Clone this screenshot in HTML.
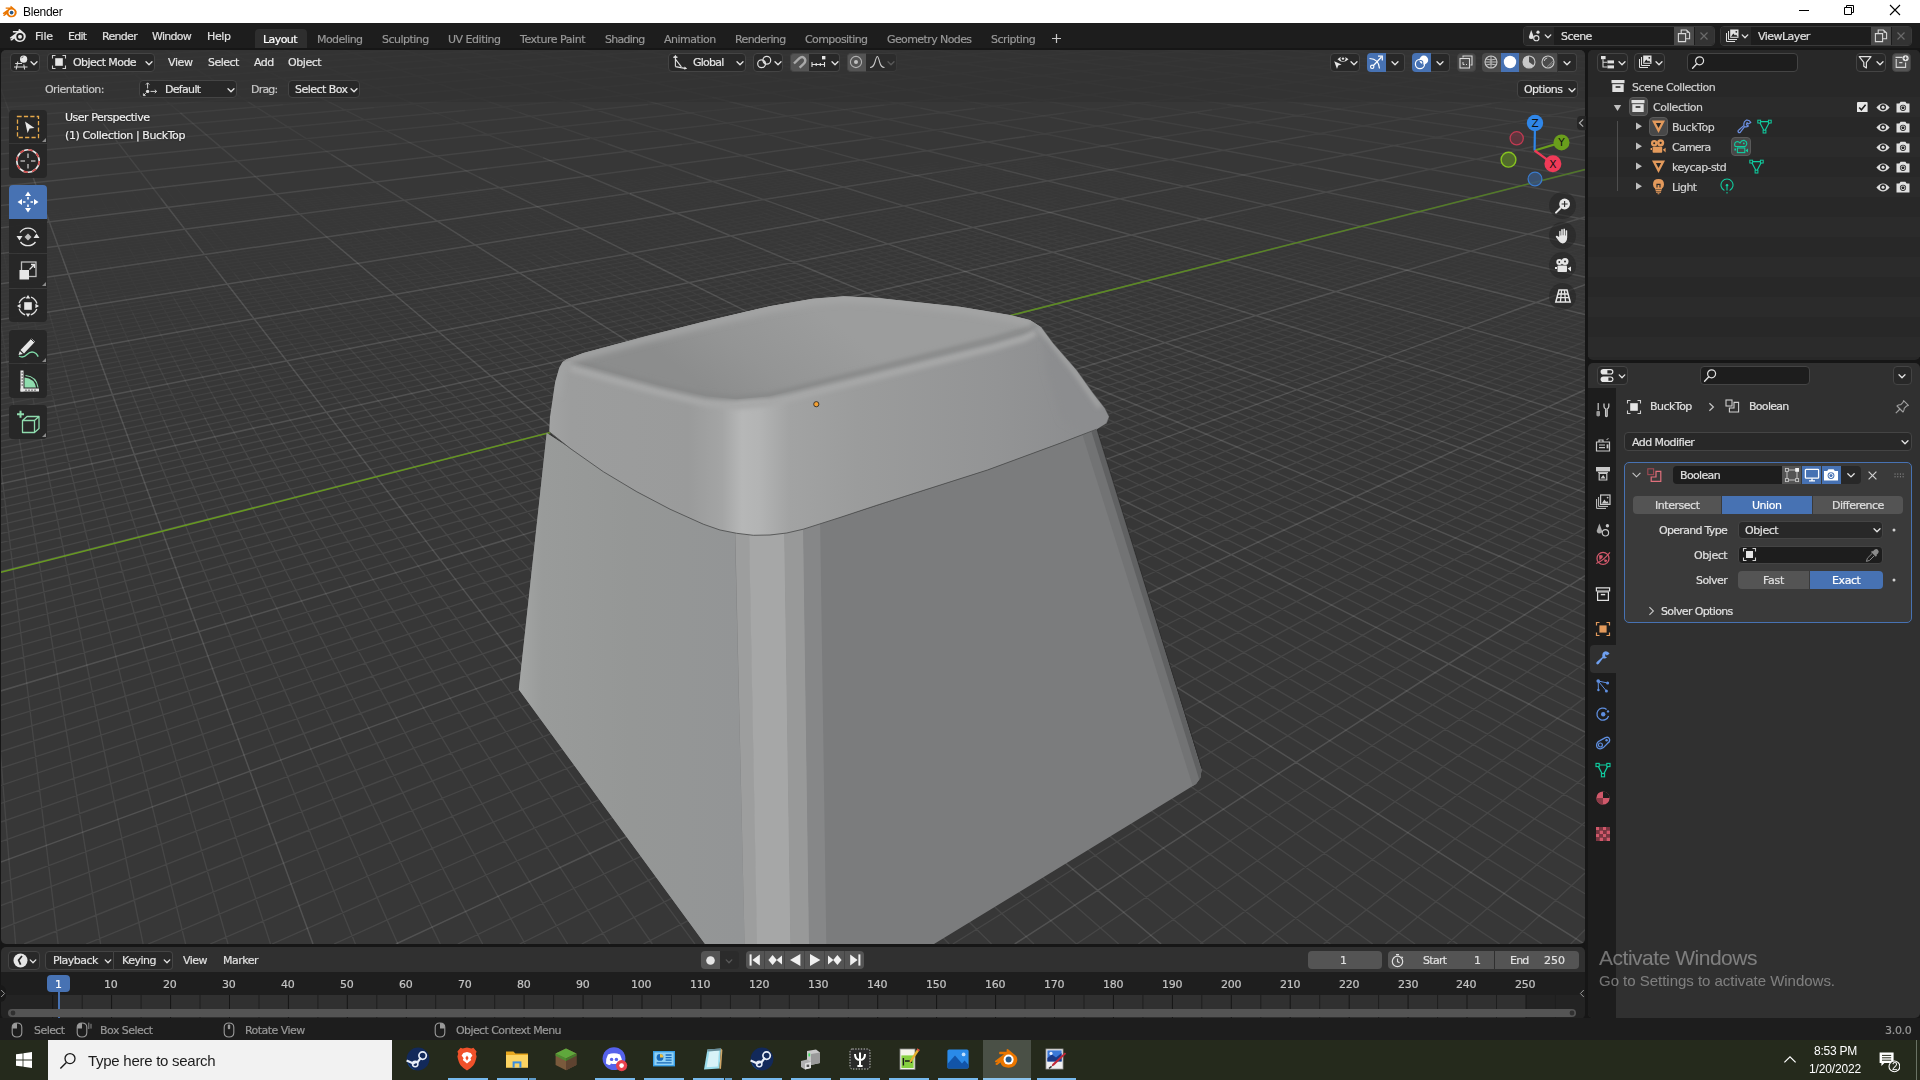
<!DOCTYPE html><html><head><meta charset="utf-8"><title>Blender</title><style>*{box-sizing:border-box;margin:0;padding:0}
html,body{width:1920px;height:1080px;overflow:hidden;background:#161616;font-family:"DejaVu Sans","Liberation Sans",sans-serif;font-size:11px;color:#e6e6e6}
.t{position:absolute;white-space:pre;-webkit-text-stroke:0.2px;will-change:transform}
.b{position:absolute;display:block}
#title{position:absolute;left:0;top:0;width:1920px;height:23px;background:#fff}
#topbar{position:absolute;left:0;top:23px;width:1920px;height:25px;background:#1d1d1d}
#vp{position:absolute;left:1px;top:50px;width:1584px;height:894px;background:#373737;border-radius:5px;overflow:hidden}
#vpsvg{position:absolute;left:0;top:0}
#outl{position:absolute;left:1588px;top:50px;width:332px;height:310px;background:#282828;border-radius:5px;overflow:hidden}
#props{position:absolute;left:1588px;top:363px;width:332px;height:655px;background:#303030;border-radius:5px;overflow:hidden}
#tl{position:absolute;left:1px;top:947px;width:1584px;height:71px;background:#1d1d1d;border-radius:5px;overflow:hidden}
#status{position:absolute;left:0;top:1018px;width:1920px;height:22px;background:#1d1d1d}
#taskbar{position:absolute;left:0;top:1040px;width:1920px;height:40px;background:#252a1c}
</style></head><body>
<div id="title">
<svg class="b" style="left:2.4px;top:4.6px;" width="16" height="15" viewBox="0 0 16 15"><g transform="scale(0.88)"><path d="M1 9.2 L7.6 4.2 L4.2 4.2 L4.2 2.9 L9.6 2.9 L9.6 1.4 Q9.9 0.6 10.8 1.3 L15.6 5.3 Q17.2 7 16.6 9.6 Q15.6 13.6 11 13.9 Q6.6 13.9 5.4 10.4 L3 12.2 Q1.6 12.8 1.3 11.6 L3.6 9.8 L1.6 10.4 Q0.6 10 1 9.2Z" fill="#ea7600"/><circle cx="10.9" cy="8.6" r="3.5" fill="#fff"/><circle cx="10.9" cy="8.6" r="2.1" fill="#265787"/></g></svg>
<span class="t" style="left:23.00px;top:4.74px;font-size:12px;line-height:14px;letter-spacing:-0.266px;color:#000;font-family:'Liberation Sans',sans-serif;-webkit-text-stroke:0;">Blender</span>
<svg class="b" style="left:1797px;top:4px;" width="14" height="14" viewBox="0 0 14 14"><path d="M2 6.5H12" stroke="#000" stroke-width="1"/></svg>
<svg class="b" style="left:1842px;top:3px;" width="14" height="14" viewBox="0 0 14 14"><path d="M2.5 4.5H9.5V11.5H2.5Z M4.5 4.5V2.5H11.5V9.5H9.5" fill="none" stroke="#000" stroke-width="1"/></svg>
<svg class="b" style="left:1888px;top:3px;" width="14" height="14" viewBox="0 0 14 14"><path d="M2 2L12 12M12 2L2 12" stroke="#000" stroke-width="1.1"/></svg>
</div>
<div id="topbar"></div>
<svg class="b" style="left:9px;top:28px;" width="17" height="16" viewBox="0 0 17 16"><g transform="scale(1.0)"><path d="M1 9.6 L7.8 4.4 L4.2 4.4 Q3.4 3.6 4.2 2.9 L9.4 2.9 L9.6 1.4 Q10 0.6 10.9 1.3 L15.6 5.3 Q17.2 7 16.6 9.6 Q15.6 13.8 11 14 Q6.6 14 5.4 10.6 L3 12.4 Q1.6 13 1.3 11.8 L3.6 10 L1.8 10.6 Q0.6 10.4 1 9.6Z" fill="#e6e6e6"/><circle cx="11" cy="8.8" r="3.7" fill="#1d1d1d"/><circle cx="11" cy="8.8" r="2.0" fill="#e6e6e6"/></g></svg>
<span class="t" style="left:35.00px;top:30.00px;font-size:11px;line-height:13px;letter-spacing:-0.102px;color:#e0e0e0;font-family:'DejaVu Sans','Liberation Sans',sans-serif;">File</span>
<span class="t" style="left:68.30px;top:30.00px;font-size:11px;line-height:13px;letter-spacing:-0.726px;color:#e0e0e0;font-family:'DejaVu Sans','Liberation Sans',sans-serif;">Edit</span>
<span class="t" style="left:102.00px;top:30.00px;font-size:11px;line-height:13px;letter-spacing:-0.694px;color:#e0e0e0;font-family:'DejaVu Sans','Liberation Sans',sans-serif;">Render</span>
<span class="t" style="left:152.00px;top:30.00px;font-size:11px;line-height:13px;letter-spacing:-0.729px;color:#e0e0e0;font-family:'DejaVu Sans','Liberation Sans',sans-serif;">Window</span>
<span class="t" style="left:207.00px;top:30.00px;font-size:11px;line-height:13px;letter-spacing:-0.370px;color:#e0e0e0;font-family:'DejaVu Sans','Liberation Sans',sans-serif;">Help</span>
<div class="b" style="left:255px;top:29px;width:52px;height:19px;background:#2e2e2e;border-radius:4px 4px 0 0;"></div>
<span class="t" style="left:263.00px;top:33.00px;font-size:11px;line-height:13px;letter-spacing:-0.566px;color:#ffffff;font-family:'DejaVu Sans','Liberation Sans',sans-serif;">Layout</span>
<span class="t" style="left:317.00px;top:33.00px;font-size:11px;line-height:13px;letter-spacing:-0.567px;color:#989898;font-family:'DejaVu Sans','Liberation Sans',sans-serif;">Modeling</span>
<span class="t" style="left:382.00px;top:33.00px;font-size:11px;line-height:13px;letter-spacing:-0.513px;color:#989898;font-family:'DejaVu Sans','Liberation Sans',sans-serif;">Sculpting</span>
<span class="t" style="left:448.00px;top:33.00px;font-size:11px;line-height:13px;letter-spacing:-0.489px;color:#989898;font-family:'DejaVu Sans','Liberation Sans',sans-serif;">UV Editing</span>
<span class="t" style="left:520.00px;top:33.00px;font-size:11px;line-height:13px;letter-spacing:-0.460px;color:#989898;font-family:'DejaVu Sans','Liberation Sans',sans-serif;">Texture Paint</span>
<span class="t" style="left:605.00px;top:33.00px;font-size:11px;line-height:13px;letter-spacing:-0.741px;color:#989898;font-family:'DejaVu Sans','Liberation Sans',sans-serif;">Shading</span>
<span class="t" style="left:663.75px;top:33.00px;font-size:11px;line-height:13px;letter-spacing:-0.481px;color:#989898;font-family:'DejaVu Sans','Liberation Sans',sans-serif;">Animation</span>
<span class="t" style="left:735.00px;top:33.00px;font-size:11px;line-height:13px;letter-spacing:-0.630px;color:#989898;font-family:'DejaVu Sans','Liberation Sans',sans-serif;">Rendering</span>
<span class="t" style="left:805.00px;top:33.00px;font-size:11px;line-height:13px;letter-spacing:-0.586px;color:#989898;font-family:'DejaVu Sans','Liberation Sans',sans-serif;">Compositing</span>
<span class="t" style="left:887.00px;top:33.00px;font-size:11px;line-height:13px;letter-spacing:-0.592px;color:#989898;font-family:'DejaVu Sans','Liberation Sans',sans-serif;">Geometry Nodes</span>
<span class="t" style="left:991.25px;top:33.00px;font-size:11px;line-height:13px;letter-spacing:-0.519px;color:#989898;font-family:'DejaVu Sans','Liberation Sans',sans-serif;">Scripting</span>
<svg class="b" style="left:1051px;top:33px;" width="11" height="11" viewBox="0 0 11 11"><path d="M5.5 1V10M1 5.5H10" stroke="#c8c8c8" stroke-width="1.2"/></svg>
<div class="b" style="left:1523px;top:26px;width:192px;height:19.5px;background:#1d1d1d;border-radius:4px;border:1px solid #3a3a3a;"></div>
<div class="b" style="left:1524px;top:27px;width:30px;height:17.5px;background:#282828;border-radius:3px 0 0 3px;"></div>
<div class="b" style="left:1674px;top:27px;width:20px;height:17.5px;background:#4a4a4a;"></div>
<div class="b" style="left:1694.5px;top:27px;width:19.5px;height:17.5px;background:#333;border-radius:0 3px 3px 0;"></div>
<span class="t" style="left:1561.00px;top:29.70px;font-size:11px;line-height:13px;letter-spacing:-0.550px;color:#e0e0e0;font-family:'DejaVu Sans','Liberation Sans',sans-serif;">Scene</span>
<svg class="b" style="left:1542.5px;top:31px;" width="10" height="10" viewBox="0 0 10 10"><path d="M2.2 3.9 L5 6.7 L7.8 3.9" fill="none" stroke="#e6e6e6" stroke-width="1.3" stroke-linecap="round" stroke-linejoin="round"/></svg>
<svg class="b" style="left:1676px;top:28px;" width="16" height="16" viewBox="0 0 16 16"><path d="M2.4 5.6H9.6V13.6H2.4Z" fill="none" stroke="#d8d8d8" stroke-width="1.1"/><path d="M5.2 5.4V2H10.4L13.6 5V10.8H9.8" fill="none" stroke="#d8d8d8" stroke-width="1.1"/><path d="M10.6 2.2V4.8H13.2Z" fill="#d8d8d8"/></svg>
<svg class="b" style="left:1697px;top:29px;" width="14" height="14" viewBox="0 0 14 14"><path d="M3.5 3.5L10.5 10.5M10.5 3.5L3.5 10.5" stroke="#6a6a6a" stroke-width="1.2"/></svg>
<svg class="b" style="left:1527px;top:28px;" width="16" height="16" viewBox="0 0 16 16"><path d="M4.2 2 L6.6 8.5 Q7 11 4.2 11 Q1.6 11 2 8.5Z" fill="#e0e0e0"/><circle cx="9.3" cy="10.2" r="2.6" fill="none" stroke="#e0e0e0" stroke-width="1.1"/><circle cx="11" cy="4.2" r="1.6" fill="#e0e0e0"/></svg>
<div class="b" style="left:1720px;top:26px;width:192px;height:19.5px;background:#1d1d1d;border-radius:4px;border:1px solid #3a3a3a;"></div>
<div class="b" style="left:1721px;top:27px;width:30px;height:17.5px;background:#282828;border-radius:3px 0 0 3px;"></div>
<div class="b" style="left:1871px;top:27px;width:20px;height:17.5px;background:#4a4a4a;"></div>
<div class="b" style="left:1891.5px;top:27px;width:19.5px;height:17.5px;background:#333;border-radius:0 3px 3px 0;"></div>
<span class="t" style="left:1758.00px;top:29.70px;font-size:11px;line-height:13px;letter-spacing:-0.550px;color:#e0e0e0;font-family:'DejaVu Sans','Liberation Sans',sans-serif;">ViewLayer</span>
<svg class="b" style="left:1739.5px;top:31px;" width="10" height="10" viewBox="0 0 10 10"><path d="M2.2 3.9 L5 6.7 L7.8 3.9" fill="none" stroke="#e6e6e6" stroke-width="1.3" stroke-linecap="round" stroke-linejoin="round"/></svg>
<svg class="b" style="left:1873px;top:28px;" width="16" height="16" viewBox="0 0 16 16"><path d="M2.4 5.6H9.6V13.6H2.4Z" fill="none" stroke="#d8d8d8" stroke-width="1.1"/><path d="M5.2 5.4V2H10.4L13.6 5V10.8H9.8" fill="none" stroke="#d8d8d8" stroke-width="1.1"/><path d="M10.6 2.2V4.8H13.2Z" fill="#d8d8d8"/></svg>
<svg class="b" style="left:1894px;top:29px;" width="14" height="14" viewBox="0 0 14 14"><path d="M3.5 3.5L10.5 10.5M10.5 3.5L3.5 10.5" stroke="#6a6a6a" stroke-width="1.2"/></svg>
<svg class="b" style="left:1724px;top:28px;" width="16" height="16" viewBox="0 0 16 16"><path d="M2.5 5V13.5H11" fill="none" stroke="#e0e0e0" stroke-width="1"/><path d="M4.5 3V11.5H13" fill="none" stroke="#e0e0e0" stroke-width="1"/><rect x="6.2" y="1.5" width="8.3" height="8.3" fill="#e0e0e0"/><path d="M7 8.8L9.3 5.6L11 7.6L12 6.6L13.7 8.8Z" fill="#222"/><circle cx="12.3" cy="3.8" r="0.9" fill="#222"/></svg>
<div id="vp"><svg id="vpsvg" width="1584" height="894" viewBox="1 50 1584 894">
<path d="M1528.4 252.5 L1585.0 234.6M1528.4 246.1 L1585.0 228.5M1528.4 239.9 L1585.0 222.7M1471.8 244.8 L1528.4 228.2L1585.0 211.6M1471.8 239.0 L1528.4 222.7L1585.0 206.3M1471.8 233.4 L1528.4 217.3L1585.0 201.2M1415.2 243.7 L1471.8 227.9L1528.4 212.1L1585.0 196.3M1415.2 238.2 L1471.8 222.6L1528.4 207.1M1415.2 232.8 L1471.8 217.5L1528.4 202.2M1415.2 227.6 L1471.8 212.6L1528.4 197.5M1358.6 237.4 L1415.2 222.6L1471.8 207.8L1528.4 193.0M1358.6 232.3 L1415.2 217.7L1471.8 203.1M1358.6 222.5 L1415.2 208.4L1471.8 194.2M1302.0 231.8 L1358.6 217.9L1415.2 203.9L1471.8 190.0M1302.0 227.1 L1358.6 213.3L1415.2 199.6M1302.0 222.5 L1358.6 208.9L1415.2 195.4M1302.0 218.0 L1358.6 204.7L1415.2 191.3M1245.4 226.8 L1302.0 213.7L1358.6 200.5L1415.2 187.4M1245.4 222.4 L1302.0 209.4L1358.6 196.5L1415.2 183.5M1245.4 218.1 L1302.0 205.3L1358.6 192.5M1245.4 214.0 L1302.0 201.3L1358.6 188.7M1188.8 218.3 L1245.4 206.0L1302.0 193.7L1358.6 181.4M1188.8 214.2 L1245.4 202.1L1302.0 190.0M1188.8 210.3 L1245.4 198.3L1302.0 186.4M1174.1 209.6 L1232.8 197.3L1291.5 185.0M1115.4 217.9 L1174.1 205.8L1232.8 193.7L1291.5 181.6M1115.4 214.1 L1174.1 202.2L1232.8 190.2L1291.5 178.2M1115.4 210.4 L1174.1 198.6L1232.8 186.8L1291.5 174.9M1115.4 206.8 L1174.1 195.1L1232.8 183.4M1115.4 203.2 L1174.1 191.7L1232.8 180.1M1056.7 207.7 L1115.4 196.4L1174.1 185.1L1232.8 173.8M1056.7 204.2 L1115.4 193.1L1174.1 181.9L1232.8 170.8M1056.7 200.9 L1115.4 189.8L1174.1 178.8M1056.7 197.6 L1115.4 186.7L1174.1 175.8M998.0 205.1 L1056.7 194.4L1115.4 183.6L1174.1 172.8M998.0 201.9 L1056.7 191.2L1115.4 180.6L1174.1 169.9M998.0 198.7 L1056.7 188.1L1115.4 177.6L1174.1 167.1M939.3 206.0 L998.0 195.6L1056.7 185.1L1115.4 174.7M939.3 202.8 L998.0 192.5L1056.7 182.2L1115.4 171.9M880.6 206.8 L939.3 196.7L998.0 186.6L1056.7 176.5L1115.4 166.4M821.9 213.7 L880.6 203.7L939.3 193.7L998.0 183.7L1056.7 173.7L1115.4 163.7M821.9 210.6 L880.6 200.7L939.3 190.8L998.0 180.9L1056.7 171.0L1115.4 161.1M763.1 217.3 L821.9 207.5L880.6 197.7L939.3 187.9L998.0 178.1L1056.7 168.3M763.1 214.2 L821.9 204.5L880.6 194.8L939.3 185.1L998.0 175.4L1056.7 165.7M704.4 220.8 L763.1 211.2L821.9 201.6L880.6 192.0L939.3 182.4L998.0 172.8L1056.7 163.2M704.4 217.7 L763.1 208.2L821.9 198.7L880.6 189.2L939.3 179.7L998.0 170.2L1056.7 160.7M645.7 224.1 L704.4 214.7L763.1 205.3L821.9 195.9L880.6 186.5L939.3 177.0L998.0 167.6L1056.7 158.2M645.7 221.1 L704.4 211.8L763.1 202.4L821.9 193.1L880.6 183.8L939.3 174.4L998.0 165.1L1056.7 155.8M587.0 224.3 L645.7 215.2L704.4 206.0L763.1 196.9L821.9 187.7L880.6 178.6L939.3 169.4L998.0 160.3M528.3 230.4 L587.0 221.4L645.7 212.3L704.4 203.2L763.1 194.2L821.9 185.1L880.6 176.0L939.3 167.0M469.6 236.4 L528.3 227.4L587.0 218.5L645.7 209.5L704.4 200.5L763.1 191.5L821.9 182.5L880.6 173.5L939.3 164.6M469.6 233.4 L528.3 224.5L587.0 215.6L645.7 206.7L704.4 197.8L763.1 188.9L821.9 180.0L880.6 171.1L939.3 162.2M410.9 239.3 L469.6 230.4L528.3 221.6L587.0 212.8L645.7 204.0L704.4 195.2L763.1 186.3L821.9 177.5L880.6 168.7M410.9 236.3 L469.6 227.5L528.3 218.8L587.0 210.0L645.7 201.3L704.4 192.6L763.1 183.8L821.9 175.1L880.6 166.3M352.2 242.0 L410.9 233.3L469.6 224.7L528.3 216.0L587.0 207.3L645.7 198.7L704.4 190.0L763.1 181.4L821.9 172.7M352.2 239.0 L410.9 230.4L469.6 221.8L528.3 213.3L587.0 204.7L645.7 196.1L704.4 187.5L763.1 178.9L821.9 170.3M293.5 244.6 L352.2 236.1L410.9 227.6L469.6 219.1L528.3 210.6L587.0 202.1L645.7 193.6L704.4 185.0L763.1 176.5L821.9 168.0M234.8 247.2 L293.5 238.8L352.2 230.4L410.9 222.1L469.6 213.7L528.3 205.3L587.0 197.0L645.7 188.6L704.4 180.3L763.1 171.9M176.1 252.5 L234.8 244.2L293.5 236.0L352.2 227.7L410.9 219.4L469.6 211.1L528.3 202.8L587.0 194.5L645.7 186.2L704.4 177.9M176.1 249.6 L234.8 241.4L293.5 233.2L352.2 224.9L410.9 216.7L469.6 208.5L528.3 200.3L587.0 192.1L645.7 183.8L704.4 175.6M117.4 254.9 L176.1 246.7L234.8 238.6L293.5 230.4L352.2 222.3L410.9 214.1L469.6 206.0L528.3 197.8L587.0 189.7L645.7 181.5M58.7 260.1 L117.4 252.0L176.1 243.9L234.8 235.8L293.5 227.7L352.2 219.6L410.9 211.6L469.6 203.5L528.3 195.4L587.0 187.3L645.7 179.2M58.6 257.1 L117.3 249.1L175.9 241.1L234.5 233.1L293.1 225.1L351.8 217.1L410.4 209.1L469.0 201.1L527.6 193.1L586.3 185.1M0.0 262.2 L58.3 254.3L116.6 246.4L174.9 238.5L233.2 230.6L291.5 222.7L349.8 214.8L408.2 206.9L466.5 199.0L524.8 191.1L583.1 183.2M0.0 259.3 L58.0 251.5L116.0 243.7L174.0 236.0L232.0 228.2L289.9 220.4L347.9 212.6L405.9 204.8L463.9 197.0L521.9 189.2L579.9 181.4M0.0 256.5 L57.7 248.8L115.3 241.1L173.0 233.4L230.7 225.7L288.4 218.1L346.0 210.4L403.7 202.7L461.4 195.0L519.0 187.3M0.0 250.9 L59.2 243.1L118.5 235.4L177.7 227.6L236.9 219.9L296.1 212.1L355.4 204.3L414.6 196.6L473.8 188.8M0.0 248.2 L58.9 240.5L117.8 232.9L176.7 225.2L235.6 217.6L294.5 209.9L353.4 202.2L412.3 194.6M0.0 245.5 L58.6 238.0L117.1 230.4L175.7 222.9L234.3 215.3L292.8 207.7L351.4 200.2L410.0 192.6M0.0 242.9 L58.2 235.4L116.5 228.0L174.7 220.5L232.9 213.1L291.2 205.6L349.4 198.2L407.6 190.7M0.0 240.3 L57.9 233.0L115.8 225.6L173.7 218.2L231.6 210.9L289.5 203.5L347.4 196.2M0.0 237.8 L57.6 230.5L115.1 223.2L172.7 216.0L230.3 208.7L287.9 201.5L345.4 194.2M0.0 235.2 L59.5 227.8L119.1 220.3L178.6 212.9L238.1 205.4L297.7 198.0M0.0 232.8 L59.2 225.4L118.4 218.1L177.6 210.7L236.7 203.4M0.0 230.3 L58.8 223.1L117.7 215.8L176.5 208.6L235.4 201.3M0.0 225.6 L58.2 218.5L116.3 211.4L174.5 204.4M0.0 223.2 L57.8 216.3L115.6 209.3M0.0 220.9 L57.5 214.0L114.9 207.2M0.0 218.7 L59.5 211.6M0.0 216.4 L59.1 209.4M32.6 254.4 L16.3 196.9M54.1 276.6 L36.1 221.0M93.6 262.8 L70.2 210.4M106.7 259.6 L81.0 206.9M121.2 259.6 L93.4 206.9M129.1 247.9 L100.8 198.2M143.1 247.9 L112.8 198.2M157.2 247.9 L124.8 198.2M164.0 237.4 L131.4 190.3M177.6 237.4 L143.1 190.3M197.2 228.0 L160.8 183.2M210.4 228.0 L172.2 183.2M254.1 262.1 L216.0 219.5M268.8 262.1 L228.9 219.5M283.4 262.1 L241.7 219.5M288.1 252.4 L246.7 211.7M302.3 252.4 L259.3 211.7M306.8 243.6 L264.1 204.7M320.7 243.6 L276.3 204.7M338.5 235.5 L292.9 198.2M342.6 228.0 L297.4 192.2M355.8 228.0 L309.2 192.2M369.0 228.0 L320.9 192.2M372.7 221.1 L325.0 186.7M385.6 221.1 L336.6 186.7M437.7 247.9 L389.2 214.7L340.6 181.6M451.7 247.9 L401.8 214.7L351.9 181.6M454.8 240.8 L405.3 208.8M473.3 235.3 L422.7 204.3M477.9 230.0 L427.6 199.8M482.6 225.0 L432.5 195.6M498.3 226.5 L446.6 196.9M502.9 221.7 L451.4 192.9M507.5 217.2 L456.2 189.1M563.2 240.1 L512.1 212.8L461.0 185.5M528.5 214.8 L475.6 187.2M585.6 237.6 L533.0 210.6L480.4 183.7M594.2 228.5 L542.1 202.8L490.0 177.2M613.1 231.2 L559.1 205.2L505.1 179.2M617.4 226.9 L563.6 201.5L509.8 176.1M621.6 222.8 L568.1 198.0M625.9 218.9 L572.6 194.6M630.1 215.0 L577.1 191.3M634.4 211.3 L581.6 188.2M654.0 214.4 L599.2 190.8M658.2 210.8 L603.6 187.7M720.5 226.2 L666.5 204.0L612.5 181.9M724.5 222.5 L670.7 200.8L616.9 179.1M728.4 218.9 L674.9 197.7L621.3 176.4M750.9 222.7 L695.3 201.0L639.7 179.3M754.7 219.2 L699.4 197.9L644.0 176.7M758.6 215.8 L703.5 195.0L648.4 174.1M762.4 212.5 L707.6 192.1L652.8 171.7M766.3 209.4 L711.7 189.3L657.1 169.3M770.1 206.3 L715.8 186.6M797.4 207.2 L741.1 187.4L684.9 167.7M801.1 204.3 L745.2 184.8M860.6 220.4 L804.9 201.4L749.2 182.3M864.1 217.3 L808.7 198.6L753.2 179.9M867.6 214.2 L812.4 195.8L757.2 177.5M871.1 211.2 L816.2 193.2L761.2 175.2M874.6 208.3 L819.9 190.6L765.3 172.9M901.3 212.9 L844.4 194.7L787.4 176.5M904.7 210.0 L848.0 192.1L791.3 174.2M911.4 204.5 L855.3 187.2L799.2 169.9M914.8 201.8 L859.0 184.8L803.1 167.8M918.2 199.2 L862.6 182.5L807.0 165.8M921.5 196.6 L866.2 180.2L811.0 163.8M979.9 210.3 L924.9 194.1L869.9 178.0L814.9 161.9M952.9 198.8 L895.4 182.2L838.0 165.5M956.1 196.3 L899.0 180.0L841.8 163.6M959.4 193.9 L902.5 177.8L845.6 161.7M1019.2 207.4 L962.6 191.5L906.0 175.7L849.4 159.9M1025.1 202.3 L969.1 186.9L913.1 171.6M1028.0 199.8 L972.3 184.7L916.6 169.6M1031.0 197.4 L975.5 182.5L920.1 167.7M1089.0 209.6 L1033.9 195.0L978.8 180.4L923.7 165.8M1065.7 200.2 L1008.0 185.1L950.3 170.0M1125.9 212.7 L1068.5 197.9L1011.1 183.0L953.7 168.1M1128.3 210.2 L1071.3 195.5L1014.2 180.9L957.1 166.2M1130.8 207.7 L1074.0 193.2L1017.3 178.8L960.5 164.4M1189.8 219.4 L1133.3 205.2L1076.8 191.0L1020.4 176.8L963.9 162.6M1194.1 214.2 L1138.2 200.4L1082.4 186.6L1026.5 172.9L970.7 159.1M1251.8 225.2 L1196.2 211.6L1140.7 198.1L1085.2 184.5L1029.6 171.0L974.1 157.4M1235.2 218.1 L1176.9 204.0L1118.6 189.9L1060.3 175.8L1002.1 161.7M1295.2 229.4 L1237.2 215.5L1179.2 201.6L1121.3 187.7L1063.3 173.9L1005.3 160.0M1296.8 226.6 L1239.1 213.0L1181.5 199.3L1123.9 185.6L1066.2 172.0L1008.6 158.3M1298.4 223.9 L1241.1 210.5L1183.8 197.0L1126.5 183.6L1069.2 170.1L1011.8 156.7M1357.0 234.6 L1300.1 221.3L1243.1 208.1L1186.1 194.8L1129.1 181.6L1072.1 168.3M1358.3 231.8 L1301.7 218.7L1245.0 205.7L1188.4 192.6L1131.7 179.6L1075.0 166.5M1359.7 229.1 L1303.3 216.2L1247.0 203.3L1190.6 190.5L1134.3 177.6L1078.0 164.8M1417.9 236.3 L1362.3 223.8L1306.6 211.3L1250.9 198.8L1195.2 186.3L1139.5 173.8L1083.8 161.4M1418.9 233.5 L1363.6 221.2L1308.2 208.9L1252.8 196.6L1197.5 184.3L1142.1 172.0M1468.5 241.5 L1410.2 228.6L1351.9 215.8L1293.6 203.0L1235.4 190.1L1177.1 177.3L1118.8 164.5M1469.2 238.6 L1411.2 226.0L1353.3 213.4L1295.4 200.7L1237.5 188.1L1179.5 175.4M1527.4 248.3 L1469.8 235.9L1412.3 223.4L1354.7 211.0L1297.1 198.5L1239.5 186.0L1181.9 173.6M1527.8 245.4 L1470.5 233.2L1413.3 220.9L1356.1 208.6L1298.8 196.3L1241.6 184.0L1184.4 171.8M1585.0 254.7 L1528.1 242.6L1471.2 230.5L1414.3 218.4L1357.4 206.3L1300.6 194.2L1243.7 182.1L1186.8 170.0M1585.0 251.7 L1528.5 239.8L1471.9 227.8L1415.4 215.9L1358.8 204.0L1302.3 192.1L1245.7 180.1M1585.0 248.8 L1528.8 237.0L1472.6 225.3L1416.4 213.5L1360.2 201.8L1304.0 190.0L1247.8 178.3M1585.0 243.0 L1529.5 231.6L1474.0 220.2L1418.5 208.8L1363.0 197.4L1307.4 186.0M1585.0 240.2 L1526.4 228.3L1467.8 216.3L1409.2 204.4L1350.5 192.4L1291.9 180.5M1585.0 237.5 L1526.8 225.7L1468.5 213.9L1410.3 202.2L1352.0 190.4M1585.0 234.8 L1527.1 223.2L1469.2 211.6L1411.4 200.0L1353.5 188.4M1585.0 232.2 L1527.5 220.7L1470.0 209.3L1412.5 197.8L1354.9 186.4M1585.0 229.5 L1527.9 218.3L1470.7 207.0L1413.6 195.7L1356.4 184.4M1585.0 227.0 L1528.2 215.8L1471.4 204.7L1414.7 193.6M1585.0 224.4 L1528.6 213.5L1472.2 202.5L1415.8 191.5M1585.0 222.0 L1529.0 211.1L1472.9 200.3L1416.9 189.5M1585.0 217.1 L1529.7 206.6L1474.4 196.1M1585.0 214.7 L1526.4 203.7M1585.0 212.4 L1526.8 201.5M1585.0 210.1 L1527.2 199.3" stroke="#fff" stroke-opacity="0.010" fill="none" stroke-width="1.35"/>
<path d="M1530.3 296.1 L1585.0 276.6M1528.4 288.6 L1585.0 268.9M1528.4 280.8 L1585.0 261.5M1528.4 273.3 L1585.0 254.4M1471.8 284.7 L1528.4 266.1L1585.0 247.5M1471.8 277.4 L1528.4 259.2L1585.0 241.0M1471.8 270.4 L1528.4 252.5M1415.2 281.2 L1471.8 263.7L1528.4 246.1M1415.2 274.4 L1471.8 257.2L1528.4 239.9M1415.2 261.5 L1471.8 244.8M1358.6 271.7 L1415.2 255.3L1471.8 239.0M1358.6 265.5 L1415.2 249.4L1471.8 233.4M1358.6 259.5 L1415.2 243.7M1302.0 269.2 L1358.6 253.7L1415.2 238.2M1302.0 263.4 L1358.6 248.1L1415.2 232.8M1302.0 257.7 L1358.6 242.6L1415.2 227.6M1302.0 252.2 L1358.6 237.4M1245.4 261.4 L1302.0 246.9L1358.6 232.3M1245.4 250.8 L1302.0 236.7L1358.6 222.5M1245.4 245.7 L1302.0 231.8M1188.8 254.5 L1245.4 240.8L1302.0 227.1M1188.8 249.5 L1245.4 236.0L1302.0 222.5M1188.8 244.7 L1245.4 231.4L1302.0 218.0M1188.8 240.0 L1245.4 226.8M1132.1 248.4 L1188.8 235.4L1245.4 222.4M1132.1 243.7 L1188.8 230.9L1245.4 218.1M1132.1 239.2 L1188.8 226.6L1245.4 214.0M1075.5 242.8 L1132.1 230.5L1188.8 218.3M1075.5 238.5 L1132.1 226.4L1188.8 214.2M1075.5 234.3 L1132.1 222.3L1188.8 210.3M1056.7 234.1 L1115.4 221.9L1174.1 209.6M1056.7 230.1 L1115.4 217.9M1056.7 226.1 L1115.4 214.1M998.0 234.1 L1056.7 222.2L1115.4 210.4M998.0 230.1 L1056.7 218.5L1115.4 206.8M939.3 237.9 L998.0 226.3L1056.7 214.8L1115.4 203.2M880.6 241.5 L939.3 230.2L998.0 218.9L1056.7 207.7M880.6 237.7 L939.3 226.5L998.0 215.4L1056.7 204.2M821.9 244.9 L880.6 233.9L939.3 222.9L998.0 211.9L1056.7 200.9M821.9 241.2 L880.6 230.3L939.3 219.4L998.0 208.5L1056.7 197.6M763.1 248.2 L821.9 237.5L880.6 226.7L939.3 215.9L998.0 205.1M704.4 255.2 L763.1 244.5L821.9 233.8L880.6 223.2L939.3 212.5L998.0 201.9M704.4 251.4 L763.1 240.8L821.9 230.3L880.6 219.8L939.3 209.2L998.0 198.7M645.7 258.1 L704.4 247.7L763.1 237.3L821.9 226.8L880.6 216.4L939.3 206.0M645.7 254.4 L704.4 244.1L763.1 233.8L821.9 223.5L880.6 213.1L939.3 202.8M528.3 267.4 L587.0 257.3L645.7 247.2L704.4 237.1L763.1 227.0L821.9 216.9L880.6 206.8M528.3 263.7 L587.0 253.7L645.7 243.7L704.4 233.7L763.1 223.7L821.9 213.7M469.6 270.0 L528.3 260.1L587.0 250.2L645.7 240.3L704.4 230.4L763.1 220.5L821.9 210.6M469.6 266.3 L528.3 256.5L587.0 246.7L645.7 236.9L704.4 227.1L763.1 217.3M410.9 272.4 L469.6 262.7L528.3 253.0L587.0 243.3L645.7 233.6L704.4 223.9L763.1 214.2M352.2 278.4 L410.9 268.8L469.6 259.2L528.3 249.6L587.0 240.0L645.7 230.4L704.4 220.8M352.2 274.8 L410.9 265.3L469.6 255.8L528.3 246.3L587.0 236.7L645.7 227.2L704.4 217.7M293.5 280.6 L352.2 271.2L410.9 261.8L469.6 252.4L528.3 243.0L587.0 233.5L645.7 224.1M234.8 286.4 L293.5 277.1L352.2 267.7L410.9 258.4L469.6 249.1L528.3 239.7L587.0 230.4L645.7 221.1M176.1 288.4 L234.8 279.2L293.5 270.1L352.2 260.9L410.9 251.8L469.6 242.6L528.3 233.5L587.0 224.3M117.4 293.9 L176.1 284.8L234.8 275.8L293.5 266.7L352.2 257.6L410.9 248.6L469.6 239.5L528.3 230.4M117.4 290.3 L176.1 281.3L234.8 272.3L293.5 263.4L352.2 254.4L410.9 245.4L469.6 236.4M58.7 295.7 L117.4 286.8L176.1 277.9L234.8 269.0L293.5 260.1L352.2 251.2L410.9 242.3L469.6 233.4M0.0 301.0 L58.7 292.2L117.4 283.3L176.1 274.5L234.8 265.7L293.5 256.9L352.2 248.1L410.9 239.3M0.0 297.4 L58.7 288.7L117.4 280.0L176.1 271.2L234.8 262.5L293.5 253.7L352.2 245.0L410.9 236.3M0.0 294.0 L58.7 285.3L117.4 276.6L176.1 268.0L234.8 259.3L293.5 250.6L352.2 242.0M0.0 290.5 L58.7 281.9L117.4 273.4L176.1 264.8L234.8 256.2L293.5 247.6L352.2 239.0M0.0 287.2 L58.7 278.7L117.4 270.1L176.1 261.6L234.8 253.1L293.5 244.6M0.0 280.6 L58.7 272.2L117.4 263.9L176.1 255.5L234.8 247.2M0.0 277.4 L58.7 269.1L117.4 260.8L176.1 252.5M0.0 274.3 L58.7 266.0L117.4 257.8L176.1 249.6M0.0 271.2 L58.7 263.0L117.4 254.9M0.0 268.1 L58.7 260.1M0.0 265.2 L58.6 257.1M11.0 289.5 L0.0 235.0M26.5 288.5 L13.3 233.8M48.9 311.9 L32.6 254.4M88.9 287.2 L66.6 232.5M117.0 315.2 L93.6 262.8M132.4 312.2 L106.7 259.6M149.0 312.2 L121.2 259.6M157.4 297.6 L129.1 247.9M173.5 297.6 L143.1 247.9M189.5 297.6 L157.2 247.9M196.6 284.5 L164.0 237.4M212.1 284.5 L177.6 237.4M233.6 272.8 L197.2 228.0M248.6 272.8 L210.4 228.0M329.5 293.1 L288.1 252.4M345.4 293.1 L302.3 252.4M349.6 282.5 L306.8 243.6M365.0 282.5 L320.7 243.6M384.0 272.8 L338.5 235.5M387.7 263.8 L342.6 228.0M402.4 263.8 L355.8 228.0M417.1 263.8 L369.0 228.0M420.3 255.5 L372.7 221.1M434.6 255.5 L385.6 221.1M486.3 281.0 L437.7 247.9M501.6 281.0 L451.7 247.9M504.2 272.8 L454.8 240.8M523.8 266.4 L473.3 235.3M528.2 260.2 L477.9 230.0M532.7 254.3 L482.6 225.0M550.1 256.1 L498.3 226.5M554.4 250.5 L502.9 221.7M610.1 273.2 L558.8 245.2L507.5 217.2M614.3 267.4 L563.2 240.1M634.1 270.1 L581.3 242.4L528.5 214.8M638.2 264.5 L585.6 237.6M646.4 254.1 L594.2 228.5M667.1 257.2 L613.1 231.2M671.1 252.4 L617.4 226.9M675.1 247.6 L621.6 222.8M679.2 243.1 L625.9 218.9M736.2 262.5 L683.2 238.7L630.1 215.0M740.0 257.7 L687.2 234.5L634.4 211.3M763.5 261.7 L708.7 238.0L654.0 214.4M767.2 257.1 L712.7 234.0L658.2 210.8M774.6 248.3 L720.5 226.2M778.3 244.2 L724.5 222.5M782.0 240.2 L728.4 218.9M806.5 244.4 L750.9 222.7M810.1 240.5 L754.7 219.2M813.7 236.7 L758.6 215.8M817.3 233.0 L762.4 212.5M875.4 249.4 L820.9 229.4L766.3 209.4M878.8 245.6 L824.5 225.9L770.1 206.3M909.9 246.8 L853.7 227.0L797.4 207.2M913.1 243.1 L857.1 223.7L801.1 204.3M916.3 239.5 L860.6 220.4M919.6 236.0 L864.1 217.3M922.8 232.6 L867.6 214.2M926.0 229.2 L871.1 211.2M929.2 226.0 L874.6 208.3M958.3 231.1 L901.3 212.9M961.4 227.9 L904.7 210.0M1023.7 239.0 L967.6 221.7L911.4 204.5M1026.5 235.7 L970.7 218.8L914.8 201.8M1029.3 232.5 L973.7 215.9L918.2 199.2M1032.1 229.4 L976.8 213.0L921.5 196.6M1089.9 242.5 L1034.9 226.4L979.9 210.3M1067.8 232.1 L1010.4 215.5L952.9 198.8M1127.6 245.5 L1070.5 229.1L1013.3 212.7L956.1 196.3M1130.0 242.2 L1073.1 226.1L1016.2 210.0L959.4 193.9M1132.4 239.0 L1075.8 223.2L1019.2 207.4M1193.1 248.2 L1137.1 232.9L1081.1 217.6L1025.1 202.3M1195.1 245.0 L1139.4 229.9L1083.7 214.9L1028.0 199.8M1252.6 256.7 L1197.2 241.9L1141.8 227.0L1086.4 212.2L1031.0 197.4M1254.3 253.4 L1199.2 238.8L1144.1 224.2L1089.0 209.6M1296.5 260.7 L1238.8 245.6L1181.1 230.5L1123.4 215.4L1065.7 200.2M1298.0 257.4 L1240.6 242.5L1183.3 227.6L1125.9 212.7M1356.7 268.8 L1299.6 254.1L1242.5 239.5L1185.4 224.8L1128.3 210.2M1357.9 265.3 L1301.1 250.9L1244.4 236.5L1187.6 222.1L1130.8 207.7M1415.6 276.2 L1359.1 262.0L1302.7 247.8L1246.2 233.6L1189.8 219.4M1417.5 269.2 L1361.6 255.5L1305.8 241.7L1249.9 227.9L1194.1 214.2M1473.9 279.4 L1418.4 265.8L1362.9 252.3L1307.3 238.7L1251.8 225.2M1468.4 274.4 L1410.1 260.3L1351.8 246.2L1293.5 232.1L1235.2 218.1M1527.0 284.8 L1469.1 271.0L1411.1 257.1L1353.1 243.2L1295.2 229.4M1527.4 281.3 L1469.7 267.6L1412.1 254.0L1354.4 240.3L1296.8 226.6M1585.0 291.2 L1527.7 277.8L1470.4 264.3L1413.1 250.9L1355.7 237.4L1298.4 223.9M1585.0 287.6 L1528.0 274.3L1471.0 261.1L1414.0 247.8L1357.0 234.6M1585.0 284.0 L1528.3 271.0L1471.7 257.9L1415.0 244.9L1358.3 231.8M1585.0 280.5 L1528.7 267.7L1472.3 254.8L1416.0 241.9L1359.7 229.1M1585.0 273.7 L1529.3 261.2L1473.6 248.7L1417.9 236.3M1585.0 270.4 L1529.6 258.1L1474.3 245.8L1418.9 233.5M1585.0 267.1 L1526.7 254.3L1468.5 241.5M1585.0 263.9 L1527.1 251.3L1469.2 238.6M1585.0 260.8 L1527.4 248.3M1585.0 257.7 L1527.8 245.4" stroke="#fff" stroke-opacity="0.020" fill="none" stroke-width="1.35"/>
<path d="M1530.3 322.7 L1585.0 301.8M1530.3 313.4 L1585.0 293.1M1475.7 315.6 L1530.3 296.1M1471.8 308.4 L1528.4 288.6M1471.8 300.2 L1528.4 280.8M1415.2 311.3 L1471.8 292.3L1528.4 273.3M1415.2 303.3 L1471.8 284.7M1415.2 295.7 L1471.8 277.4M1358.6 306.2 L1415.2 288.3L1471.8 270.4M1358.6 298.8 L1415.2 281.2M1358.6 291.7 L1415.2 274.4M1302.0 294.8 L1358.6 278.1L1415.2 261.5M1302.0 288.0 L1358.6 271.7M1302.0 281.6 L1358.6 265.5M1245.4 291.1 L1302.0 275.3L1358.6 259.5M1245.4 284.8 L1302.0 269.2M1245.4 278.7 L1302.0 263.4M1188.8 287.8 L1245.4 272.7L1302.0 257.7M1188.8 281.8 L1245.4 267.0L1302.0 252.2M1188.8 276.0 L1245.4 261.4M1132.1 279.1 L1188.8 265.0L1245.4 250.8M1132.1 273.6 L1188.8 259.7L1245.4 245.7M1132.1 268.3 L1188.8 254.5M1132.1 263.1 L1188.8 249.5M1075.5 271.4 L1132.1 258.0L1188.8 244.7M1075.5 266.3 L1132.1 253.1L1188.8 240.0M1075.5 261.3 L1132.1 248.4M1075.5 256.5 L1132.1 243.7M1018.9 264.5 L1075.5 251.8L1132.1 239.2M1018.9 255.1 L1075.5 242.8M962.3 262.8 L1018.9 250.6L1075.5 238.5M962.3 258.3 L1018.9 246.3L1075.5 234.3M939.3 258.7 L998.0 246.4L1056.7 234.1M880.6 266.4 L939.3 254.3L998.0 242.2L1056.7 230.1M821.9 274.0 L880.6 262.0L939.3 250.0L998.0 238.1L1056.7 226.1M821.9 269.5 L880.6 257.7L939.3 245.9L998.0 234.1M763.1 276.9 L821.9 265.2L880.6 253.5L939.3 241.8L998.0 230.1M704.4 284.0 L763.1 272.5L821.9 260.9L880.6 249.4L939.3 237.9M645.7 286.6 L704.4 275.3L763.1 264.0L821.9 252.8L880.6 241.5M587.0 293.4 L645.7 282.2L704.4 271.1L763.1 259.9L821.9 248.8L880.6 237.7M587.0 289.0 L645.7 278.0L704.4 267.0L763.1 256.0L821.9 244.9M528.3 295.6 L587.0 284.7L645.7 273.8L704.4 263.0L763.1 252.1L821.9 241.2M469.6 302.1 L528.3 291.3L587.0 280.6L645.7 269.8L704.4 259.0L763.1 248.2M469.6 297.8 L528.3 287.1L587.0 276.5L645.7 265.8L704.4 255.2M410.9 304.1 L469.6 293.6L528.3 283.0L587.0 272.5L645.7 261.9L704.4 251.4M352.2 310.3 L410.9 299.8L469.6 289.4L528.3 279.0L587.0 268.6L645.7 258.1M293.5 316.3 L352.2 306.0L410.9 295.7L469.6 285.4L528.3 275.0L587.0 264.7L645.7 254.4M234.8 317.9 L293.5 307.8L352.2 297.7L410.9 287.6L469.6 277.5L528.3 267.4M176.1 323.7 L234.8 313.7L293.5 303.7L352.2 293.7L410.9 283.7L469.6 273.7L528.3 263.7M117.4 329.4 L176.1 319.5L234.8 309.6L293.5 299.7L352.2 289.8L410.9 279.9L469.6 270.0M117.4 325.1 L176.1 315.3L234.8 305.5L293.5 295.7L352.2 285.9L410.9 276.1L469.6 266.3M58.7 330.6 L117.4 320.9L176.1 311.2L234.8 301.5L293.5 291.8L352.2 282.1L410.9 272.4M0.0 336.1 L58.7 326.4L117.4 316.8L176.1 307.2L234.8 297.6L293.5 288.0L352.2 278.4M0.0 331.9 L58.7 322.3L117.4 312.8L176.1 303.3L234.8 293.8L293.5 284.3L352.2 274.8M0.0 327.7 L58.7 318.3L117.4 308.9L176.1 299.5L234.8 290.1L293.5 280.6M0.0 323.7 L58.7 314.4L117.4 305.0L176.1 295.7L234.8 286.4M0.0 315.8 L58.7 306.7L117.4 297.5L176.1 288.4M0.0 312.0 L58.7 303.0L117.4 293.9M0.0 308.3 L58.7 299.3L117.4 290.3M0.0 304.6 L58.7 295.7M22.0 344.1 L11.0 289.5M39.8 343.1 L26.5 288.5M72.1 332.2 L54.1 276.6M111.1 341.9 L88.9 287.2M185.7 347.3 L157.4 297.6M229.1 331.6 L196.6 284.5M246.6 331.6 L212.1 284.5M270.0 317.5 L233.6 272.8M286.9 317.5 L248.6 272.8M292.3 304.7 L254.1 262.1M308.6 304.7 L268.8 262.1M325.0 304.7 L283.4 262.1M392.3 321.4 L349.6 282.5M409.3 321.4 L365.0 282.5M429.5 310.0 L384.0 272.8M432.9 299.6 L387.7 263.8M449.0 299.6 L402.4 263.8M465.1 299.6 L417.1 263.8M467.9 290.0 L420.3 255.5M483.6 290.0 L434.6 255.5M553.6 304.7 L504.2 272.8M574.3 297.4 L523.8 266.4M578.6 290.3 L528.2 260.2M582.8 283.6 L532.7 254.3M601.8 285.6 L550.1 256.1M606.0 279.3 L554.4 250.5M665.4 294.7 L614.3 267.4M686.9 297.7 L634.1 270.1M690.8 291.5 L638.2 264.5M698.5 279.8 L646.4 254.1M721.1 283.3 L667.1 257.2M724.9 277.8 L671.1 252.4M728.7 272.5 L675.1 247.6M732.4 267.4 L679.2 243.1M789.3 286.2 L736.2 262.5M792.8 280.9 L740.0 257.7M818.3 285.3 L763.5 261.7M821.7 280.2 L767.2 257.1M828.6 270.5 L774.6 248.3M832.0 265.9 L778.3 244.2M835.5 261.4 L782.0 240.2M862.1 266.1 L806.5 244.4M865.4 261.8 L810.1 240.5M868.8 257.5 L813.7 236.7M926.9 273.9 L872.1 253.4L817.3 233.0M930.0 269.5 L875.4 249.4M933.1 265.2 L878.8 245.6M966.2 266.5 L909.9 246.8M969.1 262.5 L913.1 243.1M972.1 258.5 L916.3 239.5M975.0 254.7 L919.6 236.0M978.0 250.9 L922.8 232.6M1035.8 265.3 L980.9 247.3L926.0 229.2M1038.5 261.4 L983.9 243.7L929.2 226.0M1072.3 267.6 L1015.3 249.3L958.3 231.1M1074.8 263.7 L1018.1 245.8L961.4 227.9M1136.0 273.6 L1079.8 256.3L1023.7 239.0M1138.2 269.7 L1082.4 252.7L1026.5 235.7M1196.0 282.6 L1140.4 265.9L1084.9 249.2L1029.3 232.5M1198.0 278.6 L1142.7 262.2L1087.4 245.8L1032.1 229.4M1199.9 274.8 L1144.9 258.6L1089.9 242.5M1240.2 282.1 L1182.8 265.4L1125.3 248.8L1067.8 232.1M1299.2 294.6 L1242.0 278.2L1184.8 261.8L1127.6 245.5M1300.6 290.5 L1243.7 274.4L1186.9 258.3L1130.0 242.2M1358.7 302.4 L1302.1 286.6L1245.5 270.7L1188.9 254.9L1132.4 239.0M1361.0 294.2 L1305.0 278.9L1249.0 263.6L1193.1 248.2M1417.9 305.3 L1362.2 290.3L1306.5 275.2L1250.8 260.1L1195.1 245.0M1418.8 301.2 L1363.4 286.4L1308.0 271.5L1252.6 256.7M1474.8 311.8 L1419.7 297.2L1364.6 282.6L1309.4 268.0L1254.3 253.4M1527.3 321.2 L1469.6 306.1L1411.9 291.0L1354.2 275.9L1296.5 260.7M1527.6 316.9 L1470.2 302.1L1412.8 287.2L1355.4 272.3L1298.0 257.4M1585.0 327.4 L1527.9 312.7L1470.8 298.1L1413.8 283.4L1356.7 268.8M1585.0 323.0 L1528.2 308.6L1471.5 294.2L1414.7 279.8L1357.9 265.3M1585.0 318.8 L1528.5 304.6L1472.1 290.4L1415.6 276.2M1585.0 310.5 L1529.2 296.8L1473.3 283.0L1417.5 269.2M1585.0 306.5 L1529.5 293.0L1473.9 279.4M1585.0 302.6 L1526.7 288.5L1468.4 274.4M1585.0 298.7 L1527.0 284.8M1585.0 294.9 L1527.4 281.3" stroke="#fff" stroke-opacity="0.030" fill="none" stroke-width="1.35"/>
<path d="M1529.5 353.5 L1585.0 330.8M1531.2 342.2 L1585.0 320.7M1475.7 353.7 L1530.3 332.4L1585.0 311.1M1475.7 343.5 L1530.3 322.7M1475.7 333.8 L1530.3 313.4M1421.0 335.1 L1475.7 315.6M1415.2 328.2 L1471.8 308.4M1358.6 338.9 L1415.2 319.6L1471.8 300.2M1358.6 330.3 L1415.2 311.3M1358.6 321.9 L1415.2 303.3M1302.0 332.2 L1358.6 313.9L1415.2 295.7M1302.0 324.1 L1358.6 306.2M1302.0 316.4 L1358.6 298.8M1302.0 308.9 L1358.6 291.7M1245.4 311.4 L1302.0 294.8M1245.4 304.4 L1302.0 288.0M1188.8 313.7 L1245.4 297.6L1302.0 281.6M1188.8 306.9 L1245.4 291.1M1188.8 300.3 L1245.4 284.8M1188.8 293.9 L1245.4 278.7M1132.1 302.8 L1188.8 287.8M1132.1 296.6 L1188.8 281.8M1132.1 290.6 L1188.8 276.0M1075.5 293.2 L1132.1 279.1M1075.5 287.5 L1132.1 273.6M1075.5 282.0 L1132.1 268.3M1018.9 290.1 L1075.5 276.6L1132.1 263.1M1018.9 284.7 L1075.5 271.4M1018.9 279.4 L1075.5 266.3M962.3 287.3 L1018.9 274.3L1075.5 261.3M962.3 282.1 L1018.9 269.3L1075.5 256.5M905.7 289.7 L962.3 277.1L1018.9 264.5M849.1 292.0 L905.7 279.7L962.3 267.4L1018.9 255.1M792.5 299.2 L849.1 287.1L905.7 274.9L962.3 262.8M735.9 306.2 L792.5 294.2L849.1 282.2L905.7 270.2L962.3 258.3M704.4 307.7 L763.1 295.5L821.9 283.2L880.6 270.9L939.3 258.7M645.7 314.9 L704.4 302.8L763.1 290.6L821.9 278.5L880.6 266.4M587.0 321.8 L645.7 309.9L704.4 297.9L763.1 285.9L821.9 274.0M587.0 316.8 L645.7 305.0L704.4 293.2L763.1 281.3L821.9 269.5M528.3 323.6 L587.0 311.9L645.7 300.2L704.4 288.5L763.1 276.9M469.6 330.2 L528.3 318.7L587.0 307.1L645.7 295.6L704.4 284.0M410.9 331.7 L469.6 320.4L528.3 309.1L587.0 297.9L645.7 286.6M352.2 338.0 L410.9 326.8L469.6 315.7L528.3 304.5L587.0 293.4M293.5 344.1 L352.2 333.1L410.9 322.1L469.6 311.1L528.3 300.0L587.0 289.0M234.8 350.1 L293.5 339.2L352.2 328.3L410.9 317.4L469.6 306.5L528.3 295.6M176.1 356.0 L234.8 345.2L293.5 334.4L352.2 323.7L410.9 312.9L469.6 302.1M117.4 361.7 L176.1 351.1L234.8 340.4L293.5 329.8L352.2 319.1L410.9 308.5L469.6 297.8M117.4 356.8 L176.1 346.3L234.8 335.7L293.5 325.2L352.2 314.6L410.9 304.1M58.7 362.4 L117.4 352.0L176.1 341.6L234.8 331.1L293.5 320.7L352.2 310.3M0.0 367.9 L58.7 357.6L117.4 347.3L176.1 337.0L234.8 326.6L293.5 316.3M0.0 358.3 L58.7 348.2L117.4 338.1L176.1 328.0L234.8 317.9M0.0 353.7 L58.7 343.7L117.4 333.7L176.1 323.7M0.0 349.2 L58.7 339.3L117.4 329.4M0.0 344.7 L58.7 334.9L117.4 325.1M0.0 340.3 L58.7 330.6M9.1 375.9 L-0.0 319.1M65.2 369.3 L48.9 311.9M90.2 387.8 L72.1 332.2M140.4 367.6 L117.0 315.2M158.0 364.9 L132.4 312.2M176.9 364.9 L149.0 312.2M203.8 347.3 L173.5 297.6M221.9 347.3 L189.5 297.6M306.4 362.2 L270.0 317.5M325.1 362.2 L286.9 317.5M330.4 347.3 L292.3 304.7M348.5 347.3 L308.6 304.7M366.6 347.3 L325.0 304.7M370.9 333.8 L329.5 293.1M388.4 333.8 L345.4 293.1M475.0 347.3 L429.5 310.0M478.1 335.4 L432.9 299.6M495.6 335.4 L449.0 299.6M513.2 335.4 L465.1 299.6M515.5 324.4 L467.9 290.0M532.7 324.4 L483.6 290.0M534.8 314.2 L486.3 281.0M551.5 314.2 L501.6 281.0M624.9 328.5 L574.3 297.4M628.9 320.5 L578.6 290.3M632.9 312.9 L582.8 283.6M653.6 315.2 L601.8 285.6M657.5 308.1 L606.0 279.3M661.4 301.3 L610.1 273.2M716.5 322.0 L665.4 294.7M743.4 318.4 L690.8 291.5M750.7 305.4 L698.5 279.8M775.1 309.3 L721.1 283.3M778.6 303.2 L724.9 277.8M782.2 297.3 L728.7 272.5M785.7 291.6 L732.4 267.4M842.3 309.9 L789.3 286.2M845.6 304.1 L792.8 280.9M876.2 303.3 L821.7 280.2M882.6 292.6 L828.6 270.5M885.8 287.6 L832.0 265.9M889.0 282.6 L835.5 261.4M917.7 287.8 L862.1 266.1M920.8 283.0 L865.4 261.8M923.9 278.4 L868.8 257.5M981.8 294.3 L926.9 273.9M984.6 289.5 L930.0 269.5M987.4 284.9 L933.1 265.2M1022.4 286.3 L966.2 266.5M1025.1 281.9 L969.1 262.5M1027.8 277.6 L972.1 258.5M1085.9 292.0 L1030.5 273.4L975.0 254.7M1088.3 287.6 L1033.1 269.3L978.0 250.9M1145.7 301.3 L1090.7 283.3L1035.8 265.3M1147.8 296.8 L1093.2 279.1L1038.5 261.4M1186.2 304.0 L1129.2 285.8L1072.3 267.6M1244.9 317.4 L1188.2 299.5L1131.5 281.6L1074.8 263.7M1248.2 308.1 L1192.1 290.8L1136.0 273.6M1305.8 320.6 L1249.9 303.6L1194.1 286.7L1138.2 269.7M1307.2 316.0 L1251.6 299.3L1196.0 282.6M1363.8 327.8 L1308.6 311.4L1253.3 295.0L1198.0 278.6M1420.0 339.3 L1365.0 323.1L1310.0 307.0L1255.0 290.9L1199.9 274.8M1412.6 332.0 L1355.1 315.4L1297.7 298.7L1240.2 282.1M1470.7 343.7 L1413.5 327.3L1356.3 311.0L1299.2 294.6M1471.2 338.8 L1414.4 322.7L1357.5 306.6L1300.6 290.5M1528.4 349.9 L1471.8 334.1L1415.3 318.2L1358.7 302.4M1585.0 355.5 L1529.0 340.2L1473.0 324.9L1417.0 309.5L1361.0 294.2M1585.0 350.6 L1529.3 335.5L1473.6 320.4L1417.9 305.3M1585.0 345.7 L1529.6 330.9L1474.2 316.1L1418.8 301.2M1585.0 341.0 L1529.9 326.4L1474.8 311.8M1585.0 336.4 L1527.3 321.2M1585.0 331.8 L1527.6 316.9" stroke="#fff" stroke-opacity="0.040" fill="none" stroke-width="1.35"/>
<path d="M1530.3 388.5 L1585.0 364.3M1530.0 376.2 L1585.0 352.6M1474.5 387.8 L1529.7 364.6L1585.0 341.4M1474.0 376.2 L1529.5 353.5M1477.4 363.7 L1531.2 342.2M1421.0 375.0 L1475.7 353.7M1421.0 364.3 L1475.7 343.5M1421.0 354.2 L1475.7 333.8M1366.4 354.6 L1421.0 335.1M1358.6 347.9 L1415.2 328.2M1302.0 358.3 L1358.6 338.9M1302.0 349.2 L1358.6 330.3M1302.0 340.5 L1358.6 321.9M1245.4 350.4 L1302.0 332.2M1245.4 342.0 L1302.0 324.1M1245.4 333.9 L1302.0 316.4M1188.8 343.4 L1245.4 326.2L1302.0 308.9M1188.8 328.0 L1245.4 311.4M1188.8 320.7 L1245.4 304.4M1132.1 329.8 L1188.8 313.7M1132.1 322.7 L1188.8 306.9M1132.1 315.9 L1188.8 300.3M1075.5 324.5 L1132.1 309.2L1188.8 293.9M1075.5 317.9 L1132.1 302.8M1075.5 311.4 L1132.1 296.6M1075.5 305.2 L1132.1 290.6M1018.9 307.4 L1075.5 293.2M1018.9 301.5 L1075.5 287.5M962.3 309.4 L1018.9 295.7L1075.5 282.0M905.7 317.2 L962.3 303.7L1018.9 290.1M905.7 311.4 L962.3 298.1L1018.9 284.7M849.1 318.9 L905.7 305.8L962.3 292.6L1018.9 279.4M792.5 326.2 L849.1 313.2L905.7 300.3L962.3 287.3M735.9 333.3 L792.5 320.5L849.1 307.7L905.7 294.9L962.3 282.1M679.3 340.2 L735.9 327.6L792.5 315.0L849.1 302.3L905.7 289.7M622.7 341.2 L679.3 328.9L735.9 316.6L792.5 304.3L849.1 292.0M566.1 347.7 L622.7 335.6L679.3 323.5L735.9 311.3L792.5 299.2M509.5 354.1 L566.1 342.1L622.7 330.1L679.3 318.2L735.9 306.2M469.6 356.8 L528.3 344.5L587.0 332.3L645.7 320.0L704.4 307.7M410.9 363.3 L469.6 351.2L528.3 339.1L587.0 327.0L645.7 314.9M352.2 369.7 L410.9 357.7L469.6 345.8L528.3 333.8L587.0 321.8M293.5 375.9 L352.2 364.1L410.9 352.3L469.6 340.5L528.3 328.6L587.0 316.8M234.8 382.0 L293.5 370.3L352.2 358.6L410.9 346.9L469.6 335.3L528.3 323.6M176.1 387.9 L234.8 376.4L293.5 364.8L352.2 353.3L410.9 341.7L469.6 330.2M58.7 399.3 L117.4 388.1L176.1 376.8L234.8 365.5L293.5 354.2L352.2 343.0L410.9 331.7M0.0 404.8 L58.7 393.7L117.4 382.6L176.1 371.4L234.8 360.3L293.5 349.1L352.2 338.0M0.0 399.2 L58.7 388.2L117.4 377.2L176.1 366.2L234.8 355.1L293.5 344.1M0.0 393.7 L58.7 382.8L117.4 371.9L176.1 361.0L234.8 350.1M0.0 388.3 L58.7 377.5L117.4 366.8L176.1 356.0M0.0 383.1 L58.7 372.4L117.4 361.7M0.0 377.9 L58.7 367.4L117.4 356.8M0.0 372.9 L58.7 362.4M33.0 398.6 L22.0 344.1M53.0 397.7 L39.8 343.1M133.3 396.7 L111.1 341.9M214.0 397.1 L185.7 347.3M234.1 397.1 L203.8 347.3M254.2 397.1 L221.9 347.3M261.7 378.7 L229.1 331.6M281.1 378.7 L246.6 331.6M368.6 390.0 L330.4 347.3M412.3 374.5 L370.9 333.8M431.4 374.5 L388.4 333.8M435.1 360.3 L392.3 321.4M453.7 360.3 L409.3 321.4M523.2 371.2 L478.1 335.4M563.2 358.8 L515.5 324.4M581.7 358.8 L532.7 324.4M583.4 347.3 L534.8 314.2M601.5 347.3 L551.5 314.2M603.0 336.7 L553.6 304.7M679.2 350.7 L628.9 320.5M683.0 342.3 L632.9 312.9M705.3 344.8 L653.6 315.2M709.0 336.9 L657.5 308.1M712.8 329.3 L661.4 301.3M739.8 325.3 L686.9 297.7M802.8 331.1 L750.7 305.4M829.1 335.3 L775.1 309.3M832.4 328.6 L778.6 303.2M835.7 322.1 L782.2 297.3M839.0 315.9 L785.7 291.6M898.4 327.3 L845.6 304.1M873.0 308.9 L818.3 285.3M936.7 314.8 L882.6 292.6M939.6 309.2 L885.8 287.6M942.6 303.9 L889.0 282.6M973.3 309.6 L917.7 287.8M976.1 304.3 L920.8 283.0M979.0 299.2 L923.9 278.4M1039.2 309.6 L984.6 289.5M1041.8 304.5 L987.4 284.9M1134.9 325.9 L1078.7 306.1L1022.4 286.3M1137.1 320.7 L1081.1 301.3L1025.1 281.9M1194.9 334.7 L1139.2 315.6L1083.5 296.6L1027.8 277.6M1196.8 329.4 L1141.4 310.7L1085.9 292.0M1253.9 342.7 L1198.7 324.3L1143.5 306.0L1088.3 287.6M1255.5 337.4 L1200.6 319.4L1145.7 301.3M1311.8 349.9 L1257.1 332.2L1202.5 314.5L1147.8 296.8M1357.1 358.6 L1300.1 340.4L1243.2 322.2L1186.2 304.0M1358.2 353.2 L1301.5 335.3L1244.9 317.4M1416.6 359.9 L1360.5 342.7L1304.4 325.4L1248.2 308.1M1473.3 371.6 L1417.5 354.6L1361.6 337.6L1305.8 320.6M1529.4 382.7 L1473.9 366.0L1418.3 349.4L1362.7 332.7L1307.2 316.0M1529.7 377.1 L1474.4 360.7L1419.1 344.3L1363.8 327.8M1585.0 387.7 L1530.0 371.5L1475.0 355.4L1420.0 339.3M1585.0 382.0 L1527.5 365.3L1470.1 348.7L1412.6 332.0M1585.0 376.4 L1527.8 360.1L1470.7 343.7M1585.0 371.0 L1528.1 354.9L1471.2 338.8M1585.0 365.7 L1528.4 349.9" stroke="#fff" stroke-opacity="0.050" fill="none" stroke-width="1.35"/>
<path d="M1530.6 401.4 L1585.0 376.7M1475.6 412.6 L1530.3 388.5M1475.0 399.9 L1530.0 376.2M1418.5 398.9 L1474.0 376.2M1423.5 385.2 L1477.4 363.7M1366.4 396.3 L1421.0 375.0M1366.4 385.2 L1421.0 364.3M1366.4 374.5 L1421.0 354.2M1311.7 374.1 L1366.4 354.6M1302.0 367.7 L1358.6 347.9M1245.4 377.7 L1302.0 358.3M1245.4 368.2 L1302.0 349.2M1245.4 359.1 L1302.0 340.5M1188.8 368.7 L1245.4 350.4M1188.7 359.9 L1245.4 342.0M1188.8 351.5 L1245.4 333.9M1132.1 344.7 L1188.8 328.0M1132.1 337.1 L1188.8 320.7M1075.5 345.8 L1132.1 329.8M1075.5 338.5 L1132.1 322.7M1075.5 331.4 L1132.1 315.9M1018.9 339.8 L1075.5 324.5M1018.9 332.9 L1075.5 317.9M1018.9 326.2 L1075.5 311.4M962.3 334.3 L1018.9 319.8L1075.5 305.2M905.7 335.7 L962.3 321.5L1018.9 307.4M849.1 343.3 L905.7 329.3L962.3 315.4L1018.9 301.5M792.5 350.6 L849.1 336.9L905.7 323.2L962.3 309.4M735.9 357.8 L792.5 344.3L849.1 330.7L905.7 317.2M679.3 364.8 L735.9 351.4L792.5 338.1L849.1 324.7L905.7 311.4M622.7 371.5 L679.3 358.4L735.9 345.2L792.5 332.1L849.1 318.9M566.1 378.1 L622.7 365.1L679.3 352.2L735.9 339.2L792.5 326.2M566.1 371.7 L622.7 358.9L679.3 346.1L735.9 333.3M509.5 378.1 L566.1 365.5L622.7 352.8L679.3 340.2M396.2 390.4 L452.9 378.1L509.5 365.8L566.1 353.5L622.7 341.2M339.6 396.3 L396.2 384.2L452.9 372.0L509.5 359.9L566.1 347.7M283.0 402.0 L339.6 390.1L396.2 378.1L452.9 366.1L509.5 354.1M176.1 418.2 L234.8 405.9L293.5 393.6L352.2 381.4L410.9 369.1L469.6 356.8M117.4 423.9 L176.1 411.8L234.8 399.7L293.5 387.6L352.2 375.5L410.9 363.3M58.7 429.6 L117.4 417.6L176.1 405.6L234.8 393.7L293.5 381.7L352.2 369.7M0.0 435.0 L58.7 423.2L117.4 411.4L176.1 399.6L234.8 387.8L293.5 375.9M0.0 428.7 L58.7 417.0L117.4 405.4L176.1 393.7L234.8 382.0M0.0 422.5 L58.7 411.0L117.4 399.5L176.1 387.9M0.0 410.6 L58.7 399.3M18.3 432.7 L9.1 375.9M44.0 453.1 L33.0 398.6M66.3 452.3 L53.0 397.7M81.4 426.8 L65.2 369.3M108.2 443.5 L90.2 387.8M163.8 420.0 L140.4 367.6M183.7 417.5 L158.0 364.9M204.7 417.5 L176.9 364.9M294.3 425.8 L261.7 378.7M315.5 425.8 L281.1 378.7M342.8 407.0 L306.4 362.2M363.3 407.0 L325.1 362.2M388.4 390.0 L348.5 347.3M408.2 390.0 L366.6 347.3M477.8 399.2 L435.1 360.3M498.0 399.2 L453.7 360.3M520.6 384.6 L475.0 347.3M542.2 371.2 L495.6 335.4M561.3 371.2 L513.2 335.4M632.0 380.5 L583.4 347.3M651.4 380.5 L601.5 347.3M652.5 368.6 L603.0 336.7M675.4 359.5 L624.9 328.5M733.1 371.6 L683.0 342.3M760.6 365.7 L709.0 336.9M764.1 357.3 L712.8 329.3M767.6 349.3 L716.5 322.0M792.6 352.9 L739.8 325.3M796.0 345.3 L743.4 318.4M855.0 356.7 L802.8 331.1M886.1 354.0 L832.4 328.6M889.2 347.0 L835.7 322.1M892.3 340.2 L839.0 315.9M895.4 333.6 L842.3 309.9M927.8 332.6 L873.0 308.9M930.8 326.4 L876.2 303.3M990.7 336.9 L936.7 314.8M993.4 330.9 L939.6 309.2M996.1 325.1 L942.6 303.9M1028.9 331.3 L973.3 309.6M1031.5 325.6 L976.1 304.3M1089.2 340.9 L1034.1 320.1L979.0 299.2M1091.5 335.2 L1036.6 314.7L981.8 294.3M1148.4 349.7 L1093.8 329.6L1039.2 309.6M1204.7 363.5 L1150.4 343.9L1096.1 324.2L1041.8 304.5M1247.5 365.4 L1191.2 345.7L1134.9 325.9M1305.1 378.9 L1249.1 359.5L1193.1 340.1L1137.1 320.7M1306.4 372.8 L1250.7 353.7L1194.9 334.7M1363.2 385.5 L1307.7 366.8L1252.3 348.1L1196.8 329.4M1419.4 397.7 L1364.3 379.4L1309.1 361.0L1253.9 342.7M1420.2 391.4 L1365.3 373.4L1310.4 355.4L1255.5 337.4M1475.7 403.0 L1421.1 385.3L1366.4 367.6L1311.8 349.9M1528.0 413.3 L1471.1 395.1L1414.1 376.8L1357.1 358.6M1528.3 406.8 L1471.6 389.0L1414.9 371.1L1358.2 353.2M1585.0 411.8 L1528.9 394.5L1472.7 377.2L1416.6 359.9M1585.0 405.5 L1529.2 388.5L1473.3 371.6M1585.0 399.4 L1529.4 382.7M1585.0 393.5 L1529.7 377.1" stroke="#fff" stroke-opacity="0.060" fill="none" stroke-width="1.35"/>
<path d="M1531.7 444.5 L1585.0 418.2M1531.3 429.3 L1585.0 403.6M1476.2 426.0 L1530.6 401.4M1420.9 436.8 L1475.6 412.6M1420.0 423.6 L1475.0 399.9M1419.2 411.0 L1474.5 387.8M1362.9 421.6 L1418.5 398.9M1369.7 406.7 L1423.5 385.2M1311.7 417.6 L1366.4 396.3M1311.7 406.0 L1366.4 385.2M1311.7 394.9 L1366.4 374.5M1257.1 393.6 L1311.7 374.1M1245.4 387.5 L1302.0 367.7M1188.8 387.2 L1245.4 368.2M1188.8 377.7 L1245.4 359.1M1132.1 377.8 L1188.7 359.9M1132.1 369.1 L1188.8 351.5M1132.1 360.6 L1188.8 343.4M1075.5 361.3 L1132.1 344.7M1075.5 353.4 L1132.1 337.1M1018.9 361.9 L1075.5 345.8M1018.9 354.3 L1075.5 338.5M1018.9 346.9 L1075.5 331.4M962.3 355.1 L1018.9 339.8M905.7 363.0 L962.3 348.0L1018.9 332.9M849.1 370.7 L905.7 355.8L962.3 341.0L1018.9 326.2M849.1 363.5 L905.7 348.9L962.3 334.3M735.9 378.1 L792.5 363.9L849.1 349.8L905.7 335.7M679.3 385.1 L735.9 371.1L792.5 357.2L849.1 343.3M622.7 391.8 L679.3 378.1L735.9 364.4L792.5 350.6M566.1 398.4 L622.7 384.9L679.3 371.3L735.9 357.8M509.5 404.8 L566.1 391.4L622.7 378.1L679.3 364.8M452.9 411.0 L509.5 397.8L566.1 384.7L622.7 371.5M339.6 430.0 L396.2 417.0L452.9 404.0L509.5 391.1L566.1 378.1M283.0 435.7 L339.6 422.9L396.2 410.1L452.9 397.3L509.5 384.5L566.1 371.7M226.4 441.2 L283.0 428.6L339.6 416.0L396.2 403.3L452.9 390.7L509.5 378.1M113.2 451.9 L169.8 439.6L226.4 427.3L283.0 415.0L339.6 402.7L396.2 390.4M56.6 457.0 L113.2 444.8L169.8 432.7L226.4 420.6L283.0 408.4L339.6 396.3M0.0 461.9 L56.6 450.0L113.2 438.0L169.8 426.0L226.4 414.0L283.0 402.0M0.0 455.0 L58.7 442.7L117.4 430.4L176.1 418.2M0.0 448.2 L58.7 436.0L117.4 423.9M0.0 441.5 L58.7 429.6M155.5 451.4 L133.3 396.7M242.3 446.8 L214.0 397.1M264.4 446.8 L234.1 397.1M286.6 446.8 L254.2 397.1M406.7 432.6 L368.6 390.0M428.3 432.6 L388.4 390.0M449.8 432.6 L408.2 390.0M453.6 415.1 L412.3 374.5M474.5 415.1 L431.4 374.5M566.1 421.9 L520.6 384.6M568.4 407.0 L523.2 371.2M588.9 407.0 L542.2 371.2M609.3 407.0 L561.3 371.2M610.8 393.2 L563.2 358.8M630.7 393.2 L581.7 358.8M701.9 400.6 L652.5 368.6M725.9 390.6 L675.4 359.5M729.5 380.8 L679.2 350.7M757.0 374.4 L705.3 344.8M815.4 385.3 L764.1 357.3M818.7 376.6 L767.6 349.3M845.4 380.6 L792.6 352.9M848.6 372.3 L796.0 345.3M883.1 361.4 L829.1 335.3M945.6 364.4 L892.3 340.2M948.4 357.3 L895.4 333.6M951.3 350.5 L898.4 327.3M982.6 356.2 L927.8 332.6M985.3 349.5 L930.8 326.4M1044.7 359.1 L990.7 336.9M1047.2 352.6 L993.4 330.9M1103.2 367.6 L1049.6 346.4L996.1 325.1M1140.1 374.7 L1084.5 353.0L1028.9 331.3M1142.2 368.1 L1086.8 346.9L1031.5 325.6M1199.3 382.6 L1144.2 361.8L1089.2 340.9M1256.0 396.5 L1201.1 376.1L1146.3 355.6L1091.5 335.2M1257.5 389.7 L1202.9 369.7L1148.4 349.7M1313.4 402.8 L1259.1 383.2L1204.7 363.5M1416.2 424.8 L1360.0 405.0L1303.7 385.2L1247.5 365.4M1417.0 417.7 L1361.0 398.3L1305.1 378.9M1473.6 429.9 L1417.8 410.9L1362.1 391.8L1306.4 372.8M1529.5 441.6 L1474.1 422.9L1418.6 404.2L1363.2 385.5M1585.0 452.8 L1529.8 434.5L1474.6 416.1L1419.4 397.7M1585.0 445.5 L1530.1 427.5L1475.2 409.5L1420.2 391.4M1585.0 438.4 L1530.4 420.7L1475.7 403.0M1585.0 431.5 L1528.0 413.3M1585.0 424.7 L1528.3 406.8" stroke="#fff" stroke-opacity="0.070" fill="none" stroke-width="1.35"/>
<path d="M1570.6 944.0 L1585.0 929.8M1508.9 944.0 L1547.0 908.5L1585.0 873.0M1447.2 944.0 L1481.6 913.5L1516.1 883.1L1550.5 852.6L1585.0 822.2M1385.4 944.0 L1425.3 910.5L1465.3 877.0L1505.2 843.5L1545.1 809.9L1585.0 776.4M1323.7 944.0 L1367.2 909.2L1410.8 874.3L1454.3 839.5L1497.9 804.7L1541.4 769.9L1585.0 735.0M1261.9 944.0 L1308.0 908.8L1354.2 873.5L1400.4 838.3L1446.5 803.1L1492.7 767.8L1538.8 732.6L1585.0 697.4M1200.1 944.0 L1248.2 908.9L1296.3 873.8L1344.4 838.6L1392.6 803.5L1440.7 768.4L1488.8 733.3L1536.9 698.1L1585.0 663.0M1138.3 944.0 L1183.0 912.7L1227.6 881.5L1272.3 850.2L1317.0 819.0L1361.7 787.7L1406.3 756.5L1451.0 725.2L1495.7 694.0L1540.3 662.7L1585.0 631.5M1076.5 944.0 L1122.7 913.0L1169.0 881.9L1215.2 850.9L1261.4 819.8L1307.6 788.8L1353.9 757.7L1400.1 726.7L1446.3 695.6L1492.5 664.6L1538.8 633.5L1585.0 602.5M952.9 944.0 L1001.5 913.8L1050.1 883.5L1098.7 853.3L1147.4 823.1L1196.0 792.8L1244.6 762.6L1293.2 732.4L1341.9 702.1L1390.5 671.9L1439.1 641.6L1487.7 611.4L1536.4 581.2L1585.0 550.9M891.0 944.0 L940.6 914.3L990.2 884.6L1039.7 854.8L1089.3 825.1L1138.9 795.4L1188.4 765.7L1238.0 736.0L1287.6 706.2L1337.1 676.5L1386.7 646.8L1436.3 617.1L1485.9 587.4L1535.4 557.6L1585.0 527.9M829.2 944.0 L879.6 914.8L929.9 885.7L980.3 856.5L1030.7 827.3L1081.1 798.2L1131.5 769.0L1181.9 739.8L1232.3 710.7L1282.7 681.5L1333.1 652.3L1383.4 623.2L1433.8 594.0L1484.2 564.8L1534.6 535.7L1585.0 506.5M767.3 944.0 L818.4 915.4L869.5 886.8L920.6 858.2L971.7 829.6L1022.8 801.0L1073.9 772.4L1125.0 743.8L1176.2 715.2L1227.3 686.7L1278.4 658.1L1329.5 629.5L1380.6 600.9L1431.7 572.3L1482.8 543.7L1533.9 515.1L1585.0 486.5M705.4 944.0 L757.2 916.0L808.9 888.0L860.6 860.0L912.4 831.9L964.1 803.9L1015.9 775.9L1067.6 747.9L1119.3 719.9L1171.1 691.9L1222.8 663.9L1274.6 635.9L1326.3 607.8L1378.0 579.8L1429.8 551.8L1481.5 523.8L1533.3 495.8L1585.0 467.8M643.5 944.0 L695.8 916.6L748.2 889.1L800.5 861.7L852.8 834.3L905.1 806.8L957.4 779.4L1009.7 752.0L1062.0 724.5L1114.3 697.1L1166.6 669.7L1218.9 642.3L1271.2 614.8L1323.5 587.4L1375.8 560.0L1428.1 532.5L1480.4 505.1L1532.7 477.7L1585.0 450.2M581.7 944.0 L634.5 917.1L687.3 890.3L740.1 863.4L792.9 836.6L845.7 809.7L898.5 782.9L951.3 756.0L1004.1 729.2L1056.9 702.3L1109.7 675.4L1162.5 648.6L1215.3 621.7L1268.2 594.9L1321.0 568.0L1373.8 541.2L1426.6 514.3L1479.4 487.5L1532.2 460.6L1585.0 433.7M519.7 944.0 L573.0 917.7L626.3 891.4L679.5 865.1L732.8 838.8L786.1 812.6L839.3 786.3L892.6 760.0L945.8 733.7L999.1 707.4L1052.4 681.1L1105.6 654.8L1158.9 628.5L1212.2 602.3L1265.4 576.0L1318.7 549.7L1371.9 523.4L1425.2 497.1L1478.5 470.8L1531.7 444.5M457.8 944.0 L511.5 918.3L565.2 892.5L618.9 866.8L672.5 841.1L726.2 815.3L779.9 789.6L833.6 763.9L887.2 738.1L940.9 712.4L994.6 686.7L1048.3 660.9L1101.9 635.2L1155.6 609.5L1209.3 583.7L1263.0 558.0L1316.6 532.3L1370.3 506.5L1424.0 480.8L1477.7 455.1L1531.3 429.3M334.0 944.0 L388.4 919.3L442.8 894.7L497.1 870.0L551.5 845.3L605.9 820.7L660.3 796.0L714.7 771.3L769.1 746.7L823.5 722.0L877.9 697.4L932.3 672.7L986.7 648.0L1041.1 623.4L1095.5 598.7L1149.9 574.0L1204.3 549.4L1258.6 524.7L1313.0 500.0L1367.4 475.4L1421.8 450.7L1476.2 426.0M272.0 944.0 L326.7 919.8L381.4 895.7L436.1 871.5L490.8 847.4L545.6 823.2L600.3 799.1L655.0 774.9L709.7 750.8L764.4 726.6L819.1 702.5L873.8 678.3L928.5 654.2L983.2 630.0L1037.9 605.9L1092.6 581.7L1147.3 557.6L1202.0 533.4L1256.8 509.2L1311.5 485.1L1366.2 460.9L1420.9 436.8M210.1 944.0 L265.1 920.3L320.1 896.7L375.0 873.0L430.0 849.4L485.0 825.7L540.0 802.1L595.0 778.4L650.0 754.7L705.0 731.1L760.0 707.4L815.0 683.8L870.0 660.1L925.0 636.5L980.0 612.8L1035.0 589.2L1090.0 565.5L1145.0 541.8L1200.0 518.2L1255.0 494.5L1310.0 470.9L1365.0 447.2L1420.0 423.6M148.1 944.0 L203.3 920.8L258.6 897.6L313.9 874.5L369.1 851.3L424.4 828.1L479.7 804.9L534.9 781.8L590.2 758.6L645.5 735.4L700.7 712.2L756.0 689.1L811.3 665.9L866.5 642.7L921.8 619.5L977.1 596.4L1032.3 573.2L1087.6 550.0L1142.9 526.8L1198.1 503.7L1253.4 480.5L1308.7 457.3L1363.9 434.1L1419.2 411.0M86.1 944.0 L141.6 921.3L197.1 898.6L252.6 875.9L308.2 853.2L363.7 830.4L419.2 807.7L474.7 785.0L530.2 762.3L585.7 739.6L641.2 716.9L696.8 694.2L752.3 671.5L807.8 648.8L863.3 626.0L918.8 603.3L974.3 580.6L1029.9 557.9L1085.4 535.2L1140.9 512.5L1196.4 489.8L1251.9 467.1L1307.4 444.4L1362.9 421.6M24.1 944.0 L77.9 922.5L131.8 901.0L185.6 879.5L239.4 858.0L293.2 836.5L347.1 815.0L400.9 793.5L454.7 772.1L508.5 750.6L562.3 729.1L616.2 707.6L670.0 686.1L723.8 664.6L777.6 643.1L831.5 621.6L885.3 600.1L939.1 578.6L992.9 557.1L1046.8 535.6L1100.6 514.1L1154.4 492.6L1208.2 471.1L1262.1 449.7L1315.9 428.2L1369.7 406.7M0.0 929.2 L54.7 907.9L109.3 886.6L164.0 865.3L218.6 844.0L273.3 822.6L327.9 801.3L382.6 780.0L437.2 758.7L491.9 737.4L546.6 716.1L601.2 694.7L655.9 673.4L710.5 652.1L765.2 630.8L819.8 609.5L874.5 588.2L929.1 566.8L983.8 545.5L1038.4 524.2L1093.1 502.9L1147.8 481.6L1202.4 460.3L1257.1 438.9L1311.7 417.6M-0.0 905.9 L54.7 885.1L109.3 864.3L164.0 843.4L218.6 822.6L273.3 801.8L327.9 780.9L382.6 760.1L437.2 739.3L491.9 718.5L546.6 697.6L601.2 676.8L655.9 656.0L710.5 635.1L765.2 614.3L819.8 593.5L874.5 572.6L929.1 551.8L983.8 531.0L1038.4 510.1L1093.1 489.3L1147.8 468.5L1202.4 447.7L1257.1 426.8L1311.7 406.0M0.0 883.7 L54.7 863.3L109.3 842.9L164.0 822.6L218.6 802.2L273.3 781.8L327.9 761.5L382.6 741.1L437.2 720.7L491.9 700.4L546.6 680.0L601.2 659.6L655.9 639.3L710.5 618.9L765.2 598.5L819.8 578.2L874.5 557.8L929.1 537.4L983.8 517.1L1038.4 496.7L1093.1 476.3L1147.8 456.0L1202.4 435.6L1257.1 415.2L1311.7 394.9M0.0 842.0 L54.7 822.5L109.3 803.0L164.0 783.5L218.6 764.0L273.3 744.5L327.9 725.0L382.6 705.5L437.2 686.0L491.9 666.5L546.6 647.0L601.2 627.5L655.9 608.0L710.5 588.5L765.2 569.0L819.8 549.5L874.5 530.0L929.1 510.5L983.8 491.0L1038.4 471.5L1093.1 452.0L1147.8 432.6L1202.4 413.1L1257.1 393.6M0.0 822.4 L56.6 802.7L113.2 782.9L169.8 763.1L226.4 743.4L283.0 723.6L339.6 703.8L396.2 684.0L452.9 664.3L509.5 644.5L566.1 624.7L622.7 605.0L679.3 585.2L735.9 565.4L792.5 545.6L849.1 525.9L905.7 506.1L962.3 486.3L1018.9 466.6L1075.5 446.8L1132.1 427.0L1188.8 407.3L1245.4 387.5M0.0 803.7 L56.6 784.3L113.2 765.0L169.8 745.6L226.4 726.2L283.0 706.9L339.6 687.5L396.2 668.1L452.9 648.8L509.5 629.4L566.1 610.0L622.7 590.7L679.3 571.3L735.9 551.9L792.5 532.6L849.1 513.2L905.7 493.8L962.3 474.5L1018.9 455.1L1075.5 435.7L1132.1 416.4L1188.8 397.0L1245.4 377.7M0.0 785.7 L56.6 766.7L113.2 747.7L169.8 728.8L226.4 709.8L283.0 690.8L339.6 671.8L396.3 652.9L452.9 633.9L509.5 614.9L566.1 595.9L622.7 577.0L679.3 558.0L735.9 539.0L792.5 520.0L849.1 501.0L905.7 482.1L962.3 463.1L1018.9 444.1L1075.5 425.1L1132.1 406.2L1188.8 387.2M0.0 768.4 L56.6 749.8L113.2 731.2L169.8 712.6L226.4 694.0L283.0 675.4L339.6 656.8L396.2 638.2L452.9 619.6L509.5 601.0L566.1 582.4L622.7 563.8L679.3 545.2L735.9 526.6L792.5 508.0L849.1 489.4L905.7 470.8L962.3 452.2L1018.9 433.6L1075.5 414.9L1132.1 396.3L1188.8 377.7M0.0 751.8 L56.6 733.5L113.2 715.3L169.8 697.0L226.4 678.8L283.0 660.6L339.6 642.3L396.3 624.1L452.9 605.8L509.5 587.6L566.1 569.3L622.7 551.1L679.3 532.9L735.9 514.6L792.5 496.4L849.1 478.1L905.7 459.9L962.3 441.6L1018.9 423.4L1075.5 405.1L1132.1 386.9L1188.8 368.7M0.0 735.8 L56.6 717.9L113.2 700.0L169.8 682.1L226.4 664.2L283.0 646.3L339.6 628.4L396.2 610.5L452.9 592.6L509.5 574.7L566.1 556.8L622.7 538.9L679.3 521.0L735.9 503.1L792.5 485.2L849.1 467.3L905.7 449.4L962.3 431.5L1018.9 413.6L1075.5 395.7L1132.1 377.8M0.0 720.4 L56.6 702.8L113.2 685.2L169.8 667.7L226.4 650.1L283.0 632.5L339.6 615.0L396.3 597.4L452.9 579.9L509.5 562.3L566.1 544.7L622.7 527.2L679.3 509.6L735.9 492.0L792.5 474.5L849.1 456.9L905.7 439.3L962.3 421.8L1018.9 404.2L1075.5 386.6L1132.1 369.1M0.0 705.5 L56.6 688.3L113.2 671.0L169.8 653.8L226.4 636.6L283.0 619.3L339.6 602.1L396.2 584.8L452.9 567.6L509.5 550.3L566.1 533.1L622.7 515.8L679.3 498.6L735.9 481.4L792.5 464.1L849.1 446.9L905.7 429.6L962.3 412.4L1018.9 395.1L1075.5 377.9L1132.1 360.6M0.0 677.4 L56.6 660.8L113.2 644.1L169.8 627.5L226.4 610.9L283.0 594.2L339.6 577.6L396.2 560.9L452.9 544.3L509.5 527.7L566.1 511.0L622.7 494.4L679.3 477.8L735.9 461.1L792.5 444.5L849.1 427.8L905.7 411.2L962.3 394.6L1018.9 377.9L1075.5 361.3M0.0 664.1 L56.6 647.7L113.2 631.4L169.8 615.0L226.4 598.7L283.0 582.3L339.6 566.0L396.2 549.6L452.9 533.3L509.5 516.9L566.1 500.6L622.7 484.2L679.3 467.9L735.9 451.5L792.5 435.2L849.1 418.8L905.7 402.5L962.3 386.1L1018.9 369.8L1075.5 353.4M0.0 651.2 L56.6 635.1L113.2 619.0L169.8 603.0L226.4 586.9L283.0 570.8L339.6 554.8L396.2 538.7L452.9 522.6L509.5 506.5L566.1 490.5L622.7 474.4L679.3 458.3L735.9 442.3L792.5 426.2L849.1 410.1L905.7 394.1L962.3 378.0L1018.9 361.9M0.0 638.7 L56.6 622.9L113.2 607.1L169.8 591.3L226.4 575.5L283.0 559.7L339.6 543.9L396.2 528.1L452.9 512.3L509.5 496.5L566.1 480.7L622.7 464.9L679.3 449.1L735.9 433.3L792.5 417.5L849.1 401.7L905.7 385.9L962.3 370.1L1018.9 354.3M0.0 626.7 L56.6 611.1L113.2 595.6L169.8 580.1L226.4 564.5L283.0 549.0L339.6 533.4L396.2 517.9L452.9 502.3L509.5 486.8L566.1 471.3L622.7 455.7L679.3 440.2L735.9 424.6L792.5 409.1L849.1 393.6L905.7 378.0L962.3 362.5L1018.9 346.9M0.0 615.0 L56.6 599.7L113.2 584.4L169.8 569.1L226.4 553.9L283.0 538.6L339.6 523.3L396.2 508.0L452.9 492.7L509.5 477.4L566.1 462.1L622.7 446.8L679.3 431.5L735.9 416.3L792.5 401.0L849.1 385.7L905.7 370.4L962.3 355.1M0.0 603.7 L56.6 588.7L113.2 573.6L169.8 558.6L226.4 543.5L283.0 528.5L339.6 513.5L396.2 498.4L452.9 483.4L509.5 468.3L566.1 453.3L622.7 438.2L679.3 423.2L735.9 408.1L792.5 393.1L849.1 378.0L905.7 363.0M0.0 592.8 L56.6 578.0L113.2 563.2L169.8 548.4L226.4 533.6L283.0 518.7L339.6 503.9L396.2 489.1L452.9 474.3L509.5 459.5L566.1 444.7L622.7 429.9L679.3 415.1L735.9 400.3L792.5 385.5L849.1 370.7M0.0 582.2 L56.6 567.6L113.2 553.0L169.8 538.4L226.4 523.9L283.0 509.3L339.6 494.7L396.2 480.1L452.9 465.5L509.5 451.0L566.1 436.4L622.7 421.8L679.3 407.2L735.9 392.7L792.5 378.1L849.1 363.5M0.0 561.9 L56.6 547.8L113.2 533.7L169.8 519.5L226.4 505.4L283.0 491.2L339.6 477.1L396.2 462.9L452.9 448.8L509.5 434.7L566.1 420.5L622.7 406.4L679.3 392.2L735.9 378.1M0.0 552.3 L56.6 538.3L113.2 524.4L169.8 510.5L226.4 496.5L283.0 482.6L339.6 468.7L396.2 454.7L452.9 440.8L509.5 426.9L566.1 412.9L622.7 399.0L679.3 385.1M0.0 542.9 L56.6 529.1L113.2 515.4L169.8 501.7L226.4 487.9L283.0 474.2L339.6 460.5L396.2 446.7L452.9 433.0L509.5 419.3L566.1 405.6L622.7 391.8M0.0 533.7 L56.6 520.2L113.2 506.7L169.8 493.1L226.4 479.6L283.0 466.1L339.6 452.5L396.2 439.0L452.9 425.5L509.5 411.9L566.1 398.4M-0.0 524.9 L56.6 511.5L113.2 498.2L169.8 484.8L226.4 471.5L283.0 458.1L339.6 444.8L396.2 431.5L452.9 418.1L509.5 404.8M0.0 516.2 L56.6 503.1L113.2 489.9L169.8 476.8L226.4 463.6L283.0 450.5L339.6 437.3L396.2 424.1L452.9 411.0M0.0 507.8 L56.6 494.9L113.2 481.9L169.8 468.9L226.4 455.9L283.0 443.0L339.6 430.0M0.0 499.7 L56.6 486.9L113.2 474.1L169.8 461.3L226.4 448.5L283.0 435.7M0.0 491.7 L56.6 479.1L113.2 466.5L169.8 453.8L226.4 441.2M0.0 476.5 L56.6 464.2L113.2 451.9M0.0 469.1 L56.6 457.0M15.6 944.0 L11.7 894.7L7.8 845.4L3.9 796.2L0.0 746.9M58.1 944.0 L51.7 890.3L45.2 836.5L38.8 782.8L32.3 729.0L25.8 675.3L19.4 621.5L12.9 567.8L6.5 514.0L0.0 460.3M100.6 944.0 L91.5 887.2L82.3 830.4L73.2 773.6L64.0 716.7L54.9 659.9L45.7 603.1L36.6 546.3L27.4 489.5L18.3 432.7M143.1 944.0 L132.1 889.5L121.1 834.9L110.1 780.4L99.1 725.8L88.1 671.3L77.1 616.8L66.0 562.2L55.0 507.7L44.0 453.1M185.6 944.0 L172.3 889.4L159.1 834.7L145.8 780.1L132.5 725.5L119.3 670.9L106.0 616.2L92.8 561.6L79.5 507.0L66.3 452.3M228.0 944.0 L211.8 886.5L195.5 829.1L179.2 771.6L162.9 714.1L146.6 656.7L130.3 599.2L114.0 541.7L97.7 484.3L81.4 426.8M270.5 944.0 L252.5 888.4L234.4 832.8L216.4 777.2L198.4 721.5L180.3 665.9L162.3 610.3L144.3 554.7L126.2 499.1L108.2 443.5M355.4 944.0 L333.2 889.3L311.0 834.5L288.8 779.8L266.6 725.1L244.3 670.3L222.1 615.6L199.9 560.9L177.7 506.1L155.5 451.4M397.9 944.0 L374.5 891.6L351.1 839.2L327.7 786.8L304.2 734.4L280.8 682.0L257.4 629.6L234.0 577.2L210.6 524.8L187.2 472.4L163.8 420.0M440.3 944.0 L414.6 891.4L389.0 838.7L363.3 786.1L337.7 733.4L312.0 680.8L286.3 628.1L260.7 575.5L235.0 522.8L209.4 470.2L183.7 417.5M482.7 944.0 L454.9 891.4L427.1 838.7L399.3 786.1L371.5 733.4L343.7 680.8L315.9 628.1L288.1 575.5L260.3 522.8L232.5 470.2L204.7 417.5M525.2 944.0 L496.9 894.3L468.6 844.6L440.3 794.8L412.0 745.1L383.7 695.4L355.4 645.7L327.1 595.9L298.8 546.2L270.6 496.5L242.3 446.8M567.6 944.0 L537.3 894.3L507.0 844.6L476.7 794.8L446.3 745.1L416.0 695.4L385.7 645.7L355.4 595.9L325.1 546.2L294.7 496.5L264.4 446.8M610.0 944.0 L577.7 894.3L545.3 844.6L513.0 794.8L480.6 745.1L448.3 695.4L416.0 645.7L383.6 595.9L351.3 546.2L318.9 496.5L286.6 446.8M652.4 944.0 L619.9 896.9L587.3 849.8L554.8 802.7L522.2 755.6L489.6 708.5L457.1 661.4L424.5 614.3L391.9 567.2L359.4 520.1L326.8 472.9L294.3 425.8M694.9 944.0 L660.4 896.9L625.9 849.8L591.4 802.7L556.9 755.6L522.4 708.5L488.0 661.4L453.5 614.3L419.0 567.2L384.5 520.1L350.0 472.9L315.5 425.8M779.7 944.0 L743.3 899.2L706.9 854.5L670.5 809.8L634.0 765.0L597.6 720.2L561.2 675.5L524.8 630.8L488.4 586.0L452.0 541.2L415.6 496.5L379.2 451.8L342.8 407.0M822.1 944.0 L783.8 899.2L745.6 854.5L707.4 809.8L669.2 765.0L630.9 720.2L592.7 675.5L554.5 630.8L516.2 586.0L478.0 541.2L439.8 496.5L401.5 451.8L363.3 407.0M864.5 944.0 L826.3 901.4L788.2 858.8L750.0 816.1L711.9 773.5L673.7 730.9L635.6 688.3L597.4 645.7L559.3 603.0L521.2 560.4L483.0 517.8L444.9 475.2L406.7 432.6M906.8 944.0 L867.0 901.4L827.1 858.8L787.2 816.1L747.3 773.5L707.4 730.9L667.6 688.3L627.7 645.7L587.8 603.0L547.9 560.4L508.0 517.8L468.2 475.2L428.3 432.6M949.2 944.0 L907.6 901.4L866.0 858.8L824.4 816.1L782.8 773.5L741.1 730.9L699.5 688.3L657.9 645.7L616.3 603.0L574.7 560.4L533.1 517.8L491.4 475.2L449.8 432.6M991.6 944.0 L950.2 903.3L908.8 862.6L867.5 822.0L826.1 781.3L784.7 740.6L743.3 699.9L701.9 659.2L660.6 618.5L619.2 577.9L577.8 537.2L536.4 496.5L495.0 455.8L453.6 415.1M1034.0 944.0 L990.9 903.3L947.9 862.6L904.9 822.0L861.8 781.3L818.8 740.6L775.7 699.9L732.7 659.2L689.7 618.5L646.6 577.9L603.6 537.2L560.6 496.5L517.5 455.8L474.5 415.1M1076.3 944.0 L1033.6 905.1L990.8 866.2L948.1 827.3L905.3 788.3L862.6 749.4L819.8 710.5L777.1 671.6L734.3 632.7L691.6 593.8L648.8 554.9L606.1 516.0L563.3 477.0L520.6 438.1L477.8 399.2M1118.7 944.0 L1074.4 905.1L1030.0 866.2L985.7 827.3L941.4 788.3L897.0 749.4L852.7 710.5L808.4 671.6L764.0 632.7L719.7 593.8L675.4 554.9L631.0 516.0L586.7 477.0L542.3 438.1L498.0 399.2M1203.4 944.0 L1157.9 906.7L1112.4 869.4L1066.8 832.1L1021.3 794.8L975.8 757.5L930.3 720.2L884.7 683.0L839.2 645.7L793.7 608.4L748.2 571.1L702.7 533.8L657.1 496.5L611.6 459.2L566.1 421.9M1245.8 944.0 L1200.6 908.2L1155.4 872.4L1110.3 836.6L1065.1 800.8L1020.0 765.0L974.8 729.2L929.6 693.4L884.5 657.6L839.3 621.8L794.2 586.0L749.0 550.2L703.8 514.4L658.7 478.6L613.5 442.8L568.4 407.0M1288.1 944.0 L1241.5 908.2L1194.9 872.4L1148.3 836.6L1101.6 800.8L1055.0 765.0L1008.4 729.2L961.8 693.4L915.2 657.6L868.6 621.8L821.9 586.0L775.3 550.2L728.7 514.4L682.1 478.6L635.5 442.8L588.9 407.0M1330.4 944.0 L1282.4 908.2L1234.3 872.4L1186.2 836.6L1138.1 800.8L1090.1 765.0L1042.0 729.2L993.9 693.4L945.9 657.6L897.8 621.8L849.7 586.0L801.6 550.2L753.6 514.4L705.5 478.6L657.4 442.8L609.3 407.0M1372.8 944.0 L1325.1 909.6L1277.5 875.2L1229.9 840.7L1182.3 806.3L1134.6 771.9L1087.0 737.5L1039.4 703.0L991.8 668.6L944.2 634.2L896.5 599.8L848.9 565.3L801.3 530.9L753.7 496.5L706.0 462.1L658.4 427.7L610.8 393.2M1415.1 944.0 L1366.1 909.6L1317.0 875.2L1268.0 840.7L1219.0 806.3L1170.0 771.9L1120.9 737.5L1071.9 703.0L1022.9 668.6L973.9 634.2L924.9 599.8L875.8 565.3L826.8 530.9L777.8 496.5L728.8 462.1L679.7 427.7L630.7 393.2M1457.4 944.0 L1408.9 910.9L1360.3 877.7L1311.7 844.6L1263.2 811.4L1214.6 778.3L1166.1 745.1L1117.5 712.0L1069.0 678.8L1020.4 645.7L971.8 612.5L923.3 579.4L874.7 546.2L826.2 513.1L777.6 479.9L729.1 446.8L680.5 413.6L632.0 380.5M1499.7 944.0 L1449.8 910.9L1399.9 877.7L1350.0 844.6L1300.1 811.4L1250.2 778.3L1200.3 745.1L1150.4 712.0L1100.5 678.8L1050.6 645.7L1000.7 612.5L950.8 579.4L900.9 546.2L851.0 513.1L801.1 479.9L751.2 446.8L701.3 413.6L651.4 380.5M1542.0 944.0 L1492.6 912.0L1443.2 880.1L1393.8 848.1L1344.4 816.1L1294.9 784.2L1245.5 752.2L1196.1 720.2L1146.7 688.3L1097.2 656.3L1047.8 624.4L998.4 592.4L949.0 560.4L899.6 528.5L850.1 496.5L800.7 464.5L751.3 432.6L701.9 400.6M1585.0 918.4 L1534.5 887.4L1483.9 856.3L1433.4 825.3L1382.9 794.2L1332.3 763.2L1281.8 732.1L1231.3 701.1L1180.7 670.0L1130.2 639.0L1079.7 607.9L1029.1 576.9L978.6 545.8L928.1 514.8L877.5 483.7L827.0 452.7L776.5 421.6L725.9 390.6M1585.0 893.7 L1534.7 863.5L1484.4 833.3L1434.0 803.2L1383.7 773.0L1333.4 742.8L1283.1 712.7L1232.7 682.5L1182.4 652.3L1132.1 622.2L1081.8 592.0L1031.5 561.8L981.1 531.7L930.8 501.5L880.5 471.3L830.2 441.2L779.9 411.0L729.5 380.8M1585.0 870.1 L1534.9 840.8L1484.8 811.5L1434.7 782.2L1384.6 752.8L1334.4 723.5L1284.3 694.2L1234.2 664.8L1184.1 635.5L1134.0 606.2L1083.9 576.9L1033.8 547.5L983.7 518.2L933.6 488.9L883.5 459.6L833.3 430.2L783.2 400.9L733.1 371.6M1585.0 847.7 L1533.3 818.1L1481.5 788.5L1429.8 758.9L1378.0 729.4L1326.3 699.8L1274.5 670.2L1222.8 640.6L1171.0 611.0L1119.3 581.4L1067.5 551.9L1015.8 522.3L964.0 492.7L912.3 463.1L860.5 433.5L808.8 404.0L757.0 374.4M1585.0 826.2 L1533.5 797.5L1481.9 768.7L1430.4 739.9L1378.9 711.1L1327.4 682.3L1275.8 653.5L1224.3 624.7L1172.8 595.9L1121.2 567.2L1069.7 538.4L1018.2 509.6L966.7 480.8L915.1 452.0L863.6 423.2L812.1 394.4L760.6 365.7M1585.0 805.8 L1533.7 777.7L1482.4 749.7L1431.1 721.7L1379.8 693.6L1328.5 665.6L1277.1 637.6L1225.8 609.6L1174.5 581.5L1123.2 553.5L1071.9 525.5L1020.6 497.5L969.3 469.4L918.0 441.4L866.7 413.4L815.4 385.3M1585.0 786.2 L1533.9 758.9L1482.8 731.6L1431.7 704.3L1380.6 677.0L1329.6 649.7L1278.5 622.4L1227.4 595.1L1176.3 567.8L1125.2 540.4L1074.1 513.1L1023.0 485.8L971.9 458.5L920.8 431.2L869.7 403.9L818.7 376.6M1585.0 767.4 L1532.2 739.8L1479.3 712.2L1426.5 684.5L1373.7 656.9L1320.9 629.3L1268.0 601.6L1215.2 574.0L1162.4 546.4L1109.6 518.7L1056.7 491.1L1003.9 463.5L951.1 435.8L898.2 408.2L845.4 380.6M1585.0 749.4 L1532.4 722.5L1479.8 695.6L1427.2 668.6L1374.6 641.7L1322.0 614.7L1269.4 587.8L1216.8 560.9L1164.2 533.9L1111.6 507.0L1059.0 480.0L1006.4 453.1L953.8 426.2L901.2 399.2L848.6 372.3M1585.0 715.7 L1532.9 690.0L1480.7 664.4L1428.6 638.7L1376.4 613.1L1324.3 587.5L1272.1 561.8L1220.0 536.2L1167.8 510.5L1115.7 484.9L1063.6 459.3L1011.4 433.6L959.3 408.0L907.1 382.3L855.0 356.7M1585.0 699.8 L1531.0 673.7L1477.0 647.7L1423.0 621.7L1369.0 595.6L1315.0 569.6L1261.0 543.6L1207.0 517.6L1153.0 491.5L1099.1 465.5L1045.1 439.5L991.1 413.4L937.1 387.4L883.1 361.4M1585.0 684.5 L1531.2 659.1L1477.5 633.6L1423.7 608.2L1370.0 582.8L1316.2 557.4L1262.5 532.0L1208.7 506.5L1154.9 481.1L1101.2 455.7L1047.4 430.3L993.7 404.9L939.9 379.5L886.1 354.0M1585.0 669.8 L1531.5 644.9L1478.0 620.1L1424.4 595.3L1370.9 570.5L1317.4 545.6L1263.9 520.8L1210.4 496.0L1156.8 471.1L1103.3 446.3L1049.8 421.5L996.3 396.6L942.7 371.8L889.2 347.0M1585.0 655.6 L1531.7 631.3L1478.4 607.1L1425.1 582.8L1371.9 558.6L1318.6 534.3L1265.3 510.0L1212.0 485.8L1158.7 461.5L1105.4 437.2L1052.2 413.0L998.9 388.7L945.6 364.4M1585.0 642.0 L1532.0 618.2L1478.9 594.5L1425.9 570.8L1372.8 547.1L1319.8 523.4L1266.7 499.7L1213.7 475.9L1160.6 452.2L1107.6 428.5L1054.5 404.8L1001.5 381.1L948.4 357.3M1585.0 628.8 L1532.2 605.6L1479.4 582.4L1426.6 559.2L1373.8 536.0L1320.9 512.8L1268.1 489.7L1215.3 466.5L1162.5 443.3L1109.7 420.1L1056.9 396.9L1004.1 373.7L951.3 350.5M1585.0 616.1 L1530.2 592.5L1475.5 568.9L1420.7 545.2L1365.9 521.6L1311.2 498.0L1256.4 474.3L1201.6 450.7L1146.9 427.1L1092.1 403.4L1037.3 379.8L982.6 356.2M1585.0 603.9 L1530.5 580.7L1476.0 557.6L1421.4 534.5L1366.9 511.4L1312.4 488.3L1257.9 465.1L1203.4 442.0L1148.8 418.9L1094.3 395.8L1039.8 372.7L985.3 349.5M1585.0 580.6 L1531.0 558.4L1476.9 536.3L1422.9 514.1L1368.9 492.0L1314.9 469.8L1260.8 447.7L1206.8 425.5L1152.8 403.4L1098.7 381.2L1044.7 359.1M1585.0 569.5 L1531.2 547.8L1477.4 526.1L1423.7 504.4L1369.9 482.7L1316.1 461.1L1262.3 439.4L1208.5 417.7L1154.7 396.0L1101.0 374.3L1047.2 352.6M1585.0 558.8 L1531.5 537.5L1477.9 516.3L1424.4 495.1L1370.9 473.8L1317.3 452.6L1263.8 431.3L1210.2 410.1L1156.7 388.9L1103.2 367.6M1585.0 548.4 L1529.4 526.7L1473.8 505.0L1418.2 483.3L1362.6 461.6L1307.0 439.8L1251.4 418.1L1195.7 396.4L1140.1 374.7M1585.0 538.4 L1529.6 517.1L1474.3 495.8L1418.9 474.5L1363.6 453.2L1308.2 432.0L1252.9 410.7L1197.5 389.4L1142.2 368.1M1585.0 528.6 L1529.9 507.8L1474.8 486.9L1419.7 466.1L1364.6 445.2L1309.5 424.4L1254.4 403.5L1199.3 382.6M1585.0 519.2 L1530.2 498.7L1475.3 478.3L1420.5 457.8L1365.6 437.4L1310.8 417.0L1256.0 396.5M1585.0 510.0 L1530.4 490.0L1475.8 469.9L1421.3 449.9L1366.7 429.8L1312.1 409.8L1257.5 389.7M1585.0 501.1 L1530.7 481.5L1476.4 461.8L1422.0 442.1L1367.7 422.5L1313.4 402.8M1585.0 484.1 L1528.7 464.3L1472.5 444.5L1416.2 424.8M1585.0 475.9 L1529.0 456.5L1473.0 437.1L1417.0 417.7M1585.0 468.0 L1529.3 449.0L1473.6 429.9M1585.0 460.3 L1529.5 441.6" stroke="#fff" stroke-opacity="0.080" fill="none" stroke-width="1.35"/>
<path d="M1491.8 103.6 L1585.0 87.4M1305.3 114.3 L1398.5 99.6L1491.8 84.9L1585.0 70.3M1212.1 109.7 L1305.3 96.3L1398.5 82.9L1491.8 69.5L1585.0 56.1M1064.6 113.0 L1161.4 100.2L1258.2 87.4L1354.9 74.6L1451.7 61.8L1548.5 49.0M975.0 108.6 L1072.5 96.7L1170.0 84.8L1267.5 72.9L1365.0 60.9L1462.4 49.0M884.7 105.0 L983.0 93.8L1081.3 82.6L1179.6 71.4L1277.9 60.2L1376.2 49.0M694.5 112.4 L793.8 101.8L893.0 91.3L992.2 80.7L1091.4 70.1L1190.6 59.6L1289.9 49.0M648.0 104.5 L740.5 95.3L833.1 86.0L925.6 76.8L1018.2 67.5L1110.8 58.3L1203.3 49.0M465.3 110.4 L558.3 101.6L651.4 92.8L744.4 84.1L837.5 75.3L930.6 66.5L1023.6 57.8L1116.7 49.0M374.5 107.4 L468.1 99.0L561.7 90.7L655.3 82.4L749.0 74.0L842.6 65.7L936.2 57.3L1029.8 49.0M282.9 104.7 L377.1 96.8L471.4 88.8L565.7 80.8L660.0 72.9L754.3 64.9L848.6 57.0L942.8 49.0M95.1 110.1 L190.2 102.4L285.2 94.8L380.3 87.2L475.4 79.5L570.5 71.9L665.5 64.3L760.6 56.6L855.7 49.0M0.0 107.8 L96.0 100.4L192.1 93.1L288.1 85.7L384.2 78.4L480.2 71.0L576.3 63.7L672.3 56.3L768.4 49.0M0.0 98.7 L97.3 91.6L194.6 84.5L291.8 77.4L389.1 70.3L486.4 63.2L583.7 56.1L680.9 49.0M0.0 90.5 L98.9 83.6L197.8 76.6L296.7 69.7L395.5 62.8L494.4 55.9L593.3 49.0M0.0 82.9 L84.3 77.2L168.5 71.6L252.8 65.9L337.0 60.3L421.3 54.6L505.5 49.0M0.0 75.9 L83.5 70.5L167.0 65.1L250.6 59.7L334.1 54.4L417.6 49.0M0.0 69.4 L82.4 64.3L164.8 59.2L247.1 54.1L329.5 49.0M0.0 63.4 L80.4 58.6L160.8 53.8L241.3 49.0M0.0 57.8 L76.4 53.4L152.8 49.0M0.0 52.6 L64.3 49.0M103.3 123.6 L45.6 49.0M180.4 112.9 L104.9 49.0M247.7 101.6 L164.2 49.0M308.4 91.7 L223.3 49.0M456.1 121.4 L369.3 85.2L282.4 49.0M519.1 112.4 L430.3 80.7L341.4 49.0M582.6 105.8 L491.5 77.4L400.4 49.0M646.9 100.9 L553.1 75.0L459.3 49.0M712.1 97.3 L615.1 73.1L518.1 49.0M851.8 111.2 L760.1 90.5L668.5 69.7L576.8 49.0M920.3 108.1 L825.4 88.4L730.4 68.7L635.5 49.0M1050.4 117.2 L961.3 100.1L872.2 83.1L783.2 66.0L694.1 49.0M1122.5 114.7 L1030.1 98.3L937.6 81.9L845.1 65.4L752.6 49.0M1198.0 113.2 L1101.3 97.1L1004.5 81.1L907.8 65.0L811.0 49.0M1227.2 104.6 L1137.8 90.7L1048.3 76.8L958.9 62.9L869.4 49.0M1303.3 104.0 L1209.4 90.2L1115.5 76.5L1021.6 62.7L927.7 49.0M1413.8 108.2 L1328.3 96.3L1242.7 84.5L1157.1 72.7L1071.5 60.8L986.0 49.0M1494.9 108.1 L1404.7 96.3L1314.6 84.4L1224.4 72.6L1134.3 60.8L1044.1 49.0M1585.0 109.1 L1488.4 97.1L1391.9 85.1L1295.3 73.1L1198.8 61.0L1102.2 49.0M1585.0 99.4 L1500.1 89.3L1415.1 79.2L1330.2 69.2L1245.2 59.1L1160.3 49.0M1585.0 90.6 L1493.3 80.2L1401.6 69.8L1309.9 59.4L1218.2 49.0M1585.0 82.5 L1507.8 74.1L1430.6 65.7L1353.3 57.4L1276.1 49.0M1585.0 75.1 L1501.3 66.4L1417.6 57.7L1334.0 49.0M1585.0 68.3 L1488.4 58.6L1391.7 49.0M1585.0 62.0 L1517.2 55.5L1449.4 49.0M1585.0 56.2 L1507.0 49.0M1585.0 50.8 L1564.6 49.0" stroke="#fff" stroke-opacity="0.023" fill="none" stroke-width="1.5"/>
<path d="M1398.5 144.7 L1491.8 126.6L1585.0 108.5M1305.3 136.0 L1398.5 119.8L1491.8 103.6M1118.8 143.6 L1212.1 129.0L1305.3 114.3M1025.6 136.5 L1118.8 123.1L1212.1 109.7M871.0 138.5 L967.8 125.8L1064.6 113.0M682.5 144.4 L780.0 132.5L877.5 120.6L975.0 108.6M589.8 138.5 L688.1 127.4L786.4 116.2L884.7 105.0M396.9 144.1 L496.1 133.5L595.3 123.0L694.5 112.4M277.7 141.5 L370.3 132.3L462.8 123.0L555.4 113.8L648.0 104.5M186.1 136.7 L279.2 127.9L372.2 119.1L465.3 110.4M0.0 140.7 L93.6 132.4L187.2 124.0L280.9 115.7L374.5 107.4M0.0 128.6 L94.3 120.7L188.6 112.7L282.9 104.7M0.0 117.7 L95.1 110.1M31.3 172.4 L0.0 86.7M331.2 154.3 L247.7 101.6M393.5 134.4 L308.4 91.7M542.9 157.6 L456.1 121.4M607.9 144.0 L519.1 112.4M673.8 134.2 L582.6 105.8M834.5 152.9 L740.7 126.9L646.9 100.9M906.0 145.6 L809.0 121.4L712.1 97.3M943.4 131.9 L851.8 111.2M1110.2 147.4 L1015.3 127.7L920.3 108.1M1139.5 134.2 L1050.4 117.2M1307.5 147.6 L1215.0 131.2L1122.5 114.7M1391.5 145.3 L1294.8 129.2L1198.0 113.2M1495.6 146.4 L1406.1 132.5L1316.7 118.6L1227.2 104.6M1585.0 145.2 L1491.1 131.5L1397.2 117.7L1303.3 104.0M1585.0 131.9 L1499.4 120.0L1413.8 108.2M1585.0 119.9 L1494.9 108.1" stroke="#fff" stroke-opacity="0.045" fill="none" stroke-width="1.5"/>
<path d="M1398.5 176.2 L1491.8 155.7L1585.0 135.2M1212.1 181.0 L1305.3 162.9L1398.5 144.7M1118.8 168.5 L1212.1 152.3L1305.3 136.0M932.4 173.0 L1025.6 158.3L1118.8 143.6M745.9 176.7 L839.1 163.3L932.4 149.9L1025.6 136.5M580.7 176.9 L677.5 164.1L774.3 151.3L871.0 138.5M487.5 168.3 L585.0 156.4L682.5 144.4M294.9 172.1 L393.2 160.9L491.5 149.7L589.8 138.5M99.2 175.8 L198.4 165.2L297.7 154.6L396.9 144.1M0.0 169.3 L92.6 160.0L185.1 150.8L277.7 141.5M0.0 154.2 L93.1 145.4L186.1 136.7M160.9 198.2 L103.3 123.6M255.8 176.9 L180.4 112.9M478.6 177.1 L393.5 134.4M696.7 175.7 L607.9 144.0M764.9 162.6 L673.8 134.2M928.3 178.8 L834.5 152.9M1003.0 169.7 L906.0 145.6M1126.7 173.4 L1035.1 152.7L943.4 131.9M1205.2 167.1 L1110.2 147.4M1317.7 168.3 L1228.6 151.3L1139.5 134.2M1492.5 180.5 L1400.0 164.1L1307.5 147.6M1585.0 177.4 L1488.3 161.3L1391.5 145.3M1585.0 160.3 L1495.6 146.4" stroke="#fff" stroke-opacity="0.068" fill="none" stroke-width="1.5"/>
<path d="M1398.5 217.2 L1491.8 193.5L1585.0 169.9M1212.1 217.2 L1305.3 196.7L1398.5 176.2M1025.6 217.2 L1118.8 199.1L1212.1 181.0M839.1 217.1 L932.4 200.9L1025.6 184.7L1118.8 168.5M745.9 202.3 L839.1 187.7L932.4 173.0M559.4 203.5 L652.6 190.1L745.9 176.7M290.3 215.3 L387.1 202.5L483.9 189.7L580.7 176.9M195.0 204.1 L292.5 192.1L390.0 180.2L487.5 168.3M0.0 205.7 L98.3 194.5L196.6 183.3L294.9 172.1M0.0 186.3 L99.2 175.8M331.2 240.8 L255.8 176.9M414.8 206.9 L331.2 154.3M563.7 219.8 L478.6 177.1M629.8 193.8 L542.9 157.6M785.6 207.4 L696.7 175.7M947.1 219.4 L856.0 191.0L764.9 162.6M1022.1 204.8 L928.3 178.8M1197.0 218.0 L1100.0 193.9L1003.0 169.7M1310.0 214.9 L1218.4 194.1L1126.7 173.4M1395.1 206.5 L1300.1 186.8L1205.2 167.1M1495.9 202.4 L1406.8 185.4L1317.7 168.3M1585.0 196.9 L1492.5 180.5" stroke="#fff" stroke-opacity="0.090" fill="none" stroke-width="1.5"/>
<path d="M1398.5 272.8 L1491.8 244.9L1585.0 217.0M1212.1 264.5 L1305.3 240.8L1398.5 217.2M932.4 278.8 L1025.6 258.3L1118.8 237.8L1212.1 217.2M745.9 271.6 L839.1 253.4L932.4 235.3L1025.6 217.2M559.4 265.8 L652.6 249.6L745.9 233.3L839.1 217.1M279.7 275.7 L372.9 261.0L466.2 246.4L559.4 231.7L652.6 217.0L745.9 202.3M93.2 270.5 L186.5 257.1L279.7 243.7L372.9 230.3L466.2 216.9L559.4 203.5M0.0 253.7 L96.8 240.9L193.6 228.1L290.3 215.3M0.0 227.9 L97.5 216.0L195.0 204.1M62.6 258.2 L31.3 172.4M218.5 272.8 L160.9 198.2M498.3 259.6 L414.8 206.9M648.8 262.5 L563.7 219.8M803.4 266.2 L716.6 230.0L629.8 193.8M963.2 270.7 L874.4 239.1L785.6 207.4M1129.4 276.2 L1038.3 247.8L947.1 219.4M1303.6 282.7 L1209.8 256.7L1115.9 230.7L1022.1 204.8M1391.0 266.3 L1294.0 242.2L1197.0 218.0M1585.0 277.1 L1493.3 256.3L1401.7 235.6L1310.0 214.9M1585.0 245.9 L1490.0 226.2L1395.1 206.5M1585.0 219.5 L1495.9 202.4" stroke="#fff" stroke-opacity="0.113" fill="none" stroke-width="1.5"/>
<path d="M1014.7 944.0 L1096.2 891.4L1177.6 838.8L1259.1 786.2L1340.6 733.6L1422.1 681.0L1503.5 628.3L1585.0 575.7M395.9 944.0 L480.8 904.4L565.8 864.8L650.7 825.2L735.6 785.7L820.6 746.1L905.5 706.5L990.5 666.9L1075.4 627.3L1160.3 587.7L1245.3 548.1L1330.2 508.5L1415.1 469.0L1500.1 429.4L1585.0 389.8M0.0 862.4 L93.2 828.4L186.5 794.4L279.7 760.4L372.9 726.4L466.2 692.4L559.4 658.5L652.6 624.5L745.9 590.5L839.1 556.5L932.4 522.5L1025.6 488.5L1118.8 454.6L1212.1 420.6L1305.3 386.6L1398.5 352.6L1491.8 318.6L1585.0 284.6M0.0 691.2 L93.2 663.3L186.5 635.4L279.7 607.5L372.9 579.6L466.2 551.7L559.4 523.9L652.6 496.0L745.9 468.1L839.1 440.2L932.4 412.3L1025.6 384.4L1118.8 356.5L1212.1 328.6L1305.3 300.7L1398.5 272.8M0.0 571.9 L93.2 548.3L186.5 524.6L279.7 501.0L372.9 477.3L466.2 453.7L559.4 430.0L652.6 406.4L745.9 382.7L839.1 359.1L932.4 335.4L1025.6 311.8L1118.8 288.1L1212.1 264.5M0.0 484.0 L93.2 463.5L186.5 442.9L279.7 422.4L372.9 401.9L466.2 381.4L559.4 360.9L652.6 340.4L745.9 319.8L839.1 299.3L932.4 278.8M0.0 416.5 L93.2 398.4L186.5 380.3L279.7 362.2L372.9 344.0L466.2 325.9L559.4 307.8L652.6 289.7L745.9 271.6M0.0 363.1 L93.2 346.9L186.5 330.6L279.7 314.4L372.9 298.2L466.2 282.0L559.4 265.8M0.0 319.7 L93.2 305.1L186.5 290.4L279.7 275.7M0.0 283.9 L93.2 270.5M313.0 944.0 L281.7 858.3L250.4 772.5L219.1 686.8L187.8 601.1L156.5 515.4L125.2 429.6L93.9 343.9L62.6 258.2M737.3 944.0 L679.6 869.4L622.0 794.8L564.4 720.2L506.7 645.7L449.1 571.1L391.4 496.5L333.8 421.9L276.2 347.3L218.5 272.8M1161.1 944.0 L1085.6 880.1L1010.2 816.1L934.7 752.2L859.3 688.3L783.9 624.4L708.4 560.4L633.0 496.5L557.6 432.6L482.1 368.6L406.7 304.7L331.2 240.8M1584.3 944.0 L1500.8 891.4L1417.3 838.7L1333.7 786.1L1250.2 733.4L1166.6 680.8L1083.1 628.1L999.6 575.5L916.0 522.8L832.5 470.2L748.9 417.5L665.4 364.9L581.9 312.2L498.3 259.6M1585.0 732.2 L1499.9 689.5L1414.8 646.8L1329.7 604.1L1244.6 561.4L1159.5 518.7L1074.4 476.0L989.3 433.3L904.2 390.6L819.1 347.9L734.0 305.2L648.8 262.5M1585.0 592.0 L1498.2 555.8L1411.3 519.6L1324.5 483.4L1237.6 447.2L1150.8 411.0L1064.0 374.8L977.1 338.6L890.3 302.4L803.4 266.2M1585.0 492.5 L1496.2 460.8L1407.3 429.1L1318.5 397.4L1229.7 365.8L1140.9 334.1L1052.0 302.4L963.2 270.7M1585.0 418.2 L1493.9 389.8L1402.8 361.4L1311.6 333.0L1220.5 304.6L1129.4 276.2M1585.0 360.6 L1491.2 334.6L1397.4 308.6L1303.6 282.7M1585.0 314.6 L1488.0 290.5L1391.0 266.3" stroke="#fff" stroke-opacity="0.135" fill="none" stroke-width="1.5"/>
<defs>
<filter id="b2" x="-20%" y="-20%" width="140%" height="140%"><feGaussianBlur stdDeviation="2"/></filter>
<filter id="b3" x="-20%" y="-20%" width="140%" height="140%"><feGaussianBlur stdDeviation="3"/></filter>
<filter id="b6" x="-20%" y="-20%" width="140%" height="140%"><feGaussianBlur stdDeviation="6"/></filter>
<clipPath id="capclip"><path d="M549.2 431.7 L550.0 416.7 L552.5 400.0 L555.2 382.0 L559.4 367.5 L562.5 362.0 L566.7 359.2 L583.3 353.0 L645.8 336.2 L708.3 320.6 L770.8 306.0 L812.5 298.8 L843.8 296.2 L878.0 297.9 L960.0 306.7 L1010.0 315.0 L1030.0 320.0 L1041.7 327.5 L1053.3 343.3 L1076.7 370.0 L1093.3 393.3 L1105.0 408.3 L1109.2 416.7 L1106.7 423.3 L1096.7 429.2 L1060.0 443.3 L987.5 470.0 L878.0 504.9 L840.0 517.5 L803.3 529.2 L786.7 533.0 L770.0 535.0 L753.3 535.3 L736.7 533.3 L720.0 530.0 L703.3 524.2 L670.0 509.2 L636.7 491.7 L603.3 471.7 L570.0 448.3 L549.2 431.7Z"/></clipPath>
<clipPath id="bodyclip"><path d="M546.7 433.0 L518.8 689.6 L705.0 944.0 L934.0 944.0 L1196.0 784.0 L1200.3 778.0 L1201.5 770.0 L1118.5 500.0 L1096.7 429.2 L1060.0 443.3 L987.5 470.0 L840.0 517.5 L770.0 535.0 L703.3 524.2 L636.7 491.7 L570.0 448.3Z"/></clipPath>
<linearGradient id="gLeft" gradientUnits="userSpaceOnUse" x1="520" y1="0" x2="740" y2="0"><stop offset="0" stop-color="#a3a5a4"/><stop offset="0.1" stop-color="#999b9a"/><stop offset="0.5" stop-color="#959796"/><stop offset="1" stop-color="#939596"/></linearGradient>
<linearGradient id="gDish" gradientUnits="userSpaceOnUse" x1="720" y1="400" x2="800" y2="296"><stop offset="0" stop-color="#8c8d8d"/><stop offset="0.4" stop-color="#949595"/><stop offset="1" stop-color="#9c9d9d"/></linearGradient>
<linearGradient id="gFront" gradientUnits="userSpaceOnUse" x1="548" y1="0" x2="1110" y2="0"><stop offset="0" stop-color="#a2a3a3"/><stop offset="0.04" stop-color="#9c9d9d"/><stop offset="0.25" stop-color="#9a9b9b"/><stop offset="0.31" stop-color="#a4a5a5"/><stop offset="0.345" stop-color="#b6b7b7"/><stop offset="0.375" stop-color="#b3b4b4"/><stop offset="0.43" stop-color="#a2a3a3"/><stop offset="0.55" stop-color="#9b9c9c"/><stop offset="0.8" stop-color="#939495"/><stop offset="1" stop-color="#8a8b8d"/></linearGradient>
<linearGradient id="gAxis" gradientUnits="userSpaceOnUse" x1="0" y1="0" x2="1585" y2="0"><stop offset="0" stop-color="#679a20"/><stop offset="0.35" stop-color="#64951f"/><stop offset="0.75" stop-color="#5b8824"/><stop offset="1" stop-color="#507628"/></linearGradient>
</defs>
<line x1="0" y1="572.5" x2="1585" y2="169.4" stroke="url(#gAxis)" stroke-width="1.5"/>
<g clip-path="url(#bodyclip)">
<rect x="500" y="420" width="720" height="530" fill="#7b7c7d"/>
<path d="M500.0 420.0 L735.0 420.0 L735.0 537.5 L744.6 944.0 L500.0 944.0Z" fill="url(#gLeft)"/>
<path d="M735.0 520.0 L749.2 520.0 L757.5 944.0 L744.6 944.0Z" fill="#9d9e9e"/>
<path d="M748.8 520.0 L784.5 520.0 L790.9 944.0 L757.0 944.0Z" fill="#a6a7a7"/>
<path d="M784.0 520.0 L803.5 520.0 L809.5 944.0 L790.4 944.0Z" fill="#989999"/>
<path d="M803.0 520.0 L820.1 520.0 L826.3 944.0 L809.0 944.0Z" fill="#868788"/>
<path d="M1079.4 425.0 L1097.4 425.0 L1210.0 790.0 L1194.0 790.0Z" fill="#727374"/>
<path d="M1089.4 425.0 L1097.4 425.0 L1210.0 790.0 L1202.5 790.0Z" fill="#606162"/>
</g>
<path d="M1097.2 430.0 L1149.7 600.0 L1201.8 768.0" fill="none" stroke="#2c2c2c" stroke-width="1" opacity="0.75"/>
<g clip-path="url(#capclip)">
<rect x="540" y="290" width="580" height="250" fill="url(#gFront)"/>
<path d="M562.5 362.0 L566.7 359.2 L583.3 353.0 L645.8 336.2 L708.3 320.6 L770.8 306.0 L812.5 298.8 L843.8 296.2 L878.0 297.9 L960.0 306.7 L1010.0 315.0 L1030.0 320.0 L1041.7 327.5 L1035.5 325.3 L1023.4 331.4 L993.2 340.4 L932.7 355.5 L872.3 370.6 L811.9 385.7 L769.6 396.3 L736.4 399.3 L706.2 396.3 L660.8 385.7 L615.5 373.6 L570.2 361.0Z" fill="url(#gDish)"/>
<path d="M570.2 368.0 L615.5 380.6 L660.8 392.7 L706.2 403.3 L736.4 406.3 L769.6 403.3 L811.9 392.7 L872.3 377.6 L932.7 362.5 L993.2 347.4 L1023.4 338.4 L1035.5 332.3" fill="none" stroke="#a7a8a8" stroke-width="7" filter="url(#b2)"/>
<path d="M570.2 360.0 L615.5 372.6 L660.8 384.7 L706.2 395.3 L736.4 398.3 L769.6 395.3 L811.9 384.7 L872.3 369.6 L932.7 354.5 L993.2 339.4 L1023.4 330.4 L1035.5 324.3" fill="none" stroke="#878888" stroke-width="5" filter="url(#b2)"/>
<path d="M566.7 361.0 L583.3 355.0 L645.8 338.5 L708.3 323.0 L770.8 308.5 L812.5 301.0 L843.8 298.6 L878.0 300.0 L960.0 309.0 L1010.0 317.5 L1032.0 323.0" fill="none" stroke="#a5a6a6" stroke-width="7" filter="url(#b3)"/>
<path d="M556.0 395.0 L560.0 372.0 L568.0 362.0" fill="none" stroke="#a3a4a4" stroke-width="6" filter="url(#b3)"/>
<path d="M1043.0 333.0 L1116.0 420.0 L1098.0 440.0 L1062.0 420.0 L1046.0 370.0Z" fill="#8c8d8f" filter="url(#b3)"/>
<path d="M1037.0 327.0 L1048.0 338.0 L1075.0 372.0 L1100.0 407.0" fill="none" stroke="#a2a3a3" stroke-width="5" filter="url(#b2)"/>
</g>
<path d="M549.2 431.7 L570.0 448.3 L603.3 471.7 L636.7 491.7 L670.0 509.2 L703.3 524.2 L720.0 530.0 L736.7 533.3 L753.3 535.3 L770.0 535.0 L786.7 533.0 L803.3 529.2 L840.0 517.5 L878.0 504.9 L987.5 470.0 L1060.0 443.3 L1096.7 429.2" fill="none" stroke="#505151" stroke-width="0.9"/>
<path d="M1041.7 327.5 L1053.3 343.3 L1076.7 370.0 L1093.3 393.3 L1105.0 408.3 L1109.2 416.7 L1106.7 423.3 L1097.0 429.5" fill="none" stroke="#333" stroke-width="0.8" opacity="0.6"/>
<circle cx="816.3" cy="404.2" r="2.6" fill="#f5a030" stroke="#2a2a2a" stroke-width="0.9"/>
</svg></div>
<div class="b" style="left:1px;top:50px;width:1584px;height:52px;background:rgba(48,48,48,0.5);border-radius:5px 5px 0 0;"></div>
<div class="b" style="left:10px;top:52.5px;width:30.3px;height:19px;background:#282828;border-radius:4px;border:1px solid #444;"></div>
<svg class="b" style="left:13px;top:54px;" width="17" height="16" viewBox="0 0 17 16"><path d="M2.2 9.5H9M1 13H14.5M4.8 7.5L3.2 15.5M10.8 10.5L11.6 15.5" stroke="#d8d8d8" stroke-width="1.1" fill="none"/><circle cx="10.6" cy="5.2" r="3.6" fill="#e8e8e8"/><path d="M8.6 4.2Q9 2.9 10.4 2.8" stroke="#444" stroke-width="0.8" fill="none"/></svg>
<svg class="b" style="left:29.3px;top:57.5px;" width="10" height="10" viewBox="0 0 10 10"><path d="M2 3.8 L5 6.8 L8 3.8" fill="none" stroke="#e6e6e6" stroke-width="1.3" stroke-linecap="round" stroke-linejoin="round"/></svg>
<div class="b" style="left:46.8px;top:52.5px;width:108.2px;height:19px;background:#282828;border-radius:4px;border:1px solid #444;"></div>
<svg class="b" style="left:51px;top:54px;" width="16" height="16" viewBox="0 0 16 16"><rect x="4.2" y="4.2" width="7.6" height="7.6" fill="#e6e6e6"/><path d="M1.5 4.5V1.5H4.5M11.5 1.5H14.5V4.5M14.5 11.5V14.5H11.5M4.5 14.5H1.5V11.5" stroke="#d0d0d0" stroke-width="1.1" fill="none"/></svg>
<span class="t" style="left:72.50px;top:55.70px;font-size:11px;line-height:13px;letter-spacing:-0.572px;color:#e6e6e6;font-family:'DejaVu Sans','Liberation Sans',sans-serif;">Object Mode</span>
<svg class="b" style="left:144.3px;top:57.5px;" width="10" height="10" viewBox="0 0 10 10"><path d="M2 3.8 L5 6.8 L8 3.8" fill="none" stroke="#e6e6e6" stroke-width="1.3" stroke-linecap="round" stroke-linejoin="round"/></svg>
<span class="t" style="left:168.00px;top:55.70px;font-size:11px;line-height:13px;letter-spacing:-0.401px;color:#e6e6e6;font-family:'DejaVu Sans','Liberation Sans',sans-serif;">View</span>
<span class="t" style="left:208.20px;top:55.70px;font-size:11px;line-height:13px;letter-spacing:-0.523px;color:#e6e6e6;font-family:'DejaVu Sans','Liberation Sans',sans-serif;">Select</span>
<span class="t" style="left:253.75px;top:55.70px;font-size:11px;line-height:13px;letter-spacing:-0.582px;color:#e6e6e6;font-family:'DejaVu Sans','Liberation Sans',sans-serif;">Add</span>
<span class="t" style="left:288.00px;top:55.70px;font-size:11px;line-height:13px;letter-spacing:-0.429px;color:#e6e6e6;font-family:'DejaVu Sans','Liberation Sans',sans-serif;">Object</span>
<div class="b" style="left:667.5px;top:52.5px;width:78.8px;height:19px;background:#282828;border-radius:4px;border:1px solid #444;"></div>
<svg class="b" style="left:672px;top:54px;" width="16" height="16" viewBox="0 0 16 16"><path d="M3.4 3V12.6M3.4 12.6L13 14.4M3 4.6L9.4 12.8" stroke="#e0e0e0" stroke-width="1.1" fill="none"/><path d="M3.4 0.8L1.5 3.8H5.3Z M15.2 14.8L12 15.6L12.6 12.4Z" fill="#e0e0e0"/><path d="M1.2 3.2H5.6" stroke="#e0e0e0" stroke-width="1"/></svg>
<span class="t" style="left:693.00px;top:55.70px;font-size:11px;line-height:13px;letter-spacing:-0.732px;color:#e6e6e6;font-family:'DejaVu Sans','Liberation Sans',sans-serif;">Global</span>
<svg class="b" style="left:735px;top:57.5px;" width="10" height="10" viewBox="0 0 10 10"><path d="M2 3.8 L5 6.8 L8 3.8" fill="none" stroke="#e6e6e6" stroke-width="1.3" stroke-linecap="round" stroke-linejoin="round"/></svg>
<div class="b" style="left:752.5px;top:52.5px;width:30.8px;height:19px;background:#282828;border-radius:4px;border:1px solid #444;"></div>
<svg class="b" style="left:756px;top:54px;" width="17" height="16" viewBox="0 0 17 16"><circle cx="5.6" cy="9.8" r="3.9" fill="none" stroke="#e0e0e0" stroke-width="1.2"/><circle cx="10.8" cy="6.2" r="3.9" fill="none" stroke="#e0e0e0" stroke-width="1.2"/><circle cx="8.2" cy="8" r="1.1" fill="#e0e0e0"/></svg>
<svg class="b" style="left:772.5px;top:57.5px;" width="10" height="10" viewBox="0 0 10 10"><path d="M2 3.8 L5 6.8 L8 3.8" fill="none" stroke="#e6e6e6" stroke-width="1.3" stroke-linecap="round" stroke-linejoin="round"/></svg>
<div class="b" style="left:789.5px;top:52.5px;width:19px;height:19px;background:#545454;border-radius:4px 0 0 4px;border:1px solid #444;border-right:none;"></div>
<div class="b" style="left:808.5px;top:52.5px;width:31.5px;height:19px;background:#282828;border-radius:0 4px 4px 0;border:1px solid #444;border-left:none;"></div>
<svg class="b" style="left:791px;top:54px;opacity:0.85;" width="16" height="16" viewBox="0 0 16 16"><path d="M3 9.5L8.2 4.3Q11.4 1.6 13.6 4.4Q15.4 7.4 12.6 9.8L8.6 13.6" fill="none" stroke="#b8b8b8" stroke-width="2.4"/><path d="M5.2 11.2L9.4 7Q10.6 6.2 11.2 7" fill="none" stroke="#545454" stroke-width="1"/></svg>
<svg class="b" style="left:810px;top:54px;" width="17" height="16" viewBox="0 0 17 16"><path d="M2 10.5H14.5M2 8V13M6.2 9V12M10.3 9V12M14.5 8V13" stroke="#e0e0e0" stroke-width="1.1" fill="none"/><rect x="12" y="2" width="3.4" height="3.4" fill="#e6e6e6"/></svg>
<svg class="b" style="left:829.5px;top:57.5px;" width="10" height="10" viewBox="0 0 10 10"><path d="M2 3.8 L5 6.8 L8 3.8" fill="none" stroke="#e6e6e6" stroke-width="1.3" stroke-linecap="round" stroke-linejoin="round"/></svg>
<div class="b" style="left:847px;top:52.5px;width:18.5px;height:19px;background:#545454;border-radius:4px 0 0 4px;border:1px solid #444;border-right:none;"></div>
<div class="b" style="left:865.5px;top:52.5px;width:31.5px;height:19px;background:#2c2c2c;border-radius:0 4px 4px 0;border:1px solid #393939;border-left:none;"></div>
<svg class="b" style="left:848px;top:54px;" width="16" height="16" viewBox="0 0 16 16"><circle cx="8" cy="8" r="5.6" fill="none" stroke="#b0b0b0" stroke-width="1.1"/><circle cx="8" cy="8" r="2" fill="#c0c0c0"/></svg>
<svg class="b" style="left:869px;top:54px;" width="16" height="16" viewBox="0 0 16 16"><path d="M1 13.5Q4.5 13.5 6 8Q7.5 2.5 8.3 2.5Q9.2 2.5 10.6 8Q12 13.5 15.5 13.5" fill="none" stroke="#c8c8c8" stroke-width="1.1"/></svg>
<svg class="b" style="left:886px;top:57.5px;" width="10" height="10" viewBox="0 0 10 10"><path d="M2 3.8 L5 6.8 L8 3.8" fill="none" stroke="#5a5a5a" stroke-width="1.3" stroke-linecap="round" stroke-linejoin="round"/></svg>
<div class="b" style="left:1330px;top:52.5px;width:30px;height:19px;background:#282828;border-radius:4px;border:1px solid #444;"></div>
<svg class="b" style="left:1332px;top:53px;" width="20" height="18" viewBox="0 0 20 18"><path d="M5.5 6.2Q10.5 0.6 16.5 6.2Q10.8 11.4 5.5 6.2Z" fill="#e6e6e6"/><circle cx="11" cy="5.6" r="2.6" fill="#282828"/><circle cx="11" cy="5.6" r="1.2" fill="#e6e6e6"/><path d="M2.2 8.2L9.6 11.4L6.2 12.4L5 16Z" fill="#e6e6e6"/></svg>
<svg class="b" style="left:1349px;top:57.5px;" width="10" height="10" viewBox="0 0 10 10"><path d="M2 3.8 L5 6.8 L8 3.8" fill="none" stroke="#e6e6e6" stroke-width="1.3" stroke-linecap="round" stroke-linejoin="round"/></svg>
<div class="b" style="left:1367px;top:52.5px;width:18.5px;height:19px;background:#4772b3;border-radius:4px 0 0 4px;"></div>
<div class="b" style="left:1385.5px;top:52.5px;width:19.5px;height:19px;background:#282828;border-radius:0 4px 4px 0;border:1px solid #444;border-left:none;"></div>
<svg class="b" style="left:1368px;top:53.5px;" width="17" height="17" viewBox="0 0 17 17"><path d="M1.5 4.5Q11 5 11.5 14.5" fill="none" stroke="#fff" stroke-width="1.2"/><path d="M5 12L13.5 3" stroke="#fff" stroke-width="1.2"/><path d="M10 2.2H14.3V6.5" fill="none" stroke="#fff" stroke-width="1.2"/><circle cx="4.2" cy="12.8" r="1.7" fill="#4772b3" stroke="#fff" stroke-width="1.1"/></svg>
<svg class="b" style="left:1390px;top:57.5px;" width="10" height="10" viewBox="0 0 10 10"><path d="M2 3.8 L5 6.8 L8 3.8" fill="none" stroke="#e6e6e6" stroke-width="1.3" stroke-linecap="round" stroke-linejoin="round"/></svg>
<div class="b" style="left:1412px;top:52.5px;width:18.5px;height:19px;background:#4772b3;border-radius:4px 0 0 4px;"></div>
<div class="b" style="left:1430.5px;top:52.5px;width:19.5px;height:19px;background:#282828;border-radius:0 4px 4px 0;border:1px solid #444;border-left:none;"></div>
<svg class="b" style="left:1413px;top:53.5px;" width="17" height="17" viewBox="0 0 17 17"><circle cx="7" cy="10" r="4.6" fill="none" stroke="#fff" stroke-width="1.2"/><circle cx="10.8" cy="6" r="4.4" fill="#fff"/><path d="M6.6 6.6Q8.6 6 9.6 7.6Q10.4 9.4 9.2 10.4" fill="none" stroke="#4772b3" stroke-width="1.1"/></svg>
<svg class="b" style="left:1435px;top:57.5px;" width="10" height="10" viewBox="0 0 10 10"><path d="M2 3.8 L5 6.8 L8 3.8" fill="none" stroke="#e6e6e6" stroke-width="1.3" stroke-linecap="round" stroke-linejoin="round"/></svg>
<div class="b" style="left:1457px;top:52.5px;width:18.5px;height:19px;background:#4b4b4b;border-radius:4px;border:1px solid #424242;"></div>
<svg class="b" style="left:1458px;top:54px;" width="16" height="16" viewBox="0 0 16 16"><path d="M5 3.5V2H14V11H12.5" fill="none" stroke="#d8d8d8" stroke-width="1.1"/><rect x="2" y="4.5" width="9.5" height="9.5" fill="none" stroke="#d8d8d8" stroke-width="1.1"/><path d="M5 8V10.5H6.5M8 10.5H9" stroke="#d8d8d8" stroke-width="1" fill="none"/></svg>
<div class="b" style="left:1482px;top:52.5px;width:18.5px;height:19px;background:#4b4b4b;border-radius:4px 0 0 4px;"></div>
<div class="b" style="left:1500.5px;top:52.5px;width:18.5px;height:19px;background:#4772b3;"></div>
<div class="b" style="left:1519.3px;top:52.5px;width:18.8px;height:19px;background:#4b4b4b;"></div>
<div class="b" style="left:1538.4px;top:52.5px;width:18.8px;height:19px;background:#4b4b4b;"></div>
<div class="b" style="left:1557.5px;top:52.5px;width:19.5px;height:19px;background:#282828;border-radius:0 4px 4px 0;border:1px solid #444;border-left:none;"></div>
<svg class="b" style="left:1483px;top:54px;" width="16" height="16" viewBox="0 0 16 16"><circle cx="8" cy="8" r="6" fill="none" stroke="#c8c8c8" stroke-width="1.1"/><path d="M2 8H14M8 2V14M3 5Q8 7 13 5M3 11Q8 9 13 11" fill="none" stroke="#c8c8c8" stroke-width="0.9"/></svg>
<svg class="b" style="left:1502px;top:54px;" width="16" height="16" viewBox="0 0 16 16"><circle cx="8" cy="8" r="6.2" fill="#fff"/></svg>
<svg class="b" style="left:1520.5px;top:54px;" width="16" height="16" viewBox="0 0 16 16"><circle cx="8" cy="8" r="6" fill="none" stroke="#c8c8c8" stroke-width="1.1"/><path d="M8 2A6 6 0 0 0 8 14V8L12.8 11.6A6 6 0 0 1 8 14Z" fill="#c8c8c8"/><path d="M8 2A6 6 0 0 0 3.2 11.6L8 8Z" fill="#c8c8c8"/></svg>
<svg class="b" style="left:1539.5px;top:54px;" width="16" height="16" viewBox="0 0 16 16"><circle cx="8" cy="8" r="6" fill="none" stroke="#c8c8c8" stroke-width="1.1"/><path d="M4.2 7Q4.6 4.4 7.2 4" fill="none" stroke="#c8c8c8" stroke-width="1"/><path d="M9 12.6L12.6 9M7 12.8L12.9 7" stroke="#999" stroke-width="0.8"/></svg>
<svg class="b" style="left:1562px;top:57.5px;" width="10" height="10" viewBox="0 0 10 10"><path d="M2 3.8 L5 6.8 L8 3.8" fill="none" stroke="#e6e6e6" stroke-width="1.3" stroke-linecap="round" stroke-linejoin="round"/></svg>
<div class="b" style="left:1517px;top:80px;width:61px;height:18px;background:#282828;border-radius:4px;border:1px solid #444;"></div>
<span class="t" style="left:1524.30px;top:82.70px;font-size:11px;line-height:13px;letter-spacing:-0.578px;color:#e6e6e6;font-family:'DejaVu Sans','Liberation Sans',sans-serif;">Options</span>
<svg class="b" style="left:1567px;top:84.5px;" width="10" height="10" viewBox="0 0 10 10"><path d="M2 3.8 L5 6.8 L8 3.8" fill="none" stroke="#e6e6e6" stroke-width="1.3" stroke-linecap="round" stroke-linejoin="round"/></svg>
<span class="t" style="left:45.40px;top:82.70px;font-size:11px;line-height:13px;letter-spacing:-0.584px;color:#c8c8c8;font-family:'DejaVu Sans','Liberation Sans',sans-serif;">Orientation:</span>
<div class="b" style="left:139.2px;top:80px;width:97.8px;height:18px;background:#282828;border-radius:4px;border:1px solid #444;"></div>
<svg class="b" style="left:142px;top:81px;" width="17" height="16" viewBox="0 0 17 16"><circle cx="5.6" cy="10.4" r="1.7" fill="#e0e0e0"/><path d="M5.6 7.5V2M8.5 10.4H14.5M3.8 12.2L1.6 14.4" stroke="#d0d0d0" stroke-width="1" fill="none"/><path d="M3.9 3.6L5.6 1.8L7.3 3.6M12.8 8.7L14.6 10.4L12.8 12.1M1.4 12.4V14.6H3.6" stroke="#d0d0d0" stroke-width="1" fill="none"/></svg>
<span class="t" style="left:164.60px;top:82.70px;font-size:11px;line-height:13px;letter-spacing:-0.685px;color:#e6e6e6;font-family:'DejaVu Sans','Liberation Sans',sans-serif;">Default</span>
<svg class="b" style="left:225.8px;top:84.5px;" width="10" height="10" viewBox="0 0 10 10"><path d="M2 3.8 L5 6.8 L8 3.8" fill="none" stroke="#e6e6e6" stroke-width="1.3" stroke-linecap="round" stroke-linejoin="round"/></svg>
<span class="t" style="left:250.60px;top:82.70px;font-size:11px;line-height:13px;letter-spacing:-0.805px;color:#c8c8c8;font-family:'DejaVu Sans','Liberation Sans',sans-serif;">Drag:</span>
<div class="b" style="left:287.5px;top:80px;width:72.5px;height:18px;background:#282828;border-radius:4px;border:1px solid #444;"></div>
<span class="t" style="left:295.40px;top:82.70px;font-size:11px;line-height:13px;letter-spacing:-0.528px;color:#e6e6e6;font-family:'DejaVu Sans','Liberation Sans',sans-serif;">Select Box</span>
<svg class="b" style="left:349px;top:84.5px;" width="10" height="10" viewBox="0 0 10 10"><path d="M2 3.8 L5 6.8 L8 3.8" fill="none" stroke="#e6e6e6" stroke-width="1.3" stroke-linecap="round" stroke-linejoin="round"/></svg>
<span class="t" style="left:65.30px;top:111.20px;font-size:11px;line-height:13px;letter-spacing:-0.486px;color:#f0f0f0;font-family:'DejaVu Sans','Liberation Sans',sans-serif;text-shadow:0 0 2px rgba(0,0,0,0.8);">User Perspective</span>
<span class="t" style="left:65.30px;top:128.90px;font-size:11px;line-height:13px;letter-spacing:-0.404px;color:#f0f0f0;font-family:'DejaVu Sans','Liberation Sans',sans-serif;text-shadow:0 0 2px rgba(0,0,0,0.8);">(1) Collection | BuckTop</span>
<div class="b" style="left:8.8px;top:109.6px;width:38.4px;height:33.7px;background:rgba(38,38,38,0.95);border-radius:4px 4px 0 0;"></div>
<div class="b" style="left:8.8px;top:144.2px;width:38.4px;height:33.7px;background:rgba(38,38,38,0.95);border-radius:0 0 4px 4px;"></div>
<div class="b" style="left:8.8px;top:185px;width:38.4px;height:33.7px;background:#4772b3;border-radius:4px 4px 0 0;"></div>
<div class="b" style="left:8.8px;top:219.4px;width:38.4px;height:33.7px;background:rgba(38,38,38,0.95);border-radius:0;"></div>
<div class="b" style="left:8.8px;top:254px;width:38.4px;height:33.7px;background:rgba(38,38,38,0.95);border-radius:0;"></div>
<div class="b" style="left:8.8px;top:288.6px;width:38.4px;height:33.7px;background:rgba(38,38,38,0.95);border-radius:0 0 4px 4px;"></div>
<div class="b" style="left:8.8px;top:329.6px;width:38.4px;height:33.7px;background:rgba(38,38,38,0.95);border-radius:4px 4px 0 0;"></div>
<div class="b" style="left:8.8px;top:364.2px;width:38.4px;height:33.7px;background:rgba(38,38,38,0.95);border-radius:0 0 4px 4px;"></div>
<div class="b" style="left:8.8px;top:405px;width:38.4px;height:33.7px;background:rgba(38,38,38,0.95);border-radius:4px;"></div>
<svg class="b" style="left:41.7px;top:137.8px;" width="4" height="4" viewBox="0 0 4 4"><path d="M4 0V4H0Z" fill="#8a8a8a"/></svg>
<svg class="b" style="left:41.7px;top:282.2px;" width="4" height="4" viewBox="0 0 4 4"><path d="M4 0V4H0Z" fill="#8a8a8a"/></svg>
<svg class="b" style="left:41.7px;top:357.8px;" width="4" height="4" viewBox="0 0 4 4"><path d="M4 0V4H0Z" fill="#8a8a8a"/></svg>
<svg class="b" style="left:41.7px;top:433.2px;" width="4" height="4" viewBox="0 0 4 4"><path d="M4 0V4H0Z" fill="#8a8a8a"/></svg>
<svg class="b" style="left:14px;top:112.7px;" width="28" height="28" viewBox="0 0 28 28"><rect x="3.5" y="3.5" width="21" height="21" fill="none" stroke="#e5a84a" stroke-width="1.3" stroke-dasharray="4.2 2.2"/><path d="M11 8.5L20.5 15L15.6 15.6L13.6 20Z" fill="#e6e6e6"/></svg>
<svg class="b" style="left:14px;top:147.2px;" width="28" height="28" viewBox="0 0 28 28"><circle cx="14" cy="14" r="11.2" fill="none" stroke="#e6e6e6" stroke-width="1.6"/><circle cx="14" cy="14" r="11.2" fill="none" stroke="#d04a4a" stroke-width="1.6" stroke-dasharray="4.4 4.4"/><path d="M14 6.5V11M14 17V21.5M6.5 14H11M17 14H21.5" stroke="#b0b0b0" stroke-width="1.5"/></svg>
<svg class="b" style="left:14px;top:188px;" width="28" height="28" viewBox="0 0 28 28"><path d="M14 3.5L17 8H11Z M14 24.5L17 20H11Z M3.5 14L8 11V17Z M24.5 14L20 11V17Z" fill="#fff"/><path d="M14 9V11.5M14 16.5V19M9 14H11.5M16.5 14H19" stroke="#fff" stroke-width="1.6"/></svg>
<svg class="b" style="left:14px;top:222.5px;" width="28" height="28" viewBox="0 0 28 28"><path d="M6 9.5A9.5 9.5 0 0 1 22 9.5" fill="none" stroke="#e6e6e6" stroke-width="1.3"/><path d="M6.5 19A9.5 9.5 0 0 0 21.5 19" fill="none" stroke="#e6e6e6" stroke-width="1.3"/><path d="M2.5 13H8.5L5.5 17.5Z M19.5 15H25.5L22.5 10.5Z" fill="#e6e6e6"/><path d="M14 10.5L17.5 14L14 17.5L10.5 14Z" fill="#bdbdbd"/></svg>
<svg class="b" style="left:14px;top:257px;" width="28" height="28" viewBox="0 0 28 28"><rect x="7.5" y="5" width="14.5" height="14.5" fill="none" stroke="#bdbdbd" stroke-width="1.3"/><rect x="5.5" y="13" width="9.5" height="9.5" fill="#e6e6e6"/><path d="M15.5 12.5L20 8M17 7.5H20.5V11" stroke="#e6e6e6" stroke-width="1.3" fill="none"/></svg>
<svg class="b" style="left:14px;top:291.7px;" width="28" height="28" viewBox="0 0 28 28"><circle cx="14" cy="14" r="9.3" fill="none" stroke="#e0e0e0" stroke-width="1.3" stroke-dasharray="9 5.6" stroke-dashoffset="4.5" transform="rotate(45 14 14)"/><rect x="10.2" y="10.2" width="7.6" height="7.6" fill="#e6e6e6"/><path d="M14 3L16.3 6.6H11.7Z M14 25L16.3 21.4H11.7Z M3 14L6.6 11.7V16.3Z M25 14L21.4 11.7V16.3Z" fill="#e6e6e6"/></svg>
<svg class="b" style="left:14px;top:332.7px;" width="28" height="28" viewBox="0 0 28 28"><path d="M6.5 17L17.5 5.5L21 8.8L10 20.5Z" fill="#e6e6e6"/><path d="M5.8 18L4.5 22L8.8 21Z" fill="#e6e6e6"/><path d="M17 6L20.5 9.4" stroke="#282828" stroke-width="1"/><path d="M5 23Q9 25.5 13 21.5Q17.5 17 22 20.5Q23.5 22 24.2 23.6" fill="none" stroke="#7fd9a8" stroke-width="1.4"/></svg>
<svg class="b" style="left:14px;top:367.3px;" width="28" height="28" viewBox="0 0 28 28"><path d="M6.5 3.5H9.5V24.5H6.5Z" fill="#e6e6e6"/><path d="M6.5 21.5H25V24.5H6.5Z" fill="#e6e6e6"/><path d="M10.5 10.5Q20.5 11.5 22 20.5H10.5Z" fill="#8fdcae"/><path d="M11.5 8.5Q22.5 9.5 24 20.5" fill="none" stroke="#8fdcae" stroke-width="1.2"/><path d="M7.5 6H9M7.5 9H9M7.5 12H9M7.5 15H9M7.5 18H9M12 22.5V24M15 22.5V24M18 22.5V24M21 22.5V24" stroke="#282828" stroke-width="0.9"/></svg>
<svg class="b" style="left:14px;top:408px;" width="28" height="28" viewBox="0 0 28 28"><path d="M3 6.2H10M6.5 2.7V9.7" stroke="#8fdcae" stroke-width="2"/><path d="M8.5 12.5H20.5V24.5H8.5Z M8.5 12.5L13 8.5H25L20.5 12.5M25 8.5V20.5L20.5 24.5" fill="none" stroke="#8fdcae" stroke-width="1.3" stroke-linejoin="round"/></svg>
<svg class="b" style="left:1495px;top:110px;" width="90" height="80" viewBox="1495 110 90 80"><circle cx="1516.7" cy="138.3" r="6.6" fill="#6b3540" fill-opacity="0.75" stroke="#c23a52" stroke-width="1.3"/><circle cx="1508.5" cy="159.7" r="7.4" fill="#53702a" fill-opacity="0.9" stroke="#87c31f" stroke-width="1.4"/><circle cx="1535" cy="179" r="6.9" fill="#3a557a" fill-opacity="0.85" stroke="#3a7acb" stroke-width="1.3"/><path d="M1534.6 150.5L1561.5 142.4" stroke="#6a9e1c" stroke-width="2.2"/><path d="M1534.6 150.5L1535 123" stroke="#2f86e8" stroke-width="2.2"/><path d="M1534.6 150.5L1552.9 163.8" stroke="#f03a58" stroke-width="2.2"/><circle cx="1535" cy="123" r="8.2" fill="#2f86e8"/><circle cx="1561.5" cy="142.4" r="8" fill="#6a9e1c"/><circle cx="1552.9" cy="163.8" r="8.5" fill="#f03a58"/><text x="1535" y="126.8" font-family="DejaVu Sans,Liberation Sans,sans-serif" font-size="10.5" text-anchor="middle" fill="#101010">Z</text><text x="1561.5" y="146.2" font-family="DejaVu Sans,Liberation Sans,sans-serif" font-size="10.5" text-anchor="middle" fill="#101010">Y</text><text x="1552.9" y="167.6" font-family="DejaVu Sans,Liberation Sans,sans-serif" font-size="10.5" text-anchor="middle" fill="#101010">X</text></svg>
<div class="b" style="left:1549.4px;top:192px;width:27px;height:27px;background:rgba(34,34,34,0.5);border-radius:50%;"></div>
<div class="b" style="left:1549.4px;top:222px;width:27px;height:27px;background:rgba(34,34,34,0.5);border-radius:50%;"></div>
<div class="b" style="left:1549.4px;top:252.1px;width:27px;height:27px;background:rgba(34,34,34,0.5);border-radius:50%;"></div>
<div class="b" style="left:1549.4px;top:282.5px;width:27px;height:27px;background:rgba(34,34,34,0.5);border-radius:50%;"></div>
<svg class="b" style="left:1552.9px;top:195.5px;" width="20" height="20" viewBox="0 0 20 20"><circle cx="11.6" cy="8" r="5.4" fill="#e6e6e6"/><path d="M7.6 12L3 16.6" stroke="#e6e6e6" stroke-width="2" stroke-linecap="round"/><path d="M11.6 5V11M8.6 8H14.6" stroke="#2a2a2a" stroke-width="1.1"/></svg>
<svg class="b" style="left:1552.9px;top:225.5px;" width="20" height="20" viewBox="0 0 20 20"><path d="M6.2 10.5V5.2Q6.9 4.2 7.6 5.2V9.5L8.2 9.5V3.4Q9 2.4 9.8 3.4V9.3H10.4V3Q11.2 2 12 3V9.5H12.6V4.6Q13.4 3.7 14.2 4.6V11.5Q14.2 14 12.8 15.8Q11.6 17.4 9.6 17.4Q7.4 17.4 6.2 15.6L2.8 11Q2.6 9.8 3.8 9.8Q4.6 9.8 5.4 10.8Z" fill="#e6e6e6"/></svg>
<svg class="b" style="left:1552.9px;top:255.6px;" width="20" height="20" viewBox="0 0 20 20"><circle cx="6.3" cy="6" r="3" fill="#e6e6e6"/><circle cx="12" cy="5.6" r="3.5" fill="#e6e6e6"/><circle cx="6.3" cy="6" r="0.9" fill="#2a2a2a"/><circle cx="12" cy="5.6" r="1" fill="#2a2a2a"/><rect x="4.5" y="9.6" width="9.5" height="6.4" rx="0.8" fill="#e6e6e6"/><path d="M14.6 12.6L18 10.4V15.6Z M2 11H4V13H2Z" fill="#e6e6e6"/></svg>
<svg class="b" style="left:1552.9px;top:286px;" width="20" height="20" viewBox="0 0 20 20"><path d="M6 4H14L17.2 16H2.8Z" fill="none" stroke="#e6e6e6" stroke-width="1.5"/><path d="M8.6 4L7.4 16M11.4 4L12.6 16M5 8H15M4 11.6H16" stroke="#e6e6e6" stroke-width="1.3"/></svg>
<div class="b" style="left:1576.5px;top:115.5px;width:9px;height:14px;background:rgba(34,34,34,0.8);border-radius:4px 0 0 4px;"></div>
<svg class="b" style="left:1576.5px;top:117.5px;" width="8" height="10" viewBox="0 0 8 10"><path d="M6.2 1.4L2.4 5L6.2 8.6" fill="none" stroke="#b0b0b0" stroke-width="1.1"/></svg>
<div id="outl"></div>
<div class="b" style="left:1588px;top:50px;width:332px;height:26px;background:#282828;border-radius:5px 5px 0 0;"></div>
<div class="b" style="left:1588px;top:97px;width:332px;height:20px;background:#2b2b2b;"></div>
<div class="b" style="left:1588px;top:137px;width:332px;height:20px;background:#2b2b2b;"></div>
<div class="b" style="left:1588px;top:177px;width:332px;height:20px;background:#2b2b2b;"></div>
<div class="b" style="left:1588px;top:217px;width:332px;height:20px;background:#2b2b2b;"></div>
<div class="b" style="left:1588px;top:257px;width:332px;height:20px;background:#2b2b2b;"></div>
<div class="b" style="left:1588px;top:297px;width:332px;height:20px;background:#2b2b2b;"></div>
<div class="b" style="left:1588px;top:337px;width:332px;height:20px;background:#2b2b2b;"></div>
<div class="b" style="left:1596.5px;top:52.5px;width:31px;height:19px;background:#282828;border-radius:4px;border:1px solid #444;"></div>
<svg class="b" style="left:1600px;top:54.5px;" width="16" height="15" viewBox="0 0 16 15"><rect x="1" y="1" width="4.6" height="3.2" fill="#e0e0e0"/><path d="M3 4.2V12H7M3 7.2H7" fill="none" stroke="#d0d0d0" stroke-width="1.1"/><rect x="7.4" y="5.4" width="6.6" height="3" fill="#e0e0e0"/><rect x="7.4" y="10.4" width="6.6" height="3" fill="#e0e0e0"/></svg>
<svg class="b" style="left:1616.5px;top:57.5px;" width="10" height="10" viewBox="0 0 10 10"><path d="M2 3.8 L5 6.8 L8 3.8" fill="none" stroke="#e6e6e6" stroke-width="1.3" stroke-linecap="round" stroke-linejoin="round"/></svg>
<div class="b" style="left:1633.5px;top:52.5px;width:31px;height:19px;background:#282828;border-radius:4px;border:1px solid #444;"></div>
<svg class="b" style="left:1637px;top:54px;" width="16" height="16" viewBox="0 0 16 16"><path d="M2.5 5V13.5H11" fill="none" stroke="#e0e0e0" stroke-width="1"/><path d="M4.5 3V11.5H13" fill="none" stroke="#e0e0e0" stroke-width="1"/><rect x="6.2" y="1.5" width="8.3" height="8.3" fill="#e0e0e0"/><path d="M7 8.8L9.3 5.6L11 7.6L12 6.6L13.7 8.8Z" fill="#222"/><circle cx="12.3" cy="3.8" r="0.9" fill="#222"/></svg>
<svg class="b" style="left:1653.5px;top:57.5px;" width="10" height="10" viewBox="0 0 10 10"><path d="M2 3.8 L5 6.8 L8 3.8" fill="none" stroke="#e6e6e6" stroke-width="1.3" stroke-linecap="round" stroke-linejoin="round"/></svg>
<div class="b" style="left:1687.3px;top:52.5px;width:110.5px;height:19px;background:#1d1d1d;border-radius:4px;border:1px solid #444;"></div>
<svg class="b" style="left:1691px;top:54.5px;" width="15" height="15" viewBox="0 0 15 15"><circle cx="8.6" cy="5.8" r="4" fill="none" stroke="#e0e0e0" stroke-width="1.2"/><path d="M5.8 8.8L1.6 13.2" stroke="#e0e0e0" stroke-width="1.4" stroke-linecap="round"/></svg>
<div class="b" style="left:1855.5px;top:52.5px;width:30.5px;height:19px;background:#282828;border-radius:4px;border:1px solid #444;"></div>
<svg class="b" style="left:1858px;top:54.5px;" width="15" height="15" viewBox="0 0 15 15"><path d="M1.2 1.6H13L8.4 7.4V13L5.8 11.2V7.4Z" fill="none" stroke="#e0e0e0" stroke-width="1.2" stroke-linejoin="round"/></svg>
<svg class="b" style="left:1874.5px;top:57.5px;" width="10" height="10" viewBox="0 0 10 10"><path d="M2 3.8 L5 6.8 L8 3.8" fill="none" stroke="#e6e6e6" stroke-width="1.3" stroke-linecap="round" stroke-linejoin="round"/></svg>
<div class="b" style="left:1892.3px;top:52.5px;width:19px;height:19px;background:#545454;border-radius:4px;border:1px solid #444;"></div>
<svg class="b" style="left:1894px;top:54px;" width="16" height="16" viewBox="0 0 16 16"><path d="M1.5 3.4H8.5M2.2 5V13.4H11.6V8.6M5.2 8.6H8.4" fill="none" stroke="#d8d8d8" stroke-width="1.1"/><circle cx="11.6" cy="4.2" r="3" fill="#e6e6e6"/><path d="M11.6 2.4V6M9.8 4.2H13.4" stroke="#444" stroke-width="0.9"/></svg>
<svg class="b" style="left:1611px;top:79.2px;" width="14" height="14" viewBox="0 0 14 14"><path d="M0.5 1H13.5V4.2H0.5Z" fill="#e0e0e0"/><path d="M1.3 5.2H12.7V13H1.3Z" fill="#e0e0e0"/><path d="M4.6 7.2H9.4V8.8H4.6Z" fill="#282828"/></svg>
<span class="t" style="left:1632.20px;top:80.70px;font-size:11px;line-height:13px;letter-spacing:-0.509px;color:#d2d2d2;font-family:'DejaVu Sans','Liberation Sans',sans-serif;">Scene Collection</span>
<svg class="b" style="left:1613px;top:103.5px;" width="9" height="8" viewBox="0 0 9 8"><path d="M0.8 1H8.2L4.5 7Z" fill="#c0c0c0"/></svg>
<div class="b" style="left:1628.7px;top:97.2px;width:19px;height:18.4px;background:#484848;border-radius:4px;border:1px solid #5a5a5a;"></div>
<svg class="b" style="left:1631.2px;top:99.2px;" width="14" height="14" viewBox="0 0 14 14"><path d="M0.5 1H13.5V4.2H0.5Z" fill="#e0e0e0"/><path d="M1.3 5.2H12.7V13H1.3Z" fill="#e0e0e0"/><path d="M4.6 7.2H9.4V8.8H4.6Z" fill="#282828"/></svg>
<span class="t" style="left:1652.60px;top:100.70px;font-size:11px;line-height:13px;letter-spacing:-0.481px;color:#d2d2d2;font-family:'DejaVu Sans','Liberation Sans',sans-serif;">Collection</span>
<div class="b" style="left:1617px;top:121px;width:1px;height:70px;background:#4e4e4e;"></div>
<svg class="b" style="left:1634.5px;top:122px;" width="8" height="9" viewBox="0 0 8 9"><path d="M1 0.6V7.8L7 4.2Z" fill="#c0c0c0"/></svg>
<svg class="b" style="left:1634.5px;top:142px;" width="8" height="9" viewBox="0 0 8 9"><path d="M1 0.6V7.8L7 4.2Z" fill="#c0c0c0"/></svg>
<svg class="b" style="left:1634.5px;top:162px;" width="8" height="9" viewBox="0 0 8 9"><path d="M1 0.6V7.8L7 4.2Z" fill="#c0c0c0"/></svg>
<svg class="b" style="left:1634.5px;top:182px;" width="8" height="9" viewBox="0 0 8 9"><path d="M1 0.6V7.8L7 4.2Z" fill="#c0c0c0"/></svg>
<div class="b" style="left:1648.8px;top:117px;width:19px;height:18.6px;background:#484848;border-radius:4px;border:1px solid #5a5a5a;"></div>
<svg class="b" style="left:1650.8px;top:118.7px;" width="15" height="15" viewBox="0 0 15 15"><path d="M1 1.6H14L7.5 14Z" fill="#e39a5c"/><path d="M4.9 4.1H10.1L7.5 9Z" fill="#282828"/></svg>
<span class="t" style="left:1672.40px;top:120.70px;font-size:11px;line-height:13px;letter-spacing:-0.472px;color:#d2d2d2;font-family:'DejaVu Sans','Liberation Sans',sans-serif;">BuckTop</span>
<svg class="b" style="left:1736.7px;top:118.7px;" width="15" height="15" viewBox="0 0 15 15"><path d="M9.2 1.2Q12.4 0.6 13.8 3.4L11.2 5L10 3.6L9.4 5.8L11.4 7Q9.6 8.4 7.6 7.6L3.4 13.2Q2.2 14.2 1.2 13Q0.6 11.8 1.8 11L7 6.4Q6.2 2.6 9.2 1.2Z" fill="none" stroke="#6c8fe0" stroke-width="1.2" stroke-linejoin="round"/></svg>
<svg class="b" style="left:1756.5px;top:118.7px;" width="15" height="15" viewBox="0 0 15 15"><path d="M2.2 2.6H12.8L7.5 12.6Z" fill="none" stroke="#10cda0" stroke-width="1.1"/><rect x="0.8" y="1.2" width="2.8" height="2.8" fill="#282828" stroke="#10cda0" stroke-width="1"/><rect x="11.4" y="1.2" width="2.8" height="2.8" fill="#282828" stroke="#10cda0" stroke-width="1"/><rect x="6.1" y="11.2" width="2.8" height="2.8" fill="#282828" stroke="#10cda0" stroke-width="1"/></svg>
<svg class="b" style="left:1650px;top:138.7px;" width="16" height="15" viewBox="0 0 16 15"><circle cx="4.2" cy="4.2" r="3.2" fill="#e39a5c"/><circle cx="10.6" cy="3.8" r="3.6" fill="#e39a5c"/><circle cx="4.2" cy="4.2" r="1" fill="#282828"/><circle cx="10.6" cy="3.8" r="1.1" fill="#282828"/><rect x="2.6" y="7.8" width="9.6" height="6" rx="0.8" fill="#e39a5c"/><path d="M12.8 10.8L15.6 8.8V13.6Z M0.6 9H2V11H0.6Z" fill="#e39a5c"/></svg>
<span class="t" style="left:1672.40px;top:140.70px;font-size:11px;line-height:13px;letter-spacing:-0.761px;color:#d2d2d2;font-family:'DejaVu Sans','Liberation Sans',sans-serif;">Camera</span>
<div class="b" style="left:1731.4px;top:137px;width:19.5px;height:18.6px;background:#484848;border-radius:4px;border:1px solid #5a5a5a;"></div>
<svg class="b" style="left:1733.2px;top:138.7px;" width="16" height="15" viewBox="0 0 16 15"><path d="M2.2 7.4Q0.6 4.2 3.4 2.8Q5.6 2.2 7 4Q8.4 1 11.4 1.4Q14.4 2.4 13.6 5.6Q13 7.4 11.2 7.6Z" fill="none" stroke="#10cda0" stroke-width="1.1"/><circle cx="10.8" cy="4.4" r="0.9" fill="#10cda0"/><rect x="4.4" y="9" width="7.4" height="4.6" fill="none" stroke="#10cda0" stroke-width="1.1"/><path d="M12.4 11.4L15 9.6V13.4Z M1.4 9.6H3V11.6H1.4Z" fill="#10cda0"/></svg>
<svg class="b" style="left:1650.8px;top:158.7px;" width="15" height="15" viewBox="0 0 15 15"><path d="M1 1.6H14L7.5 14Z" fill="#e39a5c"/><path d="M4.9 4.1H10.1L7.5 9Z" fill="#282828"/></svg>
<span class="t" style="left:1672.40px;top:160.70px;font-size:11px;line-height:13px;letter-spacing:-0.582px;color:#d2d2d2;font-family:'DejaVu Sans','Liberation Sans',sans-serif;">keycap-std</span>
<svg class="b" style="left:1748.8px;top:158.7px;" width="15" height="15" viewBox="0 0 15 15"><path d="M2.2 2.6H12.8L7.5 12.6Z" fill="none" stroke="#10cda0" stroke-width="1.1"/><rect x="0.8" y="1.2" width="2.8" height="2.8" fill="#282828" stroke="#10cda0" stroke-width="1"/><rect x="11.4" y="1.2" width="2.8" height="2.8" fill="#282828" stroke="#10cda0" stroke-width="1"/><rect x="6.1" y="11.2" width="2.8" height="2.8" fill="#282828" stroke="#10cda0" stroke-width="1"/></svg>
<svg class="b" style="left:1650.8px;top:178.2px;" width="15" height="17" viewBox="0 0 15 17"><path d="M7.5 1Q13 1 13 6.4Q13 8.8 11 10.4V11.6H4V10.4Q2 8.8 2 6.4Q2 1 7.5 1Z" fill="#e39a5c"/><path d="M4.6 12.6H10.4M5 14.2H10M6.6 15.8H8.4" stroke="#e39a5c" stroke-width="1.1"/><path d="M5.4 6.4H9.6M6 6.6V9.4M9 6.6V9.4" stroke="#282828" stroke-width="1.1" fill="none"/></svg>
<span class="t" style="left:1672.40px;top:180.70px;font-size:11px;line-height:13px;letter-spacing:-0.591px;color:#d2d2d2;font-family:'DejaVu Sans','Liberation Sans',sans-serif;">Light</span>
<svg class="b" style="left:1719.5px;top:178.2px;" width="14" height="17" viewBox="0 0 14 17"><path d="M4.4 12.4A6 6 0 1 1 9.6 12.4" fill="none" stroke="#10cda0" stroke-width="1.1"/><circle cx="7" cy="7.4" r="1.3" fill="#10cda0"/><path d="M7 9V12.6M7 14V15.6" stroke="#10cda0" stroke-width="1.1"/></svg>
<svg class="b" style="left:1857px;top:101.8px;" width="10.6" height="10.6" viewBox="0 0 10.6 10.6"><rect x="0" y="0" width="10.6" height="10.6" rx="1" fill="#e6e6e6"/><path d="M2.2 5.4L4.4 7.8L8.6 2.8" fill="none" stroke="#1d1d1d" stroke-width="1.5"/></svg>
<svg class="b" style="left:1875.6px;top:101.5px;" width="14" height="11" viewBox="0 0 14 11"><path d="M0.4 5.6Q7 -2.6 13.6 5.6Q7 13.4 0.4 5.6Z" fill="#e0e0e0"/><circle cx="7" cy="5.3" r="3" fill="#282828"/><circle cx="7" cy="5.3" r="1.5" fill="#e0e0e0"/></svg>
<svg class="b" style="left:1895.8px;top:101px;" width="14" height="12" viewBox="0 0 14 12"><path d="M0.5 2.6H3.4L4.6 0.8H9.4L10.6 2.6H13.5V11.4H0.5Z" fill="#e0e0e0"/><circle cx="7" cy="6.8" r="3.1" fill="#282828"/><circle cx="7" cy="6.8" r="1.9" fill="none" stroke="#e0e0e0" stroke-width="0.9"/></svg>
<svg class="b" style="left:1875.6px;top:121.5px;" width="14" height="11" viewBox="0 0 14 11"><path d="M0.4 5.6Q7 -2.6 13.6 5.6Q7 13.4 0.4 5.6Z" fill="#e0e0e0"/><circle cx="7" cy="5.3" r="3" fill="#282828"/><circle cx="7" cy="5.3" r="1.5" fill="#e0e0e0"/></svg>
<svg class="b" style="left:1895.8px;top:121px;" width="14" height="12" viewBox="0 0 14 12"><path d="M0.5 2.6H3.4L4.6 0.8H9.4L10.6 2.6H13.5V11.4H0.5Z" fill="#e0e0e0"/><circle cx="7" cy="6.8" r="3.1" fill="#282828"/><circle cx="7" cy="6.8" r="1.9" fill="none" stroke="#e0e0e0" stroke-width="0.9"/></svg>
<svg class="b" style="left:1875.6px;top:141.5px;" width="14" height="11" viewBox="0 0 14 11"><path d="M0.4 5.6Q7 -2.6 13.6 5.6Q7 13.4 0.4 5.6Z" fill="#e0e0e0"/><circle cx="7" cy="5.3" r="3" fill="#282828"/><circle cx="7" cy="5.3" r="1.5" fill="#e0e0e0"/></svg>
<svg class="b" style="left:1895.8px;top:141px;" width="14" height="12" viewBox="0 0 14 12"><path d="M0.5 2.6H3.4L4.6 0.8H9.4L10.6 2.6H13.5V11.4H0.5Z" fill="#e0e0e0"/><circle cx="7" cy="6.8" r="3.1" fill="#282828"/><circle cx="7" cy="6.8" r="1.9" fill="none" stroke="#e0e0e0" stroke-width="0.9"/></svg>
<svg class="b" style="left:1875.6px;top:161.5px;" width="14" height="11" viewBox="0 0 14 11"><path d="M0.4 5.6Q7 -2.6 13.6 5.6Q7 13.4 0.4 5.6Z" fill="#e0e0e0"/><circle cx="7" cy="5.3" r="3" fill="#282828"/><circle cx="7" cy="5.3" r="1.5" fill="#e0e0e0"/></svg>
<svg class="b" style="left:1895.8px;top:161px;" width="14" height="12" viewBox="0 0 14 12"><path d="M0.5 2.6H3.4L4.6 0.8H9.4L10.6 2.6H13.5V11.4H0.5Z" fill="#e0e0e0"/><circle cx="7" cy="6.8" r="3.1" fill="#282828"/><circle cx="7" cy="6.8" r="1.9" fill="none" stroke="#e0e0e0" stroke-width="0.9"/></svg>
<svg class="b" style="left:1875.6px;top:181.5px;" width="14" height="11" viewBox="0 0 14 11"><path d="M0.4 5.6Q7 -2.6 13.6 5.6Q7 13.4 0.4 5.6Z" fill="#e0e0e0"/><circle cx="7" cy="5.3" r="3" fill="#282828"/><circle cx="7" cy="5.3" r="1.5" fill="#e0e0e0"/></svg>
<svg class="b" style="left:1895.8px;top:181px;" width="14" height="12" viewBox="0 0 14 12"><path d="M0.5 2.6H3.4L4.6 0.8H9.4L10.6 2.6H13.5V11.4H0.5Z" fill="#e0e0e0"/><circle cx="7" cy="6.8" r="3.1" fill="#282828"/><circle cx="7" cy="6.8" r="1.9" fill="none" stroke="#e0e0e0" stroke-width="0.9"/></svg>
<div id="props"></div>
<div class="b" style="left:1588px;top:388px;width:28px;height:630px;background:#1d1d1d;border-radius:0 0 0 5px;"></div>
<div class="b" style="left:1596.6px;top:365.5px;width:31.2px;height:19px;background:#282828;border-radius:4px;border:1px solid #444;"></div>
<svg class="b" style="left:1600px;top:367.5px;" width="14" height="15" viewBox="0 0 14 15"><rect x="0.6" y="1" width="12.8" height="5.6" rx="2.8" fill="#e6e6e6"/><rect x="0.6" y="8.4" width="12.8" height="5.6" rx="2.8" fill="#e6e6e6"/><path d="M7.4 2.2H10.6Q12.2 2.2 12.2 3.8Q12.2 5.4 10.6 5.4H7.4Z" fill="#282828"/><path d="M8.4 9.6H10.6Q12.2 9.6 12.2 11.2Q12.2 12.8 10.6 12.8H8.4Z" fill="#282828"/></svg>
<svg class="b" style="left:1616.6px;top:370.5px;" width="10" height="10" viewBox="0 0 10 10"><path d="M2.2 3.9 L5 6.7 L7.8 3.9" fill="none" stroke="#e6e6e6" stroke-width="1.3" stroke-linecap="round" stroke-linejoin="round"/></svg>
<div class="b" style="left:1699.5px;top:365.5px;width:110px;height:19px;background:#1d1d1d;border-radius:4px;border:1px solid #444;"></div>
<svg class="b" style="left:1703px;top:367.5px;" width="15" height="15" viewBox="0 0 15 15"><circle cx="8.6" cy="5.8" r="4" fill="none" stroke="#e0e0e0" stroke-width="1.2"/><path d="M5.8 8.8L1.6 13.2" stroke="#e0e0e0" stroke-width="1.4" stroke-linecap="round"/></svg>
<div class="b" style="left:1892.8px;top:365.5px;width:19px;height:19px;background:#282828;border-radius:4px;border:1px solid #444;"></div>
<svg class="b" style="left:1897.3px;top:370.5px;" width="10" height="10" viewBox="0 0 10 10"><path d="M2 3.8 L5 6.8 L8 3.8" fill="none" stroke="#e6e6e6" stroke-width="1.3" stroke-linecap="round" stroke-linejoin="round"/></svg>
<div class="b" style="left:1590px;top:644.5px;width:26px;height:28px;background:#303030;border-radius:4px 0 0 4px;"></div>
<svg class="b" style="left:1594.9px;top:401.6px;" width="16" height="16" viewBox="0 0 16 16"><path d="M3.2 1V8" stroke="#c8c8c8" stroke-width="1.2"/><path d="M1.4 9.4Q3.2 8 5 9.4V13.4Q3.2 15.4 1.4 13.4Z" fill="#9a9a9a"/><path d="M9 1.4V4.6Q9 6.4 10.6 6.8V14Q11.4 15 12.2 14V6.8Q13.8 6.4 13.8 4.6V1.4" fill="none" stroke="#c8c8c8" stroke-width="1.3" stroke-linejoin="round"/></svg>
<svg class="b" style="left:1594.9px;top:437px;" width="16" height="16" viewBox="0 0 16 16"><path d="M1.5 5H14.5V14H1.5Z M4 5V3H8V5" fill="none" stroke="#c8c8c8" stroke-width="1.2"/><path d="M4 8H10M4 10.6H10" stroke="#c8c8c8" stroke-width="1.1"/><rect x="11.6" y="7.4" width="1.8" height="4" fill="#c8c8c8"/><path d="M11.5 2.6L13.5 1.6" stroke="#c8c8c8" stroke-width="1"/></svg>
<svg class="b" style="left:1594.9px;top:464.9px;" width="16" height="16" viewBox="0 0 16 16"><path d="M1 2H15V6.4H1Z" fill="#c8c8c8"/><path d="M3 7.4H13" stroke="#c8c8c8" stroke-width="1"/><path d="M4.2 8.4H11.8V15H4.2Z" fill="none" stroke="#c8c8c8" stroke-width="1.2"/><path d="M5.4 13.6L8.2 10L10.6 13.6Z" fill="#c8c8c8"/></svg>
<svg class="b" style="left:1594.9px;top:493.8px;" width="16" height="16" viewBox="0 0 16 16"><path d="M1.6 5V14.4H11" fill="none" stroke="#c8c8c8" stroke-width="1"/><path d="M3.6 3V12.4H13" fill="none" stroke="#c8c8c8" stroke-width="1"/><rect x="5.6" y="1" width="9.4" height="9.4" fill="none" stroke="#c8c8c8" stroke-width="1.2"/><path d="M6.8 9.4L9.4 5.6L11.2 8L12.2 7L13.8 9.4Z" fill="#c8c8c8"/><circle cx="12.6" cy="3.6" r="0.9" fill="#c8c8c8"/></svg>
<svg class="b" style="left:1594.9px;top:521.6px;" width="16" height="16" viewBox="0 0 16 16"><path d="M4.4 1.6L7 8.6Q7.6 11.4 4.4 11.4Q1.4 11.4 1.8 8.6Z" fill="#a8a8a8"/><circle cx="10.4" cy="10.8" r="3.2" fill="none" stroke="#c8c8c8" stroke-width="1.2"/><circle cx="12.4" cy="3.8" r="1.7" fill="#c8c8c8"/></svg>
<svg class="b" style="left:1594.9px;top:549.8px;" width="16" height="16" viewBox="0 0 16 16"><circle cx="8" cy="8.4" r="6" fill="none" stroke="#d0586a" stroke-width="1.3"/><path d="M4 5.6Q6 4.4 7.6 5.6Q8.4 7.6 6.6 8.4Q5 9 4.6 11M9 9.6Q11.6 9 12.4 10.4Q11.4 12.6 9.6 12Z" fill="#d0586a"/><path d="M1.2 13.6Q8 11 15 2.4" fill="none" stroke="#d0586a" stroke-width="1.1"/></svg>
<svg class="b" style="left:1594.9px;top:586px;" width="16" height="16" viewBox="0 0 16 16"><path d="M1.4 1.8H14.6V5H1.4Z" fill="none" stroke="#e0e0e0" stroke-width="1.2"/><path d="M2.6 6H13.4V14.4H2.6Z" fill="none" stroke="#e0e0e0" stroke-width="1.2"/><path d="M5.8 8.6H10.2" stroke="#e0e0e0" stroke-width="1.4"/></svg>
<svg class="b" style="left:1594.9px;top:621.4px;" width="16" height="16" viewBox="0 0 16 16"><rect x="4.4" y="4.4" width="7.2" height="7.2" fill="#e39a5c"/><path d="M1.5 4.5V1.5H4.5M11.5 1.5H14.5V4.5M14.5 11.5V14.5H11.5M4.5 14.5H1.5V11.5" stroke="#e39a5c" stroke-width="1.2" fill="none"/></svg>
<svg class="b" style="left:1594.9px;top:650.3px;" width="16" height="16" viewBox="0 0 16 16"><path d="M9.8 1.4Q13.2 0.8 14.6 3.8L11.8 5.4L10.6 4L10 6.2L12 7.4Q10.2 9 8 8.2L3.6 14Q2.4 15 1.4 13.8Q0.8 12.6 2 11.8L7.4 7Q6.6 2.8 9.8 1.4Z" fill="#6fa0f0"/></svg>
<svg class="b" style="left:1594.9px;top:678px;" width="16" height="16" viewBox="0 0 16 16"><circle cx="3.2" cy="3" r="1.8" fill="#5f8fe0"/><circle cx="12.6" cy="5" r="1.5" fill="#5f8fe0"/><circle cx="11.4" cy="13" r="1.5" fill="#5f8fe0"/><circle cx="3.4" cy="12" r="1.2" fill="#5f8fe0"/><path d="M3.2 3L12.6 5M3.2 3L11.4 13M3.2 3L3.4 12" stroke="#5f8fe0" stroke-width="1"/></svg>
<svg class="b" style="left:1594.9px;top:705.7px;" width="16" height="16" viewBox="0 0 16 16"><path d="M11.6 3.4A6 6 0 1 0 13.6 10" fill="none" stroke="#5f8fe0" stroke-width="1.3"/><circle cx="8.2" cy="8.2" r="2.2" fill="#5f8fe0"/><circle cx="13" cy="5.4" r="1.2" fill="#5f8fe0"/></svg>
<svg class="b" style="left:1594.9px;top:734.6px;" width="16" height="16" viewBox="0 0 16 16"><path d="M1.6 10.4Q1.6 7 5 5.6L10.4 2.6Q13.6 1.4 14.6 4.4Q15 7 12.6 8.2L8.4 12.6Q5.4 15 2.8 13Q1.6 12 1.6 10.4Z" fill="none" stroke="#5f8fe0" stroke-width="1.3"/><circle cx="5.4" cy="10" r="2" fill="none" stroke="#5f8fe0" stroke-width="1.2"/><circle cx="11.6" cy="5.2" r="1.2" fill="#5f8fe0"/></svg>
<svg class="b" style="left:1594.9px;top:762px;" width="16" height="16" viewBox="0 0 16 16"><path d="M2.6 3H13.4L8 13.4Z" fill="none" stroke="#10cda0" stroke-width="1.2"/><rect x="1" y="1.4" width="3.2" height="3.2" fill="#1d1d1d" stroke="#10cda0" stroke-width="1.1"/><rect x="11.8" y="1.4" width="3.2" height="3.2" fill="#1d1d1d" stroke="#10cda0" stroke-width="1.1"/><rect x="6.4" y="11.6" width="3.2" height="3.2" fill="#1d1d1d" stroke="#10cda0" stroke-width="1.1"/></svg>
<svg class="b" style="left:1594.9px;top:789.6px;" width="16" height="16" viewBox="0 0 16 16"><circle cx="8" cy="8" r="6.6" fill="#d0586a"/><path d="M8 8V1.4A6.6 6.6 0 0 1 14.6 8Z" fill="#1d1d1d"/><path d="M8 8H1.4A6.6 6.6 0 0 0 8 14.6Z" fill="#8a3a46"/></svg>
<svg class="b" style="left:1594.9px;top:825.8px;" width="16" height="16" viewBox="0 0 16 16"><rect x="1" y="1" width="3.5" height="3.5" fill="#d0586a"/><rect x="1" y="4.5" width="3.5" height="3.5" fill="#7a3440"/><rect x="1" y="8" width="3.5" height="3.5" fill="#d0586a"/><rect x="1" y="11.5" width="3.5" height="3.5" fill="#7a3440"/><rect x="4.5" y="1" width="3.5" height="3.5" fill="#7a3440"/><rect x="4.5" y="4.5" width="3.5" height="3.5" fill="#d0586a"/><rect x="4.5" y="8" width="3.5" height="3.5" fill="#7a3440"/><rect x="4.5" y="11.5" width="3.5" height="3.5" fill="#d0586a"/><rect x="8" y="1" width="3.5" height="3.5" fill="#d0586a"/><rect x="8" y="4.5" width="3.5" height="3.5" fill="#7a3440"/><rect x="8" y="8" width="3.5" height="3.5" fill="#d0586a"/><rect x="8" y="11.5" width="3.5" height="3.5" fill="#7a3440"/><rect x="11.5" y="1" width="3.5" height="3.5" fill="#7a3440"/><rect x="11.5" y="4.5" width="3.5" height="3.5" fill="#d0586a"/><rect x="11.5" y="8" width="3.5" height="3.5" fill="#7a3440"/><rect x="11.5" y="11.5" width="3.5" height="3.5" fill="#d0586a"/></svg>
<svg class="b" style="left:1626px;top:398.5px;" width="16" height="16" viewBox="0 0 16 16"><rect x="4.2" y="4.2" width="7.6" height="7.6" fill="#e6e6e6"/><path d="M1.5 4.5V1.5H4.5M11.5 1.5H14.5V4.5M14.5 11.5V14.5H11.5M4.5 14.5H1.5V11.5" stroke="#d0d0d0" stroke-width="1.1" fill="none"/></svg>
<span class="t" style="left:1650.40px;top:400.10px;font-size:11px;line-height:13px;letter-spacing:-0.529px;color:#e0e0e0;font-family:'DejaVu Sans','Liberation Sans',sans-serif;">BuckTop</span>
<svg class="b" style="left:1707px;top:401.5px;" width="9" height="10" viewBox="0 0 9 10"><path d="M2.4 1.2L6.4 5L2.4 8.8" fill="none" stroke="#c8c8c8" stroke-width="1.2"/></svg>
<svg class="b" style="left:1725px;top:399.4px;" width="15" height="14" viewBox="0 0 15 14"><rect x="1" y="1" width="6" height="6" fill="none" stroke="#d0d0d0" stroke-width="1.1"/><path d="M9 3.4H13.6V13H4.4V9H9Z" fill="none" stroke="#d0d0d0" stroke-width="1.1"/></svg>
<span class="t" style="left:1748.60px;top:400.10px;font-size:11px;line-height:13px;letter-spacing:-0.706px;color:#e0e0e0;font-family:'DejaVu Sans','Liberation Sans',sans-serif;">Boolean</span>
<svg class="b" style="left:1894px;top:399px;" width="16" height="16" viewBox="0 0 16 16"><path d="M9.6 1.6L14.4 6.4L12.6 7L10.2 9.4Q10.4 11.6 9 13L3 7Q4.4 5.6 6.6 5.8L9 3.4Z" fill="none" stroke="#a0a0a0" stroke-width="1.1" stroke-linejoin="round"/><path d="M6 10L1.8 14.2" stroke="#a0a0a0" stroke-width="1.2"/></svg>
<div class="b" style="left:1624.3px;top:432.4px;width:287.3px;height:19px;background:#282828;border-radius:4px;border:1px solid #444;"></div>
<span class="t" style="left:1632.40px;top:435.70px;font-size:11px;line-height:13px;letter-spacing:-0.581px;color:#e0e0e0;font-family:'DejaVu Sans','Liberation Sans',sans-serif;">Add Modifier</span>
<svg class="b" style="left:1900px;top:437.3px;" width="10" height="10" viewBox="0 0 10 10"><path d="M2 3.8 L5 6.8 L8 3.8" fill="none" stroke="#e6e6e6" stroke-width="1.3" stroke-linecap="round" stroke-linejoin="round"/></svg>
<div class="b" style="left:1624.3px;top:462.2px;width:287.7px;height:160.4px;background:#3a3a3a;border-radius:5px;border:1px solid #4772b3;"></div>
<svg class="b" style="left:1631px;top:470px;" width="11" height="10" viewBox="0 0 11 10"><path d="M1.6 2.8L5.5 6.8L9.4 2.8" fill="none" stroke="#c8c8c8" stroke-width="1.1"/></svg>
<svg class="b" style="left:1646.6px;top:467.6px;" width="15" height="14.5" viewBox="0 0 15 14.5"><rect x="0.8" y="0.8" width="5.8" height="5.8" fill="none" stroke="#a04a54" stroke-width="1.1"/><path d="M9 3.4H13.8V13.4H4.2V9H9Z" fill="none" stroke="#e0707c" stroke-width="1.2"/></svg>
<div class="b" style="left:1672.6px;top:466px;width:109px;height:17.8px;background:#1d1d1d;border-radius:4px 0 0 4px;"></div>
<span class="t" style="left:1680.20px;top:468.60px;font-size:11px;line-height:13px;letter-spacing:-0.649px;color:#e0e0e0;font-family:'DejaVu Sans','Liberation Sans',sans-serif;">Boolean</span>
<div class="b" style="left:1781.6px;top:466px;width:19.6px;height:17.8px;background:#545454;"></div>
<div class="b" style="left:1801.7px;top:466px;width:19.6px;height:17.8px;background:#4772b3;"></div>
<div class="b" style="left:1821.8px;top:466px;width:19.2px;height:17.8px;background:#4772b3;"></div>
<div class="b" style="left:1841.4px;top:466px;width:19.5px;height:17.8px;background:#282828;border-radius:0 4px 4px 0;"></div>
<svg class="b" style="left:1783.6px;top:467px;" width="16" height="16" viewBox="0 0 16 16"><path d="M3 3H13V13H3Z" fill="none" stroke="#c0c0c0" stroke-width="1"/><rect x="1.4" y="1.4" width="3" height="3" fill="#545454" stroke="#c8c8c8" stroke-width="0.9"/><rect x="11.2" y="1" width="3.8" height="3.8" fill="#f0f0f0"/><rect x="1.4" y="11.6" width="3" height="3" fill="#545454" stroke="#c8c8c8" stroke-width="0.9"/><rect x="11.6" y="11.6" width="3" height="3" fill="#545454" stroke="#c8c8c8" stroke-width="0.9"/></svg>
<svg class="b" style="left:1803.6px;top:467px;" width="16" height="16" viewBox="0 0 16 16"><rect x="1.4" y="2.4" width="13.2" height="8.8" rx="0.8" fill="none" stroke="#fff" stroke-width="1.3"/><path d="M5 13.8H11M8 11.4V13.6" stroke="#fff" stroke-width="1.3"/></svg>
<svg class="b" style="left:1823.4px;top:467px;" width="16" height="16" viewBox="0 0 16 16"><path d="M1 4H4.2L5.4 2.2H10.6L11.8 4H15V13.6H1Z" fill="#fff"/><circle cx="8" cy="8.6" r="3.4" fill="#4772b3"/><circle cx="8" cy="8.6" r="2" fill="none" stroke="#fff" stroke-width="1"/></svg>
<svg class="b" style="left:1846.2px;top:470.2px;" width="10" height="10" viewBox="0 0 10 10"><path d="M1.8 3.7 L5 6.9 L8.2 3.7" fill="none" stroke="#e6e6e6" stroke-width="1.3" stroke-linecap="round" stroke-linejoin="round"/></svg>
<svg class="b" style="left:1866.7px;top:469.5px;" width="11" height="11" viewBox="0 0 11 11"><path d="M1.6 1.6L9.4 9.4M9.4 1.6L1.6 9.4" stroke="#d0d0d0" stroke-width="1.2"/></svg>
<svg class="b" style="left:1894.3px;top:472.6px;" width="12" height="5" viewBox="0 0 12 5"><rect x="0.5" y="0.5" width="1.1" height="1.1" fill="#8a8a8a"/><rect x="0.5" y="3.2" width="1.1" height="1.1" fill="#8a8a8a"/><rect x="3.2" y="0.5" width="1.1" height="1.1" fill="#8a8a8a"/><rect x="3.2" y="3.2" width="1.1" height="1.1" fill="#8a8a8a"/><rect x="5.9" y="0.5" width="1.1" height="1.1" fill="#8a8a8a"/><rect x="5.9" y="3.2" width="1.1" height="1.1" fill="#8a8a8a"/><rect x="8.6" y="0.5" width="1.1" height="1.1" fill="#8a8a8a"/><rect x="8.6" y="3.2" width="1.1" height="1.1" fill="#8a8a8a"/></svg>
<div class="b" style="left:1632.9px;top:496.3px;width:88.2px;height:17.6px;background:#545454;border-radius:4px 0 0 4px;"></div>
<div class="b" style="left:1721.6px;top:496.3px;width:90.6px;height:17.6px;background:#4772b3;"></div>
<div class="b" style="left:1812.8px;top:496.3px;width:90.2px;height:17.6px;background:#545454;border-radius:0 4px 4px 0;"></div>
<span class="t" style="left:1654.95px;top:498.90px;font-size:11px;line-height:13px;letter-spacing:-0.464px;color:#e0e0e0;font-family:'DejaVu Sans','Liberation Sans',sans-serif;">Intersect</span>
<span class="t" style="left:1752.25px;top:498.90px;font-size:11px;line-height:13px;letter-spacing:-0.457px;color:#fff;font-family:'DejaVu Sans','Liberation Sans',sans-serif;">Union</span>
<span class="t" style="left:1832.25px;top:498.90px;font-size:11px;line-height:13px;letter-spacing:-0.521px;color:#e0e0e0;font-family:'DejaVu Sans','Liberation Sans',sans-serif;">Difference</span>
<span class="t" style="left:1659.20px;top:523.70px;font-size:11px;line-height:13px;letter-spacing:-0.699px;color:#e0e0e0;font-family:'DejaVu Sans','Liberation Sans',sans-serif;">Operand Type</span>
<div class="b" style="left:1737.9px;top:521.3px;width:145px;height:17.6px;background:#282828;border-radius:4px;border:1px solid #444;"></div>
<span class="t" style="left:1745.00px;top:523.70px;font-size:11px;line-height:13px;letter-spacing:-0.438px;color:#e0e0e0;font-family:'DejaVu Sans','Liberation Sans',sans-serif;">Object</span>
<svg class="b" style="left:1871.7px;top:525.3px;" width="10" height="10" viewBox="0 0 10 10"><path d="M2 3.8 L5 6.8 L8 3.8" fill="none" stroke="#e6e6e6" stroke-width="1.3" stroke-linecap="round" stroke-linejoin="round"/></svg>
<svg class="b" style="left:1891.6px;top:528px;" width="4" height="4" viewBox="0 0 4 4"><circle cx="2" cy="2" r="1.5" fill="#d0d0d0"/></svg>
<span class="t" style="left:1694.00px;top:548.60px;font-size:11px;line-height:13px;letter-spacing:-0.438px;color:#e0e0e0;font-family:'DejaVu Sans','Liberation Sans',sans-serif;">Object</span>
<div class="b" style="left:1737.9px;top:546px;width:145px;height:18px;background:#1d1d1d;border-radius:4px;border:1px solid #444;"></div>
<svg class="b" style="left:1741.6px;top:547.4px;" width="15" height="15" viewBox="0 0 15 15"><rect x="4" y="4" width="7" height="7" fill="#e6e6e6"/><path d="M1.5 4.5V1.5H4.5M10.5 1.5H13.5V4.5M13.5 10.5V13.5H10.5M4.5 13.5H1.5V10.5" stroke="#d0d0d0" stroke-width="1.1" fill="none"/></svg>
<svg class="b" style="left:1865px;top:548px;" width="15" height="15" viewBox="0 0 15 15"><path d="M9.4 1.8Q11.6 0.2 13 2Q14.6 3.6 13 5.4L11.4 7L12 7.6L10.8 8.8L6 4L7.2 2.8L7.8 3.4Z" fill="#8a8a8a"/><path d="M7 5.6L2.4 10.2L1.4 13.4L4.6 12.4L9.2 7.8" fill="none" stroke="#8a8a8a" stroke-width="1"/></svg>
<span class="t" style="left:1696.00px;top:573.80px;font-size:11px;line-height:13px;letter-spacing:-0.562px;color:#e0e0e0;font-family:'DejaVu Sans','Liberation Sans',sans-serif;">Solver</span>
<div class="b" style="left:1737.9px;top:571px;width:71.5px;height:18px;background:#545454;border-radius:4px 0 0 4px;"></div>
<div class="b" style="left:1809.8px;top:571px;width:73.1px;height:18px;background:#4772b3;border-radius:0 4px 4px 0;"></div>
<span class="t" style="left:1763.10px;top:573.80px;font-size:11px;line-height:13px;letter-spacing:-0.275px;color:#e0e0e0;font-family:'DejaVu Sans','Liberation Sans',sans-serif;">Fast</span>
<span class="t" style="left:1832.05px;top:573.80px;font-size:11px;line-height:13px;letter-spacing:-0.412px;color:#fff;font-family:'DejaVu Sans','Liberation Sans',sans-serif;">Exact</span>
<svg class="b" style="left:1891.6px;top:578px;" width="4" height="4" viewBox="0 0 4 4"><circle cx="2" cy="2" r="1.5" fill="#d0d0d0"/></svg>
<svg class="b" style="left:1647px;top:606px;" width="9" height="10" viewBox="0 0 9 10"><path d="M2.4 1.2L6.4 5L2.4 8.8" fill="none" stroke="#c8c8c8" stroke-width="1.1"/></svg>
<span class="t" style="left:1660.60px;top:604.70px;font-size:11px;line-height:13px;letter-spacing:-0.629px;color:#e0e0e0;font-family:'DejaVu Sans','Liberation Sans',sans-serif;">Solver Options</span>
<div id="tl"></div>
<div class="b" style="left:1px;top:947px;width:1584px;height:25px;background:#303030;border-radius:5px 5px 0 0;"></div>
<div class="b" style="left:1px;top:972px;width:1584px;height:22.5px;background:#1e1e1e;"></div>
<div class="b" style="left:1px;top:994.5px;width:1584px;height:24px;background:#232323;border-radius:0 0 5px 5px;"></div>
<div class="b" style="left:58.593px;top:994.5px;width:1467.36px;height:24px;background:#303030;"></div>
<svg class="b" style="left:0px;top:994.5px;" width="1585" height="24" viewBox="0 0 1585 24"><rect x="52.2" y="0" width="1" height="24" fill="#161616"/><rect x="81.7" y="0" width="1" height="24" fill="#1e1e1e"/><rect x="111.1" y="0" width="1" height="24" fill="#161616"/><rect x="140.6" y="0" width="1" height="24" fill="#1e1e1e"/><rect x="170.1" y="0" width="1" height="24" fill="#161616"/><rect x="199.5" y="0" width="1" height="24" fill="#1e1e1e"/><rect x="229.0" y="0" width="1" height="24" fill="#161616"/><rect x="258.5" y="0" width="1" height="24" fill="#1e1e1e"/><rect x="287.9" y="0" width="1" height="24" fill="#161616"/><rect x="317.4" y="0" width="1" height="24" fill="#1e1e1e"/><rect x="346.8" y="0" width="1" height="24" fill="#161616"/><rect x="376.3" y="0" width="1" height="24" fill="#1e1e1e"/><rect x="405.8" y="0" width="1" height="24" fill="#161616"/><rect x="435.2" y="0" width="1" height="24" fill="#1e1e1e"/><rect x="464.7" y="0" width="1" height="24" fill="#161616"/><rect x="494.2" y="0" width="1" height="24" fill="#1e1e1e"/><rect x="523.6" y="0" width="1" height="24" fill="#161616"/><rect x="553.1" y="0" width="1" height="24" fill="#1e1e1e"/><rect x="582.6" y="0" width="1" height="24" fill="#161616"/><rect x="612.0" y="0" width="1" height="24" fill="#1e1e1e"/><rect x="641.5" y="0" width="1" height="24" fill="#161616"/><rect x="671.0" y="0" width="1" height="24" fill="#1e1e1e"/><rect x="700.4" y="0" width="1" height="24" fill="#161616"/><rect x="729.9" y="0" width="1" height="24" fill="#1e1e1e"/><rect x="759.4" y="0" width="1" height="24" fill="#161616"/><rect x="788.8" y="0" width="1" height="24" fill="#1e1e1e"/><rect x="818.3" y="0" width="1" height="24" fill="#161616"/><rect x="847.8" y="0" width="1" height="24" fill="#1e1e1e"/><rect x="877.2" y="0" width="1" height="24" fill="#161616"/><rect x="906.7" y="0" width="1" height="24" fill="#1e1e1e"/><rect x="936.1" y="0" width="1" height="24" fill="#161616"/><rect x="965.6" y="0" width="1" height="24" fill="#1e1e1e"/><rect x="995.1" y="0" width="1" height="24" fill="#161616"/><rect x="1024.5" y="0" width="1" height="24" fill="#1e1e1e"/><rect x="1054.0" y="0" width="1" height="24" fill="#161616"/><rect x="1083.5" y="0" width="1" height="24" fill="#1e1e1e"/><rect x="1112.9" y="0" width="1" height="24" fill="#161616"/><rect x="1142.4" y="0" width="1" height="24" fill="#1e1e1e"/><rect x="1171.9" y="0" width="1" height="24" fill="#161616"/><rect x="1201.3" y="0" width="1" height="24" fill="#1e1e1e"/><rect x="1230.8" y="0" width="1" height="24" fill="#161616"/><rect x="1260.3" y="0" width="1" height="24" fill="#1e1e1e"/><rect x="1289.7" y="0" width="1" height="24" fill="#161616"/><rect x="1319.2" y="0" width="1" height="24" fill="#1e1e1e"/><rect x="1348.7" y="0" width="1" height="24" fill="#161616"/><rect x="1378.1" y="0" width="1" height="24" fill="#1e1e1e"/><rect x="1407.6" y="0" width="1" height="24" fill="#161616"/><rect x="1437.1" y="0" width="1" height="24" fill="#1e1e1e"/><rect x="1466.5" y="0" width="1" height="24" fill="#161616"/><rect x="1496.0" y="0" width="1" height="24" fill="#1e1e1e"/><rect x="1525.5" y="0" width="1" height="24" fill="#161616"/><rect x="1554.9" y="0" width="1" height="24" fill="#1e1e1e"/></svg>
<span class="t" style="left:104.43px;top:978.00px;font-size:11px;line-height:13px;letter-spacing:-0.300px;color:#c4c4c4;font-family:'DejaVu Sans','Liberation Sans',sans-serif;">10</span>
<span class="t" style="left:163.36px;top:978.00px;font-size:11px;line-height:13px;letter-spacing:-0.300px;color:#c4c4c4;font-family:'DejaVu Sans','Liberation Sans',sans-serif;">20</span>
<span class="t" style="left:222.29px;top:978.00px;font-size:11px;line-height:13px;letter-spacing:-0.300px;color:#c4c4c4;font-family:'DejaVu Sans','Liberation Sans',sans-serif;">30</span>
<span class="t" style="left:281.22px;top:978.00px;font-size:11px;line-height:13px;letter-spacing:-0.300px;color:#c4c4c4;font-family:'DejaVu Sans','Liberation Sans',sans-serif;">40</span>
<span class="t" style="left:340.15px;top:978.00px;font-size:11px;line-height:13px;letter-spacing:-0.300px;color:#c4c4c4;font-family:'DejaVu Sans','Liberation Sans',sans-serif;">50</span>
<span class="t" style="left:399.08px;top:978.00px;font-size:11px;line-height:13px;letter-spacing:-0.300px;color:#c4c4c4;font-family:'DejaVu Sans','Liberation Sans',sans-serif;">60</span>
<span class="t" style="left:458.01px;top:978.00px;font-size:11px;line-height:13px;letter-spacing:-0.300px;color:#c4c4c4;font-family:'DejaVu Sans','Liberation Sans',sans-serif;">70</span>
<span class="t" style="left:516.94px;top:978.00px;font-size:11px;line-height:13px;letter-spacing:-0.300px;color:#c4c4c4;font-family:'DejaVu Sans','Liberation Sans',sans-serif;">80</span>
<span class="t" style="left:575.87px;top:978.00px;font-size:11px;line-height:13px;letter-spacing:-0.300px;color:#c4c4c4;font-family:'DejaVu Sans','Liberation Sans',sans-serif;">90</span>
<span class="t" style="left:631.45px;top:978.00px;font-size:11px;line-height:13px;letter-spacing:-0.300px;color:#c4c4c4;font-family:'DejaVu Sans','Liberation Sans',sans-serif;">100</span>
<span class="t" style="left:690.38px;top:978.00px;font-size:11px;line-height:13px;letter-spacing:-0.300px;color:#c4c4c4;font-family:'DejaVu Sans','Liberation Sans',sans-serif;">110</span>
<span class="t" style="left:749.31px;top:978.00px;font-size:11px;line-height:13px;letter-spacing:-0.300px;color:#c4c4c4;font-family:'DejaVu Sans','Liberation Sans',sans-serif;">120</span>
<span class="t" style="left:808.24px;top:978.00px;font-size:11px;line-height:13px;letter-spacing:-0.300px;color:#c4c4c4;font-family:'DejaVu Sans','Liberation Sans',sans-serif;">130</span>
<span class="t" style="left:867.17px;top:978.00px;font-size:11px;line-height:13px;letter-spacing:-0.300px;color:#c4c4c4;font-family:'DejaVu Sans','Liberation Sans',sans-serif;">140</span>
<span class="t" style="left:926.10px;top:978.00px;font-size:11px;line-height:13px;letter-spacing:-0.300px;color:#c4c4c4;font-family:'DejaVu Sans','Liberation Sans',sans-serif;">150</span>
<span class="t" style="left:985.03px;top:978.00px;font-size:11px;line-height:13px;letter-spacing:-0.300px;color:#c4c4c4;font-family:'DejaVu Sans','Liberation Sans',sans-serif;">160</span>
<span class="t" style="left:1043.96px;top:978.00px;font-size:11px;line-height:13px;letter-spacing:-0.300px;color:#c4c4c4;font-family:'DejaVu Sans','Liberation Sans',sans-serif;">170</span>
<span class="t" style="left:1102.89px;top:978.00px;font-size:11px;line-height:13px;letter-spacing:-0.300px;color:#c4c4c4;font-family:'DejaVu Sans','Liberation Sans',sans-serif;">180</span>
<span class="t" style="left:1161.82px;top:978.00px;font-size:11px;line-height:13px;letter-spacing:-0.300px;color:#c4c4c4;font-family:'DejaVu Sans','Liberation Sans',sans-serif;">190</span>
<span class="t" style="left:1220.75px;top:978.00px;font-size:11px;line-height:13px;letter-spacing:-0.300px;color:#c4c4c4;font-family:'DejaVu Sans','Liberation Sans',sans-serif;">200</span>
<span class="t" style="left:1279.68px;top:978.00px;font-size:11px;line-height:13px;letter-spacing:-0.300px;color:#c4c4c4;font-family:'DejaVu Sans','Liberation Sans',sans-serif;">210</span>
<span class="t" style="left:1338.61px;top:978.00px;font-size:11px;line-height:13px;letter-spacing:-0.300px;color:#c4c4c4;font-family:'DejaVu Sans','Liberation Sans',sans-serif;">220</span>
<span class="t" style="left:1397.54px;top:978.00px;font-size:11px;line-height:13px;letter-spacing:-0.300px;color:#c4c4c4;font-family:'DejaVu Sans','Liberation Sans',sans-serif;">230</span>
<span class="t" style="left:1456.47px;top:978.00px;font-size:11px;line-height:13px;letter-spacing:-0.300px;color:#c4c4c4;font-family:'DejaVu Sans','Liberation Sans',sans-serif;">240</span>
<span class="t" style="left:1515.40px;top:978.00px;font-size:11px;line-height:13px;letter-spacing:-0.300px;color:#c4c4c4;font-family:'DejaVu Sans','Liberation Sans',sans-serif;">250</span>
<div class="b" style="left:58.2px;top:990px;width:1.8px;height:29px;background:#4772b3;"></div>
<div class="b" style="left:46.7px;top:975px;width:23.6px;height:17px;background:#4772b3;border-radius:4px;"></div>
<span class="t" style="left:55.28px;top:977.90px;font-size:11px;line-height:13px;letter-spacing:-0.550px;color:#fff;font-family:'DejaVu Sans','Liberation Sans',sans-serif;">1</span>
<div class="b" style="left:8.3px;top:1008.6px;width:1568px;height:8.6px;background:#545454;border-radius:4.3px;"></div>
<svg class="b" style="left:10.2px;top:1010.2px;" width="6" height="6" viewBox="0 0 6 6"><circle cx="3" cy="3" r="2.4" fill="#303030"/></svg>
<svg class="b" style="left:1569px;top:1010.2px;" width="6" height="6" viewBox="0 0 6 6"><circle cx="3" cy="3" r="2.4" fill="#303030"/></svg>
<div class="b" style="left:0px;top:985px;width:6px;height:17px;background:#181818;border-radius:0 6px 6px 0;"></div>
<svg class="b" style="left:0px;top:989px;" width="6" height="9" viewBox="0 0 6 9"><path d="M1.2 1L4.6 4.5L1.2 8" fill="none" stroke="#9a9a9a" stroke-width="1"/></svg>
<svg class="b" style="left:1578.5px;top:989px;" width="6" height="9" viewBox="0 0 6 9"><path d="M4.8 1L1.4 4.5L4.8 8" fill="none" stroke="#9a9a9a" stroke-width="1"/></svg>
<div class="b" style="left:8.4px;top:950.6px;width:31.2px;height:19px;background:#282828;border-radius:4px;border:1px solid #444;"></div>
<svg class="b" style="left:12.6px;top:953px;" width="15" height="15" viewBox="0 0 15 15"><circle cx="7.5" cy="7.5" r="7" fill="#e6e6e6"/><path d="M9 3L5.6 7.2L7.6 11.6" fill="none" stroke="#282828" stroke-width="1.7"/></svg>
<svg class="b" style="left:28.4px;top:955.6px;" width="10" height="10" viewBox="0 0 10 10"><path d="M2.2 3.9 L5 6.7 L7.8 3.9" fill="none" stroke="#e6e6e6" stroke-width="1.3" stroke-linecap="round" stroke-linejoin="round"/></svg>
<div class="b" style="left:45.4px;top:950.6px;width:69px;height:19px;background:#282828;border-radius:4px 0 0 4px;border:1px solid #444;"></div>
<div class="b" style="left:114.2px;top:950.6px;width:59.2px;height:19px;background:#282828;border-radius:0 4px 4px 0;border:1px solid #444;border-left:none;"></div>
<span class="t" style="left:53.10px;top:953.90px;font-size:11px;line-height:13px;letter-spacing:-0.535px;color:#e0e0e0;font-family:'DejaVu Sans','Liberation Sans',sans-serif;">Playback</span>
<svg class="b" style="left:103.3px;top:955.6px;" width="10" height="10" viewBox="0 0 10 10"><path d="M2.2 3.9 L5 6.7 L7.8 3.9" fill="none" stroke="#e6e6e6" stroke-width="1.3" stroke-linecap="round" stroke-linejoin="round"/></svg>
<span class="t" style="left:122.30px;top:953.90px;font-size:11px;line-height:13px;letter-spacing:-0.493px;color:#e0e0e0;font-family:'DejaVu Sans','Liberation Sans',sans-serif;">Keying</span>
<svg class="b" style="left:162.3px;top:955.6px;" width="10" height="10" viewBox="0 0 10 10"><path d="M2.2 3.9 L5 6.7 L7.8 3.9" fill="none" stroke="#e6e6e6" stroke-width="1.3" stroke-linecap="round" stroke-linejoin="round"/></svg>
<span class="t" style="left:183.30px;top:953.90px;font-size:11px;line-height:13px;letter-spacing:-0.526px;color:#e0e0e0;font-family:'DejaVu Sans','Liberation Sans',sans-serif;">View</span>
<span class="t" style="left:223.30px;top:953.90px;font-size:11px;line-height:13px;letter-spacing:-0.504px;color:#e0e0e0;font-family:'DejaVu Sans','Liberation Sans',sans-serif;">Marker</span>
<div class="b" style="left:701px;top:951px;width:18.6px;height:18px;background:#545454;border-radius:4px 0 0 4px;"></div>
<div class="b" style="left:719.6px;top:951px;width:19.4px;height:18px;background:#2b2b2b;border-radius:0 4px 4px 0;"></div>
<svg class="b" style="left:704.8px;top:954.8px;" width="11" height="11" viewBox="0 0 11 11"><circle cx="5.5" cy="5.5" r="4.3" fill="#e6e6e6"/></svg>
<svg class="b" style="left:724px;top:955.8px;" width="10" height="10" viewBox="0 0 10 10"><path d="M2.2 3.9 L5 6.7 L7.8 3.9" fill="none" stroke="#5a5a5a" stroke-width="1.3" stroke-linecap="round" stroke-linejoin="round"/></svg>
<div class="b" style="left:746px;top:951px;width:118px;height:18px;background:#545454;border-radius:4px;"></div>
<div class="b" style="left:764.4px;top:951px;width:1px;height:18px;background:#444;"></div>
<div class="b" style="left:784.4px;top:951px;width:1px;height:18px;background:#444;"></div>
<div class="b" style="left:804.4px;top:951px;width:1px;height:18px;background:#444;"></div>
<div class="b" style="left:824.4px;top:951px;width:1px;height:18px;background:#444;"></div>
<div class="b" style="left:844.4px;top:951px;width:1px;height:18px;background:#444;"></div>
<svg class="b" style="left:748px;top:953px;" width="14" height="14" viewBox="0 0 14 14"><rect x="1.6" y="1.4" width="2" height="11.2" fill="#f0f0f0"/><path d="M11.8 1.6V12.4L4.4 7Z" fill="#f0f0f0"/></svg>
<svg class="b" style="left:767.6px;top:953px;" width="14" height="14" viewBox="0 0 14 14"><path d="M0.4 7L4.6 2L8.8 7L4.6 12Z" fill="#f0f0f0"/><path d="M14 2.6V11.4L8.6 7Z" fill="#f0f0f0"/></svg>
<svg class="b" style="left:787.6px;top:953px;" width="14" height="14" viewBox="0 0 14 14"><path d="M12.4 1V13L2 7Z" fill="#f0f0f0"/></svg>
<svg class="b" style="left:807.6px;top:953px;" width="14" height="14" viewBox="0 0 14 14"><path d="M2 1V13L12.4 7Z" fill="#f0f0f0"/></svg>
<svg class="b" style="left:827.8px;top:953px;" width="14" height="14" viewBox="0 0 14 14"><path d="M13.6 7L9.4 2L5.2 7L9.4 12Z" fill="#f0f0f0"/><path d="M0 2.6V11.4L5.4 7Z" fill="#f0f0f0"/></svg>
<svg class="b" style="left:847.6px;top:953px;" width="14" height="14" viewBox="0 0 14 14"><rect x="10.4" y="1.4" width="2" height="11.2" fill="#f0f0f0"/><path d="M2.2 1.6V12.4L9.6 7Z" fill="#f0f0f0"/></svg>
<div class="b" style="left:1307.5px;top:951px;width:74px;height:18px;background:#545454;border-radius:4px;"></div>
<span class="t" style="left:1340.28px;top:953.90px;font-size:11px;line-height:13px;letter-spacing:-0.550px;color:#e0e0e0;font-family:'DejaVu Sans','Liberation Sans',sans-serif;">1</span>
<div class="b" style="left:1387.5px;top:951px;width:19px;height:18px;background:#545454;border-radius:4px 0 0 4px;"></div>
<svg class="b" style="left:1390px;top:952.6px;" width="15" height="15" viewBox="0 0 15 15"><circle cx="7.5" cy="8.4" r="5.2" fill="none" stroke="#e0e0e0" stroke-width="1.2"/><path d="M7.5 5.4V8.6L9.6 9.8M6 1.6H9M11.6 3.6L12.8 4.8" fill="none" stroke="#e0e0e0" stroke-width="1.1"/></svg>
<div class="b" style="left:1407px;top:951px;width:87px;height:18px;background:#545454;"></div>
<div class="b" style="left:1495px;top:951px;width:83.5px;height:18px;background:#545454;border-radius:0 4px 4px 0;"></div>
<span class="t" style="left:1422.50px;top:953.90px;font-size:11px;line-height:13px;letter-spacing:-0.674px;color:#e0e0e0;font-family:'DejaVu Sans','Liberation Sans',sans-serif;">Start</span>
<span class="t" style="left:1474.05px;top:953.90px;font-size:11px;line-height:13px;letter-spacing:-0.550px;color:#e0e0e0;font-family:'DejaVu Sans','Liberation Sans',sans-serif;">1</span>
<span class="t" style="left:1510.00px;top:953.90px;font-size:11px;line-height:13px;letter-spacing:-0.802px;color:#e0e0e0;font-family:'DejaVu Sans','Liberation Sans',sans-serif;">End</span>
<span class="t" style="left:1544.00px;top:953.90px;font-size:11px;line-height:13px;letter-spacing:0.002px;color:#e0e0e0;font-family:'DejaVu Sans','Liberation Sans',sans-serif;">250</span>
<div id="status"></div><div id="taskbar"></div>
<svg class="b" style="left:11.4px;top:1022px;" width="12" height="16" viewBox="0 0 12 16"><path d="M1.2 5.2Q1.2 1 6 1Q10.8 1 10.8 5.2V10.8Q10.8 15 6 15Q1.2 15 1.2 10.8Z" fill="none" stroke="#9a9a9a" stroke-width="1.1"/><path d="M1.2 6.4V5.2Q1.2 1 6 1V6.4Z" fill="#9a9a9a"/></svg>
<span class="t" style="left:34.40px;top:1023.70px;font-size:11px;line-height:13px;letter-spacing:-0.556px;color:#989898;font-family:'DejaVu Sans','Liberation Sans',sans-serif;">Select</span>
<svg class="b" style="left:76px;top:1022px;" width="12" height="16" viewBox="0 0 12 16"><path d="M1.2 5.2Q1.2 1 6 1Q10.8 1 10.8 5.2V10.8Q10.8 15 6 15Q1.2 15 1.2 10.8Z" fill="none" stroke="#9a9a9a" stroke-width="1.1"/><path d="M1.2 6.4V5.2Q1.2 1 6 1V6.4Z" fill="#9a9a9a"/></svg>
<svg class="b" style="left:88.4px;top:1022px;" width="4" height="8" viewBox="0 0 4 8"><path d="M0.8 0.6V7M3 1.8V6.6" stroke="#9a9a9a" stroke-width="0.9"/></svg>
<span class="t" style="left:100.40px;top:1023.70px;font-size:11px;line-height:13px;letter-spacing:-0.528px;color:#989898;font-family:'DejaVu Sans','Liberation Sans',sans-serif;">Box Select</span>
<svg class="b" style="left:222.8px;top:1022px;" width="12" height="16" viewBox="0 0 12 16"><path d="M1.2 5.2Q1.2 1 6 1Q10.8 1 10.8 5.2V10.8Q10.8 15 6 15Q1.2 15 1.2 10.8Z" fill="none" stroke="#9a9a9a" stroke-width="1.1"/><rect x="4.8" y="2.6" width="2.4" height="4.6" rx="1" fill="#9a9a9a"/></svg>
<span class="t" style="left:245.40px;top:1023.70px;font-size:11px;line-height:13px;letter-spacing:-0.528px;color:#989898;font-family:'DejaVu Sans','Liberation Sans',sans-serif;">Rotate View</span>
<svg class="b" style="left:433.6px;top:1022px;" width="12" height="16" viewBox="0 0 12 16"><path d="M1.2 5.2Q1.2 1 6 1Q10.8 1 10.8 5.2V10.8Q10.8 15 6 15Q1.2 15 1.2 10.8Z" fill="none" stroke="#9a9a9a" stroke-width="1.1"/><path d="M10.8 6.4V5.2Q10.8 1 6 1V6.4Z" fill="#9a9a9a"/></svg>
<span class="t" style="left:456.00px;top:1023.70px;font-size:11px;line-height:13px;letter-spacing:-0.585px;color:#989898;font-family:'DejaVu Sans','Liberation Sans',sans-serif;">Object Context Menu</span>
<span class="t" style="left:1885.00px;top:1023.70px;font-size:11px;line-height:13px;letter-spacing:-0.297px;color:#989898;font-family:'DejaVu Sans','Liberation Sans',sans-serif;">3.0.0</span>
<span class="t" style="left:1599.00px;top:946.44px;font-size:21px;line-height:23px;letter-spacing:-0.483px;color:rgba(255,255,255,0.38);font-family:'Liberation Sans',sans-serif;-webkit-text-stroke:0;">Activate Windows</span>
<span class="t" style="left:1599.00px;top:971.87px;font-size:15px;line-height:17px;letter-spacing:-0.022px;color:rgba(255,255,255,0.38);font-family:'Liberation Sans',sans-serif;-webkit-text-stroke:0;">Go to Settings to activate Windows.</span>
<svg class="b" style="left:16px;top:1052px;" width="16" height="16" viewBox="0 0 16 16"><path d="M0 2.3L6.6 1.4V7.6H0Z M7.4 1.3L16 0V7.6H7.4Z M0 8.4H6.6V14.6L0 13.7Z M7.4 8.4H16V16L7.4 14.7Z" fill="#fff"/></svg>
<div class="b" style="left:48px;top:1040px;width:343.5px;height:40px;background:#f2f2f2;"></div>
<svg class="b" style="left:59px;top:1052px;" width="18" height="18" viewBox="0 0 18 18"><circle cx="11" cy="6.6" r="5" fill="none" stroke="#1a1a1a" stroke-width="1.3"/><path d="M7.4 10.4L1.4 16.6" stroke="#1a1a1a" stroke-width="1.4"/></svg>
<span class="t" style="left:88.30px;top:1052.27px;font-size:15px;line-height:17px;letter-spacing:-0.272px;color:#1c1c1c;font-family:'Liberation Sans',sans-serif;-webkit-text-stroke:0;">Type here to search</span>
<div class="b" style="left:447.5px;top:1078px;width:40px;height:2px;background:#76b9ed;"></div>
<div class="b" style="left:496.5px;top:1078px;width:31.2px;height:2px;background:#76b9ed;"></div>
<div class="b" style="left:528.9px;top:1078px;width:7.5px;height:2px;background:#5f9bc8;"></div>
<div class="b" style="left:595.4px;top:1078px;width:39.4px;height:2px;background:#76b9ed;"></div>
<div class="b" style="left:644px;top:1078px;width:39.7px;height:2px;background:#76b9ed;"></div>
<div class="b" style="left:693px;top:1078px;width:30.9px;height:2px;background:#76b9ed;"></div>
<div class="b" style="left:725.1px;top:1078px;width:7.3px;height:2px;background:#5f9bc8;"></div>
<div class="b" style="left:742px;top:1078px;width:39.7px;height:2px;background:#76b9ed;"></div>
<div class="b" style="left:791px;top:1078px;width:39.7px;height:2px;background:#76b9ed;"></div>
<div class="b" style="left:840px;top:1078px;width:39.7px;height:2px;background:#76b9ed;"></div>
<div class="b" style="left:889px;top:1078px;width:39.6px;height:2px;background:#76b9ed;"></div>
<div class="b" style="left:938px;top:1078px;width:39.6px;height:2px;background:#76b9ed;"></div>
<div class="b" style="left:982.9px;top:1040px;width:48.1px;height:40px;background:#4a5046;"></div>
<div class="b" style="left:982.9px;top:1078px;width:48.1px;height:2px;background:#8cc4ee;"></div>
<div class="b" style="left:1036.5px;top:1078px;width:39.4px;height:2px;background:#76b9ed;"></div>
<svg class="b" style="left:405.4px;top:1046px;" width="26" height="26" viewBox="0 0 26 26"><circle cx="13" cy="13" r="11.4" fill="#12295a"/><path d="M1.6 14.6L8.4 17.4Q10.4 15.6 12.4 16.4L16 11.6" fill="none" stroke="#e8eef8" stroke-width="2.2"/><circle cx="17.6" cy="9.6" r="3.7" fill="none" stroke="#e8eef8" stroke-width="1.7"/><circle cx="10.2" cy="18" r="2.7" fill="none" stroke="#e8eef8" stroke-width="1.5"/><path d="M2 15.4Q4 22.6 11 24.2Q5 22 2 15.4Z" fill="#1a62b0"/></svg>
<svg class="b" style="left:454.3px;top:1046px;" width="26" height="26" viewBox="0 0 26 26"><path d="M13 1.6L17.4 2.4L19.4 1.8L22.6 5.4L21.8 7.8L22.6 10.4Q21.4 16.8 19.2 19.4Q16.4 22.6 13 24.6Q9.6 22.6 6.8 19.4Q4.6 16.8 3.4 10.4L4.2 7.8L3.4 5.4L6.6 1.8L8.6 2.4Z" fill="#f0512a"/><path d="M13 6L16.6 7L18.4 9.6L16.4 12.2L17.2 14L13 17.6L8.8 14L9.6 12.2L7.6 9.6L9.4 7Z" fill="#fff"/><path d="M13 9.4L14.6 12L13 14.8L11.4 12Z" fill="#f0512a"/></svg>
<svg class="b" style="left:503.6px;top:1046px;" width="26" height="26" viewBox="0 0 26 26"><path d="M2 5.4H9.4L11.4 7.4H24V21.4H2Z" fill="#e8a820"/><path d="M2 9H24V21.6H2Z" fill="#fcd462"/><path d="M8.6 15.4H17.4V21.6H8.6Z" fill="#3a8ee0"/><path d="M10.6 17.4H15.4V21.6H10.6Z" fill="#fcd462"/></svg>
<svg class="b" style="left:552.7px;top:1046px;" width="26" height="26" viewBox="0 0 26 26"><path d="M13 2.4L23.4 7.4V19L13 24.2L2.6 19V7.4Z" fill="#7a5a3c"/><path d="M13 2.4L23.4 7.4L13 12.6L2.6 7.4Z" fill="#5fa83c"/><path d="M2.6 7.4L13 12.6V15L2.6 9.8Z" fill="#4c8c30"/><path d="M23.4 7.4L13 12.6V24.2L23.4 19Z" fill="#5e4330"/><path d="M13 12.6V15L23.4 9.8V7.4Z" fill="#437a2a"/></svg>
<svg class="b" style="left:602px;top:1046px;" width="26" height="26" viewBox="0 0 26 26"><circle cx="12" cy="12.6" r="11.4" fill="#5562ea"/><path d="M6 8.6Q12 6 18 8.6Q20.4 13 20 17.4Q17.6 19 16 19L15 17.4Q12 18.4 9 17.4L8 19Q6.4 19 4 17.4Q3.6 13 6 8.6Z" fill="#fff"/><circle cx="9.6" cy="13.4" r="1.7" fill="#5562ea"/><circle cx="14.4" cy="13.4" r="1.7" fill="#5562ea"/><circle cx="19.6" cy="19.6" r="5.6" fill="#e8414d"/><circle cx="19.6" cy="19.6" r="2.3" fill="#fff"/></svg>
<svg class="b" style="left:651px;top:1046px;" width="26" height="26" viewBox="0 0 26 26"><rect x="2" y="5" width="22" height="15.4" fill="#3aa0e8"/><rect x="3.4" y="6.4" width="19.2" height="12.6" fill="#8ed0f6"/><circle cx="9" cy="11.4" r="3.4" fill="#1868b8"/><path d="M9 11.4V8A3.4 3.4 0 0 1 12.4 11.4Z" fill="#f0c040"/><path d="M14.6 9H20.6M14.6 11.6H20.6M14.6 14.2H20.6M5.6 16.8H20.6" stroke="#1868b8" stroke-width="1.3"/></svg>
<svg class="b" style="left:699.6px;top:1046px;" width="26" height="26" viewBox="0 0 26 26"><path d="M7.4 3.4L21 2.4L19.4 22.6L4 23.4Z" fill="#9adcec"/><path d="M9.4 5.4L19 4.6L17.8 20.4L6.6 21.2Z" fill="#d8f2f8"/><path d="M7.4 3.4L21 2.4L20.8 4.6L7.2 5.6Z" fill="#6a8c98"/><path d="M19.4 22.6L21 2.4L22.4 4L21 23Z" fill="#d0a868"/></svg>
<svg class="b" style="left:748.6px;top:1046px;" width="26" height="26" viewBox="0 0 26 26"><circle cx="13" cy="13" r="11.4" fill="#12295a"/><path d="M1.6 14.6L8.4 17.4Q10.4 15.6 12.4 16.4L16 11.6" fill="none" stroke="#e8eef8" stroke-width="2.2"/><circle cx="17.6" cy="9.6" r="3.7" fill="none" stroke="#e8eef8" stroke-width="1.7"/><circle cx="10.2" cy="18" r="2.7" fill="none" stroke="#e8eef8" stroke-width="1.5"/><path d="M2 15.4Q4 22.6 11 24.2Q5 22 2 15.4Z" fill="#1a62b0"/></svg>
<svg class="b" style="left:797.6px;top:1046px;" width="26" height="26" viewBox="0 0 26 26"><path d="M9 5L18 3.6L22 6.4V17L13 19L9 16Z" fill="#c8c8c8"/><path d="M13 8L22 6.4V17L13 19Z" fill="#9a9a9a"/><rect x="10.4" y="7.4" width="1.8" height="3" fill="#40e060"/><path d="M3 15L9 13.6L13 16V22L7 23.4L3 21Z" fill="#b0b0b0"/><path d="M7 17.4L13 16V22L7 23.4Z" fill="#e0e0e0"/><rect x="8.6" y="18.6" width="2.6" height="2.4" fill="#555"/></svg>
<svg class="b" style="left:846.5px;top:1046px;" width="26" height="26" viewBox="0 0 26 26"><rect x="3" y="3" width="20" height="20" rx="2.4" fill="#2a2a2a" stroke="#c8c8c8" stroke-width="1" stroke-dasharray="1.4 1.4"/><path d="M8 8Q8 14 13 14Q18 14 18 8M13 6.4V20M10.4 20H15.6" fill="none" stroke="#fff" stroke-width="2"/></svg>
<svg class="b" style="left:895.5px;top:1046px;" width="26" height="26" viewBox="0 0 26 26"><rect x="4" y="3" width="15" height="20.4" fill="#f4f4e8" stroke="#888" stroke-width="0.8"/><rect x="5.4" y="9.4" width="12.2" height="12.6" fill="#86d040"/><path d="M7.4 12V19.4M9 15H15M15.4 13V17" stroke="#1a1a1a" stroke-width="1.4"/><path d="M21.6 2.4L23.6 4L15.4 16L13.6 16.8L13.8 14.6Z" fill="#e8b030"/><path d="M21.6 2.4L23.6 4L22.6 5.4L20.8 3.8Z" fill="#d84040"/></svg>
<svg class="b" style="left:944.5px;top:1046px;" width="26" height="26" viewBox="0 0 26 26"><rect x="2.4" y="3.4" width="21.2" height="19.2" rx="1.6" fill="#2a8ae8"/><path d="M2.4 18L10 9.6L17 17.4L19.6 14.6L23.6 19V21Q23.6 22.6 22 22.6H4Q2.4 22.6 2.4 21Z" fill="#1254a8"/><circle cx="18.6" cy="8.4" r="1.9" fill="#bfe0ff"/></svg>
<svg class="b" style="left:993px;top:1045.5px;" width="27" height="27" viewBox="0 0 27 27"><path d="M2 15L11 8.2L6.6 8.2Q5.4 7 6.6 5.8L13.6 5.8L13.6 3.8Q14 2.4 15.4 3.4L22.6 9.4Q25 12 24 15.6Q22.6 21.4 15.6 21.8Q9 21.8 7.4 16.6L4.6 18.8Q2.8 19.6 2.4 17.8L5.4 15.6L3 16.4Q1.4 16 2 15Z" fill="#ea7600"/><circle cx="15.6" cy="13.6" r="5" fill="#fff"/><circle cx="15.6" cy="13.6" r="3" fill="#265787"/></svg>
<svg class="b" style="left:1042px;top:1046px;" width="26" height="26" viewBox="0 0 26 26"><rect x="4" y="3" width="17" height="20" fill="#f0f0f0" stroke="#9a9a9a" stroke-width="0.8"/><rect x="5.4" y="4.4" width="14.2" height="11" fill="#3a78d8"/><path d="M5.4 12L10 8.4L14 11.4L19.6 7V15.4H5.4Z" fill="#1a3a88"/><circle cx="9" cy="7.4" r="1.6" fill="#e8f0ff"/><path d="M22.8 6.6L24.2 7.8L12 19.4L9.6 20.4L10.4 18Z" fill="#c02838"/><path d="M9.6 20.4L7 22.4" stroke="#333" stroke-width="1.4"/></svg>
<svg class="b" style="left:1783px;top:1055px;" width="14" height="9" viewBox="0 0 14 9"><path d="M1.4 7.4L7 1.8L12.6 7.4" fill="none" stroke="#fff" stroke-width="1.2"/></svg>
<span class="t" style="left:1813.50px;top:1043.74px;font-size:12px;line-height:14px;letter-spacing:-0.241px;color:#fff;font-family:'Liberation Sans',sans-serif;-webkit-text-stroke:0;">8:53 PM</span>
<span class="t" style="left:1809.00px;top:1061.54px;font-size:12px;line-height:14px;letter-spacing:-0.154px;color:#fff;font-family:'Liberation Sans',sans-serif;-webkit-text-stroke:0;">1/20/2022</span>
<svg class="b" style="left:1878px;top:1050px;" width="22" height="24" viewBox="0 0 22 24"><path d="M1.6 2.4H15.6V13H6.4L3.4 16V13H1.6Z" fill="#fff"/><path d="M4 5.4H13.2M4 7.8H13.2M4 10.2H13.2" stroke="#252a1c" stroke-width="1"/><circle cx="16.4" cy="16.4" r="5.4" fill="#2c3124" stroke="#fff" stroke-width="1.1"/></svg>
<span class="t" style="left:1891.62px;top:1060.71px;font-size:10px;line-height:12px;letter-spacing:0.000px;color:#fff;font-family:'Liberation Sans',sans-serif;-webkit-text-stroke:0;">2</span>
<div class="b" style="left:1916px;top:1040px;width:1px;height:40px;background:#6a7264;"></div>
</body></html>
